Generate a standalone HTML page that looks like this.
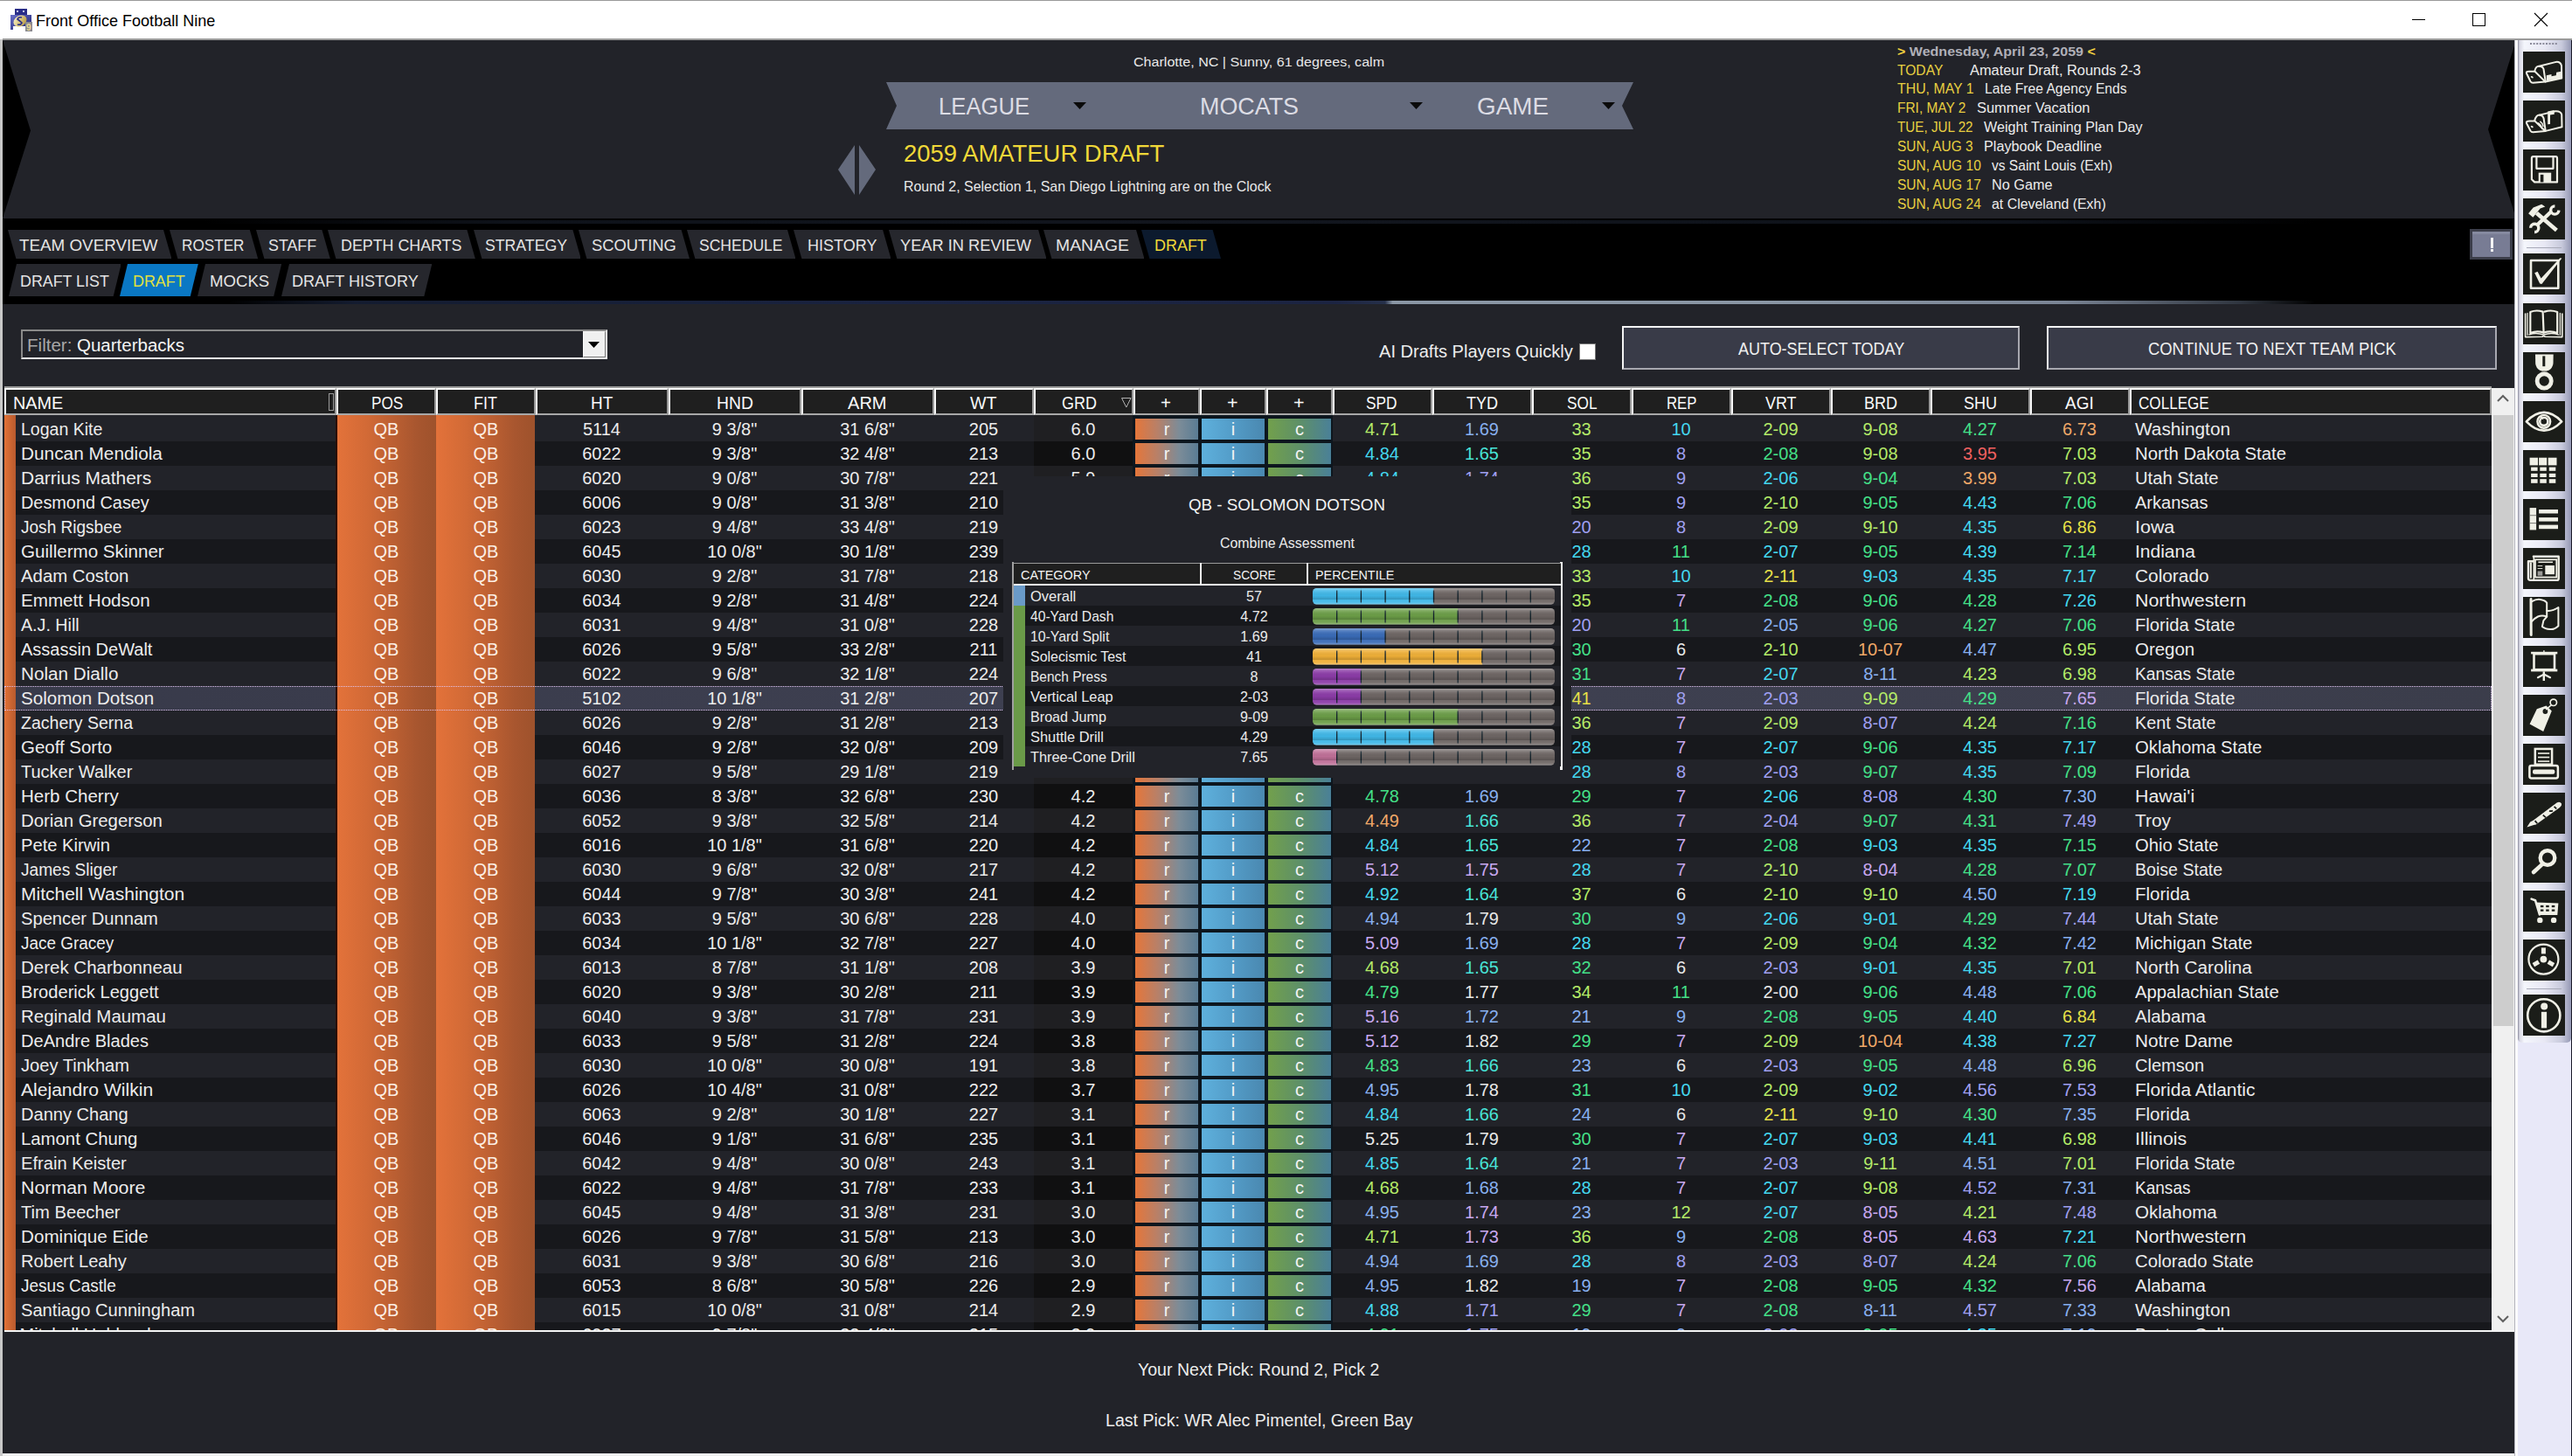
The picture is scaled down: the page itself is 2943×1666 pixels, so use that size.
<!DOCTYPE html><html><head><meta charset="utf-8"><title>Front Office Football Nine</title><style>
html,body{margin:0;padding:0;}body{width:2943px;height:1666px;position:relative;overflow:hidden;background:#ffffff;font-family:"Liberation Sans",sans-serif;}
body div{position:absolute;box-sizing:border-box;}
body svg{position:absolute;}
</style></head><body>
<div style="left:0px;top:0px;width:2943px;height:1px;background:#9a9a9a;"></div>
<svg width="26" height="26" viewBox="0 0 26 26" style="left:12px;top:10px"><defs><linearGradient id="ig" x1="0" y1="0" x2="1" y2="1"><stop offset="0" stop-color="#6a70c8"/><stop offset="1" stop-color="#1c2070"/></linearGradient><linearGradient id="fg" x1="0" y1="0" x2="1" y2="1"><stop offset="0" stop-color="#fff8d0"/><stop offset="1" stop-color="#b09030"/></linearGradient></defs><rect x="5" y="0" width="14" height="8" fill="#2a2e88"/><rect x="7" y="2" width="2" height="2" fill="#c0c0e8"/><rect x="14" y="2" width="2" height="2" fill="#c0c0e8"/><path d="M0 7 h24 v17 h-3 v-4 h-18 v4 h-3 z" fill="url(#ig)"/><ellipse cx="11" cy="14" rx="8" ry="6" transform="rotate(-30 11 14)" fill="url(#fg)"/><path d="M13 10 q-4 -1 -5 2 q3 2 5 4 q-1 3 -5 2" fill="none" stroke="#2a2e88" stroke-width="1.6"/><rect x="17" y="15" width="8" height="11" fill="#8a8a90"/><text x="18" y="25" font-family="Liberation Sans" font-size="10" font-weight="bold" fill="#e8d890">9</text></svg>
<svg width="225.4" height="29.8" style="left:36.86px;top:8.61px;overflow:visible"><text x="4" y="21.39" font-family="Liberation Sans, sans-serif" font-size="18.6" font-weight="normal" fill="#000000" textLength="205.39" lengthAdjust="spacingAndGlyphs">Front Office Football Nine</text></svg>
<div style="left:2760px;top:22px;width:15px;height:1px;background:#000;"></div>
<div style="left:2829px;top:15px;width:15px;height:15px;border:1px solid #000;"></div>
<svg width="17" height="17" style="left:2899px;top:14px"><path d="M1 1 L16 16 M16 1 L1 16" stroke="#000" stroke-width="1.1"/></svg>
<div style="left:0px;top:45px;width:3px;height:1621px;background:#c8c8c8;"></div>
<div style="left:3px;top:44px;width:2940px;height:2px;background:#9a9a9a;"></div>
<div style="left:3px;top:46px;width:2876px;height:1617px;background:#222329;"></div>
<svg width="40" height="205" style="left:3px;top:46px"><polygon points="0,0 32,103.5 0,204" fill="#000"/></svg>
<svg width="40" height="205" style="left:2839px;top:46px"><polygon points="40,0 8,102 40,204" fill="#000"/></svg>
<svg width="307.0" height="24.8" style="left:1293.08px;top:58.17px;overflow:visible"><text x="4" y="17.82" font-family="Liberation Sans, sans-serif" font-size="15.5" font-weight="normal" fill="#e8e8e8" textLength="287.04" lengthAdjust="spacingAndGlyphs">Charlotte, NC | Sunny, 61 degrees, calm</text></svg>
<svg width="860" height="56" style="left:1012px;top:93px"><polygon points="2,1 857,1 844,28 857,55 2,55 14,28" fill="#646a7c"/></svg>
<svg width="124.1" height="44.8" style="left:1070.28px;top:98.50px;overflow:visible"><text x="4" y="32.20" font-family="Liberation Sans, sans-serif" font-size="28" font-weight="normal" fill="#dcdce4" textLength="104.14" lengthAdjust="spacingAndGlyphs">LEAGUE</text></svg>
<svg width="133.0" height="44.8" style="left:1369.08px;top:98.50px;overflow:visible"><text x="4" y="32.20" font-family="Liberation Sans, sans-serif" font-size="28" font-weight="normal" fill="#dcdce4" textLength="113.04" lengthAdjust="spacingAndGlyphs">MOCATS</text></svg>
<svg width="102.0" height="44.8" style="left:1686.08px;top:98.50px;overflow:visible"><text x="4" y="32.20" font-family="Liberation Sans, sans-serif" font-size="28" font-weight="normal" fill="#dcdce4" textLength="82.04" lengthAdjust="spacingAndGlyphs">GAME</text></svg>
<svg width="16" height="10" style="left:1228px;top:117px"><polygon points="0,0 15,0 7.5,8" fill="#0a0a0a"/></svg>
<svg width="16" height="10" style="left:1613px;top:117px"><polygon points="0,0 15,0 7.5,8" fill="#0a0a0a"/></svg>
<svg width="16" height="10" style="left:1833px;top:117px"><polygon points="0,0 15,0 7.5,8" fill="#0a0a0a"/></svg>
<svg width="44" height="58" style="left:959px;top:166px"><polygon points="19,0 19,57 0,28" fill="#646a7c"/><polygon points="24,0 24,57 43,28" fill="#646a7c"/></svg>
<svg width="318.3" height="45.6" style="left:1029.86px;top:152.32px;overflow:visible"><text x="4" y="32.77" font-family="Liberation Sans, sans-serif" font-size="28.5" font-weight="normal" fill="#f0d838" textLength="298.28" lengthAdjust="spacingAndGlyphs">2059 AMATEUR DRAFT</text></svg>
<svg width="440.6" height="25.1" style="left:1029.97px;top:201.04px;overflow:visible"><text x="4" y="18.05" font-family="Liberation Sans, sans-serif" font-size="15.7" font-weight="normal" fill="#e8e8e8" textLength="420.56" lengthAdjust="spacingAndGlyphs">Round 2, Selection 1, San Diego Lightning are on the Clock</text></svg>
<svg width="246.8" height="24.8" style="left:2167.38px;top:46.08px;overflow:visible"><text x="4" y="17.82" font-family="Liberation Sans, sans-serif" font-size="15.5" font-weight="bold" fill="#b0b0b8" textLength="226.84" lengthAdjust="spacingAndGlyphs"><tspan fill="#f0d040">&gt;</tspan> Wednesday, April 23, 2059 <tspan fill="#f0d040">&lt;</tspan></text></svg>
<svg width="72.3" height="25.6" style="left:2167.36px;top:67.50px;overflow:visible"><text x="4" y="18.40" font-family="Liberation Sans, sans-serif" font-size="16" font-weight="normal" fill="#e8d040" textLength="52.28" lengthAdjust="spacingAndGlyphs">TODAY</text></svg>
<svg width="215.7" height="25.6" style="left:2250.36px;top:67.50px;overflow:visible"><text x="4" y="18.40" font-family="Liberation Sans, sans-serif" font-size="16" font-weight="normal" fill="#ececec" textLength="195.68" lengthAdjust="spacingAndGlyphs">Amateur Draft, Rounds 2-3</text></svg>
<svg width="107.6" height="25.6" style="left:2167.36px;top:89.46px;overflow:visible"><text x="4" y="18.40" font-family="Liberation Sans, sans-serif" font-size="16" font-weight="normal" fill="#e8d040" textLength="87.58" lengthAdjust="spacingAndGlyphs">THU, MAY 1</text></svg>
<svg width="182.6" height="25.6" style="left:2266.76px;top:89.46px;overflow:visible"><text x="4" y="18.40" font-family="Liberation Sans, sans-serif" font-size="16" font-weight="normal" fill="#ececec" textLength="162.58" lengthAdjust="spacingAndGlyphs">Late Free Agency Ends</text></svg>
<svg width="98.4" height="25.6" style="left:2167.36px;top:111.42px;overflow:visible"><text x="4" y="18.40" font-family="Liberation Sans, sans-serif" font-size="16" font-weight="normal" fill="#e8d040" textLength="78.38" lengthAdjust="spacingAndGlyphs">FRI, MAY 2</text></svg>
<svg width="149.5" height="25.6" style="left:2257.56px;top:111.42px;overflow:visible"><text x="4" y="18.40" font-family="Liberation Sans, sans-serif" font-size="16" font-weight="normal" fill="#ececec" textLength="129.48" lengthAdjust="spacingAndGlyphs">Summer Vacation</text></svg>
<svg width="106.6" height="25.6" style="left:2167.36px;top:133.38px;overflow:visible"><text x="4" y="18.40" font-family="Liberation Sans, sans-serif" font-size="16" font-weight="normal" fill="#e8d040" textLength="86.58" lengthAdjust="spacingAndGlyphs">TUE, JUL 22</text></svg>
<svg width="201.6" height="25.6" style="left:2265.76px;top:133.38px;overflow:visible"><text x="4" y="18.40" font-family="Liberation Sans, sans-serif" font-size="16" font-weight="normal" fill="#ececec" textLength="181.58" lengthAdjust="spacingAndGlyphs">Weight Training Plan Day</text></svg>
<svg width="106.6" height="25.6" style="left:2167.36px;top:155.34px;overflow:visible"><text x="4" y="18.40" font-family="Liberation Sans, sans-serif" font-size="16" font-weight="normal" fill="#e8d040" textLength="86.58" lengthAdjust="spacingAndGlyphs">SUN, AUG 3</text></svg>
<svg width="155.1" height="25.6" style="left:2265.76px;top:155.34px;overflow:visible"><text x="4" y="18.40" font-family="Liberation Sans, sans-serif" font-size="16" font-weight="normal" fill="#ececec" textLength="135.08" lengthAdjust="spacingAndGlyphs">Playbook Deadline</text></svg>
<svg width="115.8" height="25.6" style="left:2167.36px;top:177.30px;overflow:visible"><text x="4" y="18.40" font-family="Liberation Sans, sans-serif" font-size="16" font-weight="normal" fill="#e8d040" textLength="95.78" lengthAdjust="spacingAndGlyphs">SUN, AUG 10</text></svg>
<svg width="158.3" height="25.6" style="left:2274.66px;top:177.30px;overflow:visible"><text x="4" y="18.40" font-family="Liberation Sans, sans-serif" font-size="16" font-weight="normal" fill="#ececec" textLength="138.28" lengthAdjust="spacingAndGlyphs">vs Saint Louis (Exh)</text></svg>
<svg width="115.8" height="25.6" style="left:2167.36px;top:199.26px;overflow:visible"><text x="4" y="18.40" font-family="Liberation Sans, sans-serif" font-size="16" font-weight="normal" fill="#e8d040" textLength="95.78" lengthAdjust="spacingAndGlyphs">SUN, AUG 17</text></svg>
<svg width="89.5" height="25.6" style="left:2274.66px;top:199.26px;overflow:visible"><text x="4" y="18.40" font-family="Liberation Sans, sans-serif" font-size="16" font-weight="normal" fill="#ececec" textLength="69.48" lengthAdjust="spacingAndGlyphs">No Game</text></svg>
<svg width="115.8" height="25.6" style="left:2167.36px;top:221.22px;overflow:visible"><text x="4" y="18.40" font-family="Liberation Sans, sans-serif" font-size="16" font-weight="normal" fill="#e8d040" textLength="95.78" lengthAdjust="spacingAndGlyphs">SUN, AUG 24</text></svg>
<svg width="150.7" height="25.6" style="left:2274.66px;top:221.22px;overflow:visible"><text x="4" y="18.40" font-family="Liberation Sans, sans-serif" font-size="16" font-weight="normal" fill="#ececec" textLength="130.68" lengthAdjust="spacingAndGlyphs">at Cleveland (Exh)</text></svg>
<div style="left:3px;top:250px;width:2876px;height:98px;background:#000;"></div>
<div style="left:3px;top:252px;width:2876px;height:4px;background:linear-gradient(90deg,#000 0%,#000 8%,#0e121a 20%,#12161e 50%,#0e121a 80%,#000 92%);"></div>
<div style="left:3px;top:344px;width:2876px;height:4px;background:linear-gradient(90deg,#000 0%,#000 9%,#141c30 14%,#1a2340 35%,#1c2442 53%,#26304a 55%,#8a96a4 55.3%,#8a96a4 70%,#7a8494 82%,#303640 89%,#000 92%,#000 100%);"></div>
<svg width="187.4" height="33" style="left:8.6px;top:263px"><polygon points="0.0,0 178.0,0 187.4,33 9.4,33" fill="#26272d"/></svg>
<svg width="178.5" height="30.2" style="left:18.24px;top:265.26px;overflow:visible"><text x="4" y="21.73" font-family="Liberation Sans, sans-serif" font-size="18.9" font-weight="normal" fill="#e4e4e4" textLength="158.51" lengthAdjust="spacingAndGlyphs">TEAM OVERVIEW</text></svg>
<svg width="101.2" height="33" style="left:194.4px;top:263px"><polygon points="0.0,0 91.8,0 101.2,33 9.4,33" fill="#26272d"/></svg>
<svg width="91.5" height="30.2" style="left:204.24px;top:265.26px;overflow:visible"><text x="4" y="21.73" font-family="Liberation Sans, sans-serif" font-size="18.9" font-weight="normal" fill="#e4e4e4" textLength="71.51" lengthAdjust="spacingAndGlyphs">ROSTER</text></svg>
<svg width="84.8" height="33" style="left:293.2px;top:263px"><polygon points="0.0,0 75.4,0 84.8,33 9.4,33" fill="#26272d"/></svg>
<svg width="75.1" height="30.2" style="left:303.24px;top:265.26px;overflow:visible"><text x="4" y="21.73" font-family="Liberation Sans, sans-serif" font-size="18.9" font-weight="normal" fill="#e4e4e4" textLength="55.11" lengthAdjust="spacingAndGlyphs">STAFF</text></svg>
<svg width="168.8" height="33" style="left:375.2px;top:263px"><polygon points="0.0,0 159.4,0 168.8,33 9.4,33" fill="#26272d"/></svg>
<svg width="158.4" height="30.2" style="left:385.94px;top:265.26px;overflow:visible"><text x="4" y="21.73" font-family="Liberation Sans, sans-serif" font-size="18.9" font-weight="normal" fill="#e4e4e4" textLength="138.41" lengthAdjust="spacingAndGlyphs">DEPTH CHARTS</text></svg>
<svg width="122.8" height="33" style="left:541.6px;top:263px"><polygon points="0.0,0 113.4,0 122.8,33 9.4,33" fill="#26272d"/></svg>
<svg width="114.0" height="30.2" style="left:551.24px;top:265.26px;overflow:visible"><text x="4" y="21.73" font-family="Liberation Sans, sans-serif" font-size="18.9" font-weight="normal" fill="#e4e4e4" textLength="94.01" lengthAdjust="spacingAndGlyphs">STRATEGY</text></svg>
<svg width="127.0" height="33" style="left:662.0px;top:263px"><polygon points="0.0,0 117.6,0 127.0,33 9.4,33" fill="#26272d"/></svg>
<svg width="116.8" height="30.2" style="left:672.54px;top:265.26px;overflow:visible"><text x="4" y="21.73" font-family="Liberation Sans, sans-serif" font-size="18.9" font-weight="normal" fill="#e4e4e4" textLength="96.81" lengthAdjust="spacingAndGlyphs">SCOUTING</text></svg>
<svg width="124.4" height="33" style="left:786.0px;top:263px"><polygon points="0.0,0 115.0,0 124.4,33 9.4,33" fill="#26272d"/></svg>
<svg width="115.5" height="30.2" style="left:796.24px;top:265.26px;overflow:visible"><text x="4" y="21.73" font-family="Liberation Sans, sans-serif" font-size="18.9" font-weight="normal" fill="#e4e4e4" textLength="95.51" lengthAdjust="spacingAndGlyphs">SCHEDULE</text></svg>
<svg width="111.5" height="33" style="left:907.9px;top:263px"><polygon points="0.0,0 102.1,0 111.5,33 9.4,33" fill="#26272d"/></svg>
<svg width="99.4" height="30.2" style="left:919.84px;top:265.26px;overflow:visible"><text x="4" y="21.73" font-family="Liberation Sans, sans-serif" font-size="18.9" font-weight="normal" fill="#e4e4e4" textLength="79.41" lengthAdjust="spacingAndGlyphs">HISTORY</text></svg>
<svg width="180.5" height="33" style="left:1016.9px;top:263px"><polygon points="0.0,0 171.1,0 180.5,33 9.4,33" fill="#26272d"/></svg>
<svg width="170.0" height="30.2" style="left:1026.14px;top:265.26px;overflow:visible"><text x="4" y="21.73" font-family="Liberation Sans, sans-serif" font-size="18.9" font-weight="normal" fill="#e4e4e4" textLength="150.01" lengthAdjust="spacingAndGlyphs">YEAR IN REVIEW</text></svg>
<svg width="115.4" height="33" style="left:1194.0px;top:263px"><polygon points="0.0,0 106.0,0 115.4,33 9.4,33" fill="#26272d"/></svg>
<svg width="103.9" height="30.2" style="left:1203.84px;top:265.26px;overflow:visible"><text x="4" y="21.73" font-family="Liberation Sans, sans-serif" font-size="18.9" font-weight="normal" fill="#e4e4e4" textLength="83.91" lengthAdjust="spacingAndGlyphs">MANAGE</text></svg>
<svg width="91.0" height="33" style="left:1305.8px;top:263px"><polygon points="0.0,0 81.6,0 91.0,33 9.4,33" fill="#0c1a2e"/></svg>
<svg width="79.8" height="30.2" style="left:1316.54px;top:265.26px;overflow:visible"><text x="4" y="21.73" font-family="Liberation Sans, sans-serif" font-size="18.9" font-weight="normal" fill="#f0d838" textLength="59.81" lengthAdjust="spacingAndGlyphs">DRAFT</text></svg>
<svg width="128.7" height="37" style="left:9.7px;top:302px"><polygon points="9.0,0 128.7,0 119.7,37 0.0,37" fill="#26272d"/></svg>
<svg width="121.8" height="30.2" style="left:18.54px;top:305.76px;overflow:visible"><text x="4" y="21.73" font-family="Liberation Sans, sans-serif" font-size="18.9" font-weight="normal" fill="#e4e4e4" textLength="101.81" lengthAdjust="spacingAndGlyphs">DRAFT LIST</text></svg>
<svg width="89.8" height="37" style="left:137.2px;top:302px"><polygon points="9.0,0 89.8,0 80.8,37 0.0,37" fill="#0a78c4"/></svg>
<svg width="79.7" height="30.2" style="left:148.04px;top:305.76px;overflow:visible"><text x="4" y="21.73" font-family="Liberation Sans, sans-serif" font-size="18.9" font-weight="normal" fill="#e0e040" textLength="59.71" lengthAdjust="spacingAndGlyphs">DRAFT</text></svg>
<svg width="96.2" height="37" style="left:225.8px;top:302px"><polygon points="9.0,0 96.2,0 87.2,37 0.0,37" fill="#26272d"/></svg>
<svg width="88.2" height="30.2" style="left:235.54px;top:305.76px;overflow:visible"><text x="4" y="21.73" font-family="Liberation Sans, sans-serif" font-size="18.9" font-weight="normal" fill="#e4e4e4" textLength="68.21" lengthAdjust="spacingAndGlyphs">MOCKS</text></svg>
<svg width="172.3" height="37" style="left:321.5px;top:302px"><polygon points="9.0,0 172.3,0 163.3,37 0.0,37" fill="#26272d"/></svg>
<svg width="164.7" height="30.2" style="left:330.24px;top:305.76px;overflow:visible"><text x="4" y="21.73" font-family="Liberation Sans, sans-serif" font-size="18.9" font-weight="normal" fill="#e4e4e4" textLength="144.71" lengthAdjust="spacingAndGlyphs">DRAFT HISTORY</text></svg>
<div style="left:2826px;top:262px;width:49px;height:35px;background:#787c94;border:3px solid #3c3e4a;"></div>
<div style="left:2829px;top:265px;width:43px;height:3px;background:#868aa0;"></div>
<div style="left:2850px;top:272px;width:3px;height:12px;background:#f4f4f4;"></div>
<div style="left:2850px;top:285px;width:3px;height:3px;background:#f4f4f4;"></div>
<div style="left:24px;top:377px;width:671px;height:34px;background:#222329;border:2px solid;border-color:#8a8a8a #f0f0f0 #f0f0f0 #8a8a8a;"></div>
<svg width="71.4" height="32.0" style="left:27.00px;top:379.20px;overflow:visible"><text x="4" y="23.00" font-family="Liberation Sans, sans-serif" font-size="20" font-weight="normal" fill="#a8a8a8" textLength="51.40" lengthAdjust="spacingAndGlyphs">Filter:</text></svg>
<svg width="143.1" height="32.0" style="left:83.70px;top:379.20px;overflow:visible"><text x="4" y="23.00" font-family="Liberation Sans, sans-serif" font-size="20" font-weight="normal" fill="#f4f4f4" textLength="123.10" lengthAdjust="spacingAndGlyphs">Quarterbacks</text></svg>
<div style="left:667px;top:379px;width:26px;height:30px;background:#f0f0f0;border:1px solid;border-color:#fafafa #7a7a7a #7a7a7a #fafafa;"></div>
<svg width="14" height="8" style="left:673px;top:391px"><polygon points="0,0 13,0 6.5,7" fill="#000"/></svg>
<svg width="241.9" height="31.2" style="left:1574.42px;top:386.68px;overflow:visible"><text x="4" y="22.42" font-family="Liberation Sans, sans-serif" font-size="19.5" font-weight="normal" fill="#ececec" textLength="221.86" lengthAdjust="spacingAndGlyphs">AI Drafts Players Quickly</text></svg>
<div style="left:1807px;top:393px;width:19px;height:19px;background:#ffffff;border:1px solid #777;"></div>
<div style="left:1856px;top:373px;width:455px;height:50px;background:#393b48;border:2px solid;border-color:#f4f4f4 #a8a8b0 #a8a8b0 #f4f4f4;"></div>
<svg width="210.2" height="31.2" style="left:1984.52px;top:383.57px;overflow:visible"><text x="4" y="22.42" font-family="Liberation Sans, sans-serif" font-size="19.5" font-weight="normal" fill="#f0f0f0" textLength="190.16" lengthAdjust="spacingAndGlyphs">AUTO-SELECT TODAY</text></svg>
<div style="left:2342px;top:373px;width:515px;height:50px;background:#393b48;border:2px solid;border-color:#f4f4f4 #a8a8b0 #a8a8b0 #f4f4f4;"></div>
<svg width="303.9" height="31.2" style="left:2453.82px;top:383.57px;overflow:visible"><text x="4" y="22.42" font-family="Liberation Sans, sans-serif" font-size="19.5" font-weight="normal" fill="#f0f0f0" textLength="283.86" lengthAdjust="spacingAndGlyphs">CONTINUE TO NEXT TEAM PICK</text></svg>
<div style="left:5px;top:442px;width:2846px;height:2px;background:#9c9c9c;"></div>
<div style="left:5px;top:444px;width:380px;height:31px;background:#1f1f1f;border-left:2px solid #fafafa;border-top:2px solid #fafafa;border-right:2px solid #9a9a9a;border-bottom:2px solid #a8a8a8;"></div>
<svg width="77.4" height="31.4" style="left:10.72px;top:444.96px;overflow:visible"><text x="4" y="22.54" font-family="Liberation Sans, sans-serif" font-size="19.6" font-weight="normal" fill="#fafafa" textLength="57.37" lengthAdjust="spacingAndGlyphs">NAME</text></svg>
<div style="left:385px;top:444px;width:114px;height:31px;background:#1f1f1f;border-left:2px solid #fafafa;border-top:2px solid #fafafa;border-right:2px solid #9a9a9a;border-bottom:2px solid #a8a8a8;"></div>
<svg width="56.3" height="31.4" style="left:420.52px;top:444.96px;overflow:visible"><text x="4" y="22.54" font-family="Liberation Sans, sans-serif" font-size="19.6" font-weight="normal" fill="#fafafa" textLength="36.27" lengthAdjust="spacingAndGlyphs">POS</text></svg>
<div style="left:499px;top:444px;width:114px;height:31px;background:#1f1f1f;border-left:2px solid #fafafa;border-top:2px solid #fafafa;border-right:2px solid #9a9a9a;border-bottom:2px solid #a8a8a8;"></div>
<svg width="46.9" height="31.4" style="left:538.22px;top:444.96px;overflow:visible"><text x="4" y="22.54" font-family="Liberation Sans, sans-serif" font-size="19.6" font-weight="normal" fill="#fafafa" textLength="26.87" lengthAdjust="spacingAndGlyphs">FIT</text></svg>
<div style="left:613px;top:444px;width:152px;height:31px;background:#1f1f1f;border-left:2px solid #fafafa;border-top:2px solid #fafafa;border-right:2px solid #9a9a9a;border-bottom:2px solid #a8a8a8;"></div>
<svg width="45.3" height="31.4" style="left:672.02px;top:444.96px;overflow:visible"><text x="4" y="22.54" font-family="Liberation Sans, sans-serif" font-size="19.6" font-weight="normal" fill="#fafafa" textLength="25.27" lengthAdjust="spacingAndGlyphs">HT</text></svg>
<div style="left:765px;top:444px;width:152px;height:31px;background:#1f1f1f;border-left:2px solid #fafafa;border-top:2px solid #fafafa;border-right:2px solid #9a9a9a;border-bottom:2px solid #a8a8a8;"></div>
<svg width="61.9" height="31.4" style="left:816.22px;top:444.96px;overflow:visible"><text x="4" y="22.54" font-family="Liberation Sans, sans-serif" font-size="19.6" font-weight="normal" fill="#fafafa" textLength="41.87" lengthAdjust="spacingAndGlyphs">HND</text></svg>
<div style="left:917px;top:444px;width:152px;height:31px;background:#1f1f1f;border-left:2px solid #fafafa;border-top:2px solid #fafafa;border-right:2px solid #9a9a9a;border-bottom:2px solid #a8a8a8;"></div>
<svg width="64.6" height="31.4" style="left:966.22px;top:444.96px;overflow:visible"><text x="4" y="22.54" font-family="Liberation Sans, sans-serif" font-size="19.6" font-weight="normal" fill="#fafafa" textLength="44.57" lengthAdjust="spacingAndGlyphs">ARM</text></svg>
<div style="left:1069px;top:444px;width:114px;height:31px;background:#1f1f1f;border-left:2px solid #fafafa;border-top:2px solid #fafafa;border-right:2px solid #9a9a9a;border-bottom:2px solid #a8a8a8;"></div>
<svg width="50.6" height="31.4" style="left:1106.22px;top:444.96px;overflow:visible"><text x="4" y="22.54" font-family="Liberation Sans, sans-serif" font-size="19.6" font-weight="normal" fill="#fafafa" textLength="30.57" lengthAdjust="spacingAndGlyphs">WT</text></svg>
<div style="left:1183px;top:444px;width:114px;height:31px;background:#1f1f1f;border-left:2px solid #fafafa;border-top:2px solid #fafafa;border-right:2px solid #9a9a9a;border-bottom:2px solid #a8a8a8;"></div>
<svg width="59.9" height="31.4" style="left:1211.12px;top:444.96px;overflow:visible"><text x="4" y="22.54" font-family="Liberation Sans, sans-serif" font-size="19.6" font-weight="normal" fill="#fafafa" textLength="39.87" lengthAdjust="spacingAndGlyphs">GRD</text></svg>
<div style="left:1297px;top:444px;width:76px;height:31px;background:#1f1f1f;border-left:2px solid #fafafa;border-top:2px solid #fafafa;border-right:2px solid #9a9a9a;border-bottom:2px solid #a8a8a8;"></div>
<svg width="32.0" height="31.4" style="left:1324.22px;top:444.96px;overflow:visible"><text x="4" y="22.54" font-family="Liberation Sans, sans-serif" font-size="19.6" font-weight="normal" fill="#fafafa" textLength="11.97" lengthAdjust="spacingAndGlyphs">+</text></svg>
<div style="left:1373px;top:444px;width:76px;height:31px;background:#1f1f1f;border-left:2px solid #fafafa;border-top:2px solid #fafafa;border-right:2px solid #9a9a9a;border-bottom:2px solid #a8a8a8;"></div>
<svg width="32.6" height="31.4" style="left:1400.42px;top:444.96px;overflow:visible"><text x="4" y="22.54" font-family="Liberation Sans, sans-serif" font-size="19.6" font-weight="normal" fill="#fafafa" textLength="12.57" lengthAdjust="spacingAndGlyphs">+</text></svg>
<div style="left:1449px;top:444px;width:76px;height:31px;background:#1f1f1f;border-left:2px solid #fafafa;border-top:2px solid #fafafa;border-right:2px solid #9a9a9a;border-bottom:2px solid #a8a8a8;"></div>
<svg width="32.6" height="31.4" style="left:1476.02px;top:444.96px;overflow:visible"><text x="4" y="22.54" font-family="Liberation Sans, sans-serif" font-size="19.6" font-weight="normal" fill="#fafafa" textLength="12.57" lengthAdjust="spacingAndGlyphs">+</text></svg>
<div style="left:1525px;top:444px;width:114px;height:31px;background:#1f1f1f;border-left:2px solid #fafafa;border-top:2px solid #fafafa;border-right:2px solid #9a9a9a;border-bottom:2px solid #a8a8a8;"></div>
<svg width="55.6" height="31.4" style="left:1559.22px;top:444.96px;overflow:visible"><text x="4" y="22.54" font-family="Liberation Sans, sans-serif" font-size="19.6" font-weight="normal" fill="#fafafa" textLength="35.57" lengthAdjust="spacingAndGlyphs">SPD</text></svg>
<div style="left:1639px;top:444px;width:114px;height:31px;background:#1f1f1f;border-left:2px solid #fafafa;border-top:2px solid #fafafa;border-right:2px solid #9a9a9a;border-bottom:2px solid #a8a8a8;"></div>
<svg width="56.2" height="31.4" style="left:1673.62px;top:444.96px;overflow:visible"><text x="4" y="22.54" font-family="Liberation Sans, sans-serif" font-size="19.6" font-weight="normal" fill="#fafafa" textLength="36.17" lengthAdjust="spacingAndGlyphs">TYD</text></svg>
<div style="left:1753px;top:444px;width:114px;height:31px;background:#1f1f1f;border-left:2px solid #fafafa;border-top:2px solid #fafafa;border-right:2px solid #9a9a9a;border-bottom:2px solid #a8a8a8;"></div>
<svg width="54.5" height="31.4" style="left:1788.72px;top:444.96px;overflow:visible"><text x="4" y="22.54" font-family="Liberation Sans, sans-serif" font-size="19.6" font-weight="normal" fill="#fafafa" textLength="34.47" lengthAdjust="spacingAndGlyphs">SOL</text></svg>
<div style="left:1867px;top:444px;width:114px;height:31px;background:#1f1f1f;border-left:2px solid #fafafa;border-top:2px solid #fafafa;border-right:2px solid #9a9a9a;border-bottom:2px solid #a8a8a8;"></div>
<svg width="54.5" height="31.4" style="left:1902.72px;top:444.96px;overflow:visible"><text x="4" y="22.54" font-family="Liberation Sans, sans-serif" font-size="19.6" font-weight="normal" fill="#fafafa" textLength="34.47" lengthAdjust="spacingAndGlyphs">REP</text></svg>
<div style="left:1981px;top:444px;width:114px;height:31px;background:#1f1f1f;border-left:2px solid #fafafa;border-top:2px solid #fafafa;border-right:2px solid #9a9a9a;border-bottom:2px solid #a8a8a8;"></div>
<svg width="55.6" height="31.4" style="left:2016.02px;top:444.96px;overflow:visible"><text x="4" y="22.54" font-family="Liberation Sans, sans-serif" font-size="19.6" font-weight="normal" fill="#fafafa" textLength="35.57" lengthAdjust="spacingAndGlyphs">VRT</text></svg>
<div style="left:2095px;top:444px;width:114px;height:31px;background:#1f1f1f;border-left:2px solid #fafafa;border-top:2px solid #fafafa;border-right:2px solid #9a9a9a;border-bottom:2px solid #a8a8a8;"></div>
<svg width="58.2" height="31.4" style="left:2128.62px;top:444.96px;overflow:visible"><text x="4" y="22.54" font-family="Liberation Sans, sans-serif" font-size="19.6" font-weight="normal" fill="#fafafa" textLength="38.17" lengthAdjust="spacingAndGlyphs">BRD</text></svg>
<div style="left:2209px;top:444px;width:114px;height:31px;background:#1f1f1f;border-left:2px solid #fafafa;border-top:2px solid #fafafa;border-right:2px solid #9a9a9a;border-bottom:2px solid #a8a8a8;"></div>
<svg width="58.2" height="31.4" style="left:2242.62px;top:444.96px;overflow:visible"><text x="4" y="22.54" font-family="Liberation Sans, sans-serif" font-size="19.6" font-weight="normal" fill="#fafafa" textLength="38.17" lengthAdjust="spacingAndGlyphs">SHU</text></svg>
<div style="left:2323px;top:444px;width:114px;height:31px;background:#1f1f1f;border-left:2px solid #fafafa;border-top:2px solid #fafafa;border-right:2px solid #9a9a9a;border-bottom:2px solid #a8a8a8;"></div>
<svg width="52.7" height="31.4" style="left:2358.52px;top:444.96px;overflow:visible"><text x="4" y="22.54" font-family="Liberation Sans, sans-serif" font-size="19.6" font-weight="normal" fill="#fafafa" textLength="32.67" lengthAdjust="spacingAndGlyphs">AGI</text></svg>
<div style="left:2437px;top:444px;width:414px;height:31px;background:#1f1f1f;border-left:2px solid #fafafa;border-top:2px solid #fafafa;border-right:2px solid #9a9a9a;border-bottom:2px solid #a8a8a8;"></div>
<svg width="100.8" height="31.4" style="left:2442.72px;top:444.96px;overflow:visible"><text x="4" y="22.54" font-family="Liberation Sans, sans-serif" font-size="19.6" font-weight="normal" fill="#fafafa" textLength="80.77" lengthAdjust="spacingAndGlyphs">COLLEGE</text></svg>
<div style="left:376px;top:450px;width:6px;height:20px;border:1px solid #9a9a9a;"></div>
<svg width="12" height="12" style="left:1283px;top:455px"><polygon points="0.5,0.5 11,0.5 5.75,11" fill="none" stroke="#b0b0b0" stroke-width="1"/></svg>
<div style="left:2851px;top:444px;width:26px;height:1079px;background:#f0f0f0;"></div>
<div style="left:2853px;top:475px;width:23px;height:699px;background:#cdcdcd;"></div>
<svg width="14" height="9" style="left:2857px;top:451px"><polyline points="1,8 7,2 13,8" fill="none" stroke="#606060" stroke-width="2"/></svg>
<svg width="14" height="9" style="left:2857px;top:1505px"><polyline points="1,1 7,7 13,1" fill="none" stroke="#606060" stroke-width="2"/></svg>
<div style="left:5px;top:475px;width:2846px;height:1047px;overflow:hidden;background:#222329;">
<div style="left:0;top:0px;width:2846px;height:30px;background:#222329"></div>
<div style="left:1178px;top:0px;width:113px;height:30px;background:#1f1f22"></div>
<div style="left:1291px;top:0px;width:229px;height:30px;background:#0d161e"></div>
<div style="left:0;top:0px;width:13px;height:30px;background:linear-gradient(90deg,#e27236,#b85a2e)"></div>
<div style="left:381px;top:0px;width:113px;height:30px;background:linear-gradient(90deg,#e3723a 0%,#d26a36 30%,#a8562f 80%,#9e522c 100%)"></div>
<div style="left:494px;top:0px;width:113px;height:30px;background:linear-gradient(90deg,#e3723a 0%,#d26a36 30%,#a8562f 80%,#9e522c 100%)"></div>
<div style="left:379px;top:0px;width:2px;height:30px;background:#2a0e04"></div>
<div style="left:1294px;top:4px;width:72px;height:24px;background:linear-gradient(90deg,#e5763a 0%,#b88068 35%,#7c8c98 70%,#5a7c94 100%);color:#f4f4f4;font-size:20px;line-height:24px;text-align:center">r</div>
<div style="left:1370px;top:4px;width:72px;height:24px;background:linear-gradient(90deg,#5eb0dc 0%,#55a0cc 40%,#4a88b0 100%);color:#f4f4f4;font-size:20px;line-height:24px;text-align:center">i</div>
<div style="left:1446px;top:4px;width:72px;height:24px;background:linear-gradient(90deg,#72a04c 0%,#5e9068 50%,#4a8098 100%);color:#f4f4f4;font-size:20px;line-height:24px;text-align:center">c</div>
<svg width="113.4" height="32.0" style="left:14.60px;top:0.20px;overflow:visible"><text x="4" y="23.00" font-family="Liberation Sans, sans-serif" font-size="20" font-weight="normal" fill="#ececec" textLength="93.40" lengthAdjust="spacingAndGlyphs">Logan Kite</text></svg>
<div style="left:381px;top:2px;width:112px;height:28px;text-align:center;font-size:20px;line-height:29px;color:#fcefe4;white-space:nowrap">QB</div>
<div style="left:495px;top:2px;width:112px;height:28px;text-align:center;font-size:20px;line-height:29px;color:#fcefe4;white-space:nowrap">QB</div>
<div style="left:608px;top:2px;width:151px;height:28px;text-align:center;font-size:20px;line-height:29px;color:#ececec;white-space:nowrap">5114</div>
<div style="left:760px;top:2px;width:151px;height:28px;text-align:center;font-size:20px;line-height:29px;color:#ececec;white-space:nowrap">9 3/8&quot;</div>
<div style="left:912px;top:2px;width:151px;height:28px;text-align:center;font-size:20px;line-height:29px;color:#ececec;white-space:nowrap">31 6/8&quot;</div>
<div style="left:1064px;top:2px;width:113px;height:28px;text-align:center;font-size:20px;line-height:29px;color:#ececec;white-space:nowrap">205</div>
<div style="left:1178px;top:2px;width:113px;height:28px;text-align:center;font-size:20px;line-height:29px;color:#ececec;white-space:nowrap">6.0</div>
<div style="left:1520px;top:2px;width:113px;height:28px;text-align:center;font-size:20px;line-height:29px;color:#b4ea68;white-space:nowrap">4.71</div>
<div style="left:1634px;top:2px;width:113px;height:28px;text-align:center;font-size:20px;line-height:29px;color:#88b0f0;white-space:nowrap">1.69</div>
<div style="left:1748px;top:2px;width:113px;height:28px;text-align:center;font-size:20px;line-height:29px;color:#b4ea68;white-space:nowrap">33</div>
<div style="left:1862px;top:2px;width:113px;height:28px;text-align:center;font-size:20px;line-height:29px;color:#44d8f0;white-space:nowrap">10</div>
<div style="left:1976px;top:2px;width:113px;height:28px;text-align:center;font-size:20px;line-height:29px;color:#b4ea68;white-space:nowrap">2-09</div>
<div style="left:2090px;top:2px;width:113px;height:28px;text-align:center;font-size:20px;line-height:29px;color:#b4ea68;white-space:nowrap">9-08</div>
<div style="left:2204px;top:2px;width:113px;height:28px;text-align:center;font-size:20px;line-height:29px;color:#44e088;white-space:nowrap">4.27</div>
<div style="left:2318px;top:2px;width:113px;height:28px;text-align:center;font-size:20px;line-height:29px;color:#f0a868;white-space:nowrap">6.73</div>
<svg width="129.0" height="32.0" style="left:2433.70px;top:0.20px;overflow:visible"><text x="4" y="23.00" font-family="Liberation Sans, sans-serif" font-size="20" font-weight="normal" fill="#ececec" textLength="109.00" lengthAdjust="spacingAndGlyphs">Washington</text></svg>
<div style="left:0;top:30px;width:2846px;height:28px;background:#17181c"></div>
<div style="left:1178px;top:30px;width:113px;height:28px;background:#101011"></div>
<div style="left:1291px;top:30px;width:229px;height:28px;background:#0d161e"></div>
<div style="left:0;top:30px;width:13px;height:28px;background:linear-gradient(90deg,#e27236,#b85a2e)"></div>
<div style="left:381px;top:30px;width:113px;height:28px;background:linear-gradient(90deg,#e3723a 0%,#d26a36 30%,#a8562f 80%,#9e522c 100%)"></div>
<div style="left:494px;top:30px;width:113px;height:28px;background:linear-gradient(90deg,#e3723a 0%,#d26a36 30%,#a8562f 80%,#9e522c 100%)"></div>
<div style="left:379px;top:30px;width:2px;height:28px;background:#2a0e04"></div>
<div style="left:1294px;top:32px;width:72px;height:24px;background:linear-gradient(90deg,#e5763a 0%,#b88068 35%,#7c8c98 70%,#5a7c94 100%);color:#f4f4f4;font-size:20px;line-height:24px;text-align:center">r</div>
<div style="left:1370px;top:32px;width:72px;height:24px;background:linear-gradient(90deg,#5eb0dc 0%,#55a0cc 40%,#4a88b0 100%);color:#f4f4f4;font-size:20px;line-height:24px;text-align:center">i</div>
<div style="left:1446px;top:32px;width:72px;height:24px;background:linear-gradient(90deg,#72a04c 0%,#5e9068 50%,#4a8098 100%);color:#f4f4f4;font-size:20px;line-height:24px;text-align:center">c</div>
<svg width="181.9" height="32.0" style="left:14.60px;top:28.20px;overflow:visible"><text x="4" y="23.00" font-family="Liberation Sans, sans-serif" font-size="20" font-weight="normal" fill="#ececec" textLength="161.90" lengthAdjust="spacingAndGlyphs">Duncan Mendiola</text></svg>
<div style="left:381px;top:30px;width:112px;height:28px;text-align:center;font-size:20px;line-height:29px;color:#fcefe4;white-space:nowrap">QB</div>
<div style="left:495px;top:30px;width:112px;height:28px;text-align:center;font-size:20px;line-height:29px;color:#fcefe4;white-space:nowrap">QB</div>
<div style="left:608px;top:30px;width:151px;height:28px;text-align:center;font-size:20px;line-height:29px;color:#ececec;white-space:nowrap">6022</div>
<div style="left:760px;top:30px;width:151px;height:28px;text-align:center;font-size:20px;line-height:29px;color:#ececec;white-space:nowrap">9 3/8&quot;</div>
<div style="left:912px;top:30px;width:151px;height:28px;text-align:center;font-size:20px;line-height:29px;color:#ececec;white-space:nowrap">32 4/8&quot;</div>
<div style="left:1064px;top:30px;width:113px;height:28px;text-align:center;font-size:20px;line-height:29px;color:#ececec;white-space:nowrap">213</div>
<div style="left:1178px;top:30px;width:113px;height:28px;text-align:center;font-size:20px;line-height:29px;color:#ececec;white-space:nowrap">6.0</div>
<div style="left:1520px;top:30px;width:113px;height:28px;text-align:center;font-size:20px;line-height:29px;color:#44d8f0;white-space:nowrap">4.84</div>
<div style="left:1634px;top:30px;width:113px;height:28px;text-align:center;font-size:20px;line-height:29px;color:#48e4d8;white-space:nowrap">1.65</div>
<div style="left:1748px;top:30px;width:113px;height:28px;text-align:center;font-size:20px;line-height:29px;color:#b4ea68;white-space:nowrap">35</div>
<div style="left:1862px;top:30px;width:113px;height:28px;text-align:center;font-size:20px;line-height:29px;color:#a0a0f2;white-space:nowrap">8</div>
<div style="left:1976px;top:30px;width:113px;height:28px;text-align:center;font-size:20px;line-height:29px;color:#44e088;white-space:nowrap">2-08</div>
<div style="left:2090px;top:30px;width:113px;height:28px;text-align:center;font-size:20px;line-height:29px;color:#b4ea68;white-space:nowrap">9-08</div>
<div style="left:2204px;top:30px;width:113px;height:28px;text-align:center;font-size:20px;line-height:29px;color:#f06060;white-space:nowrap">3.95</div>
<div style="left:2318px;top:30px;width:113px;height:28px;text-align:center;font-size:20px;line-height:29px;color:#b4ea68;white-space:nowrap">7.03</div>
<svg width="193.0" height="32.0" style="left:2433.70px;top:28.20px;overflow:visible"><text x="4" y="23.00" font-family="Liberation Sans, sans-serif" font-size="20" font-weight="normal" fill="#ececec" textLength="173.00" lengthAdjust="spacingAndGlyphs">North Dakota State</text></svg>
<div style="left:0;top:58px;width:2846px;height:28px;background:#222329"></div>
<div style="left:1178px;top:58px;width:113px;height:28px;background:#1f1f22"></div>
<div style="left:1291px;top:58px;width:229px;height:28px;background:#0d161e"></div>
<div style="left:0;top:58px;width:13px;height:28px;background:linear-gradient(90deg,#e27236,#b85a2e)"></div>
<div style="left:381px;top:58px;width:113px;height:28px;background:linear-gradient(90deg,#e3723a 0%,#d26a36 30%,#a8562f 80%,#9e522c 100%)"></div>
<div style="left:494px;top:58px;width:113px;height:28px;background:linear-gradient(90deg,#e3723a 0%,#d26a36 30%,#a8562f 80%,#9e522c 100%)"></div>
<div style="left:379px;top:58px;width:2px;height:28px;background:#2a0e04"></div>
<div style="left:1294px;top:60px;width:72px;height:24px;background:linear-gradient(90deg,#e5763a 0%,#b88068 35%,#7c8c98 70%,#5a7c94 100%);color:#f4f4f4;font-size:20px;line-height:24px;text-align:center">r</div>
<div style="left:1370px;top:60px;width:72px;height:24px;background:linear-gradient(90deg,#5eb0dc 0%,#55a0cc 40%,#4a88b0 100%);color:#f4f4f4;font-size:20px;line-height:24px;text-align:center">i</div>
<div style="left:1446px;top:60px;width:72px;height:24px;background:linear-gradient(90deg,#72a04c 0%,#5e9068 50%,#4a8098 100%);color:#f4f4f4;font-size:20px;line-height:24px;text-align:center">c</div>
<svg width="169.3" height="32.0" style="left:14.60px;top:56.20px;overflow:visible"><text x="4" y="23.00" font-family="Liberation Sans, sans-serif" font-size="20" font-weight="normal" fill="#ececec" textLength="149.30" lengthAdjust="spacingAndGlyphs">Darrius Mathers</text></svg>
<div style="left:381px;top:58px;width:112px;height:28px;text-align:center;font-size:20px;line-height:29px;color:#fcefe4;white-space:nowrap">QB</div>
<div style="left:495px;top:58px;width:112px;height:28px;text-align:center;font-size:20px;line-height:29px;color:#fcefe4;white-space:nowrap">QB</div>
<div style="left:608px;top:58px;width:151px;height:28px;text-align:center;font-size:20px;line-height:29px;color:#ececec;white-space:nowrap">6020</div>
<div style="left:760px;top:58px;width:151px;height:28px;text-align:center;font-size:20px;line-height:29px;color:#ececec;white-space:nowrap">9 0/8&quot;</div>
<div style="left:912px;top:58px;width:151px;height:28px;text-align:center;font-size:20px;line-height:29px;color:#ececec;white-space:nowrap">30 7/8&quot;</div>
<div style="left:1064px;top:58px;width:113px;height:28px;text-align:center;font-size:20px;line-height:29px;color:#ececec;white-space:nowrap">221</div>
<div style="left:1178px;top:58px;width:113px;height:28px;text-align:center;font-size:20px;line-height:29px;color:#ececec;white-space:nowrap">5.9</div>
<div style="left:1520px;top:58px;width:113px;height:28px;text-align:center;font-size:20px;line-height:29px;color:#44d8f0;white-space:nowrap">4.84</div>
<div style="left:1634px;top:58px;width:113px;height:28px;text-align:center;font-size:20px;line-height:29px;color:#a0a0f2;white-space:nowrap">1.74</div>
<div style="left:1748px;top:58px;width:113px;height:28px;text-align:center;font-size:20px;line-height:29px;color:#b4ea68;white-space:nowrap">36</div>
<div style="left:1862px;top:58px;width:113px;height:28px;text-align:center;font-size:20px;line-height:29px;color:#a0a0f2;white-space:nowrap">9</div>
<div style="left:1976px;top:58px;width:113px;height:28px;text-align:center;font-size:20px;line-height:29px;color:#44d8f0;white-space:nowrap">2-06</div>
<div style="left:2090px;top:58px;width:113px;height:28px;text-align:center;font-size:20px;line-height:29px;color:#44e088;white-space:nowrap">9-04</div>
<div style="left:2204px;top:58px;width:113px;height:28px;text-align:center;font-size:20px;line-height:29px;color:#f0a868;white-space:nowrap">3.99</div>
<div style="left:2318px;top:58px;width:113px;height:28px;text-align:center;font-size:20px;line-height:29px;color:#b4ea68;white-space:nowrap">7.03</div>
<svg width="115.5" height="32.0" style="left:2433.70px;top:56.20px;overflow:visible"><text x="4" y="23.00" font-family="Liberation Sans, sans-serif" font-size="20" font-weight="normal" fill="#ececec" textLength="95.50" lengthAdjust="spacingAndGlyphs">Utah State</text></svg>
<div style="left:0;top:86px;width:2846px;height:28px;background:#17181c"></div>
<div style="left:1178px;top:86px;width:113px;height:28px;background:#101011"></div>
<div style="left:1291px;top:86px;width:229px;height:28px;background:#0d161e"></div>
<div style="left:0;top:86px;width:13px;height:28px;background:linear-gradient(90deg,#e27236,#b85a2e)"></div>
<div style="left:381px;top:86px;width:113px;height:28px;background:linear-gradient(90deg,#e3723a 0%,#d26a36 30%,#a8562f 80%,#9e522c 100%)"></div>
<div style="left:494px;top:86px;width:113px;height:28px;background:linear-gradient(90deg,#e3723a 0%,#d26a36 30%,#a8562f 80%,#9e522c 100%)"></div>
<div style="left:379px;top:86px;width:2px;height:28px;background:#2a0e04"></div>
<div style="left:1294px;top:88px;width:72px;height:24px;background:linear-gradient(90deg,#e5763a 0%,#b88068 35%,#7c8c98 70%,#5a7c94 100%);color:#f4f4f4;font-size:20px;line-height:24px;text-align:center">r</div>
<div style="left:1370px;top:88px;width:72px;height:24px;background:linear-gradient(90deg,#5eb0dc 0%,#55a0cc 40%,#4a88b0 100%);color:#f4f4f4;font-size:20px;line-height:24px;text-align:center">i</div>
<div style="left:1446px;top:88px;width:72px;height:24px;background:linear-gradient(90deg,#72a04c 0%,#5e9068 50%,#4a8098 100%);color:#f4f4f4;font-size:20px;line-height:24px;text-align:center">c</div>
<svg width="166.8" height="32.0" style="left:14.60px;top:84.20px;overflow:visible"><text x="4" y="23.00" font-family="Liberation Sans, sans-serif" font-size="20" font-weight="normal" fill="#ececec" textLength="146.80" lengthAdjust="spacingAndGlyphs">Desmond Casey</text></svg>
<div style="left:381px;top:86px;width:112px;height:28px;text-align:center;font-size:20px;line-height:29px;color:#fcefe4;white-space:nowrap">QB</div>
<div style="left:495px;top:86px;width:112px;height:28px;text-align:center;font-size:20px;line-height:29px;color:#fcefe4;white-space:nowrap">QB</div>
<div style="left:608px;top:86px;width:151px;height:28px;text-align:center;font-size:20px;line-height:29px;color:#ececec;white-space:nowrap">6006</div>
<div style="left:760px;top:86px;width:151px;height:28px;text-align:center;font-size:20px;line-height:29px;color:#ececec;white-space:nowrap">9 0/8&quot;</div>
<div style="left:912px;top:86px;width:151px;height:28px;text-align:center;font-size:20px;line-height:29px;color:#ececec;white-space:nowrap">31 3/8&quot;</div>
<div style="left:1064px;top:86px;width:113px;height:28px;text-align:center;font-size:20px;line-height:29px;color:#ececec;white-space:nowrap">210</div>
<div style="left:1178px;top:86px;width:113px;height:28px;text-align:center;font-size:20px;line-height:29px;color:#ececec;white-space:nowrap">5.9</div>
<div style="left:1520px;top:86px;width:113px;height:28px;text-align:center;font-size:20px;line-height:29px;color:#44d8f0;white-space:nowrap">4.80</div>
<div style="left:1634px;top:86px;width:113px;height:28px;text-align:center;font-size:20px;line-height:29px;color:#88b0f0;white-space:nowrap">1.70</div>
<div style="left:1748px;top:86px;width:113px;height:28px;text-align:center;font-size:20px;line-height:29px;color:#b4ea68;white-space:nowrap">35</div>
<div style="left:1862px;top:86px;width:113px;height:28px;text-align:center;font-size:20px;line-height:29px;color:#a0a0f2;white-space:nowrap">9</div>
<div style="left:1976px;top:86px;width:113px;height:28px;text-align:center;font-size:20px;line-height:29px;color:#b4ea68;white-space:nowrap">2-10</div>
<div style="left:2090px;top:86px;width:113px;height:28px;text-align:center;font-size:20px;line-height:29px;color:#44e088;white-space:nowrap">9-05</div>
<div style="left:2204px;top:86px;width:113px;height:28px;text-align:center;font-size:20px;line-height:29px;color:#44d8f0;white-space:nowrap">4.43</div>
<div style="left:2318px;top:86px;width:113px;height:28px;text-align:center;font-size:20px;line-height:29px;color:#44e088;white-space:nowrap">7.06</div>
<svg width="103.5" height="32.0" style="left:2433.70px;top:84.20px;overflow:visible"><text x="4" y="23.00" font-family="Liberation Sans, sans-serif" font-size="20" font-weight="normal" fill="#ececec" textLength="83.50" lengthAdjust="spacingAndGlyphs">Arkansas</text></svg>
<div style="left:0;top:114px;width:2846px;height:28px;background:#222329"></div>
<div style="left:1178px;top:114px;width:113px;height:28px;background:#1f1f22"></div>
<div style="left:1291px;top:114px;width:229px;height:28px;background:#0d161e"></div>
<div style="left:0;top:114px;width:13px;height:28px;background:linear-gradient(90deg,#e27236,#b85a2e)"></div>
<div style="left:381px;top:114px;width:113px;height:28px;background:linear-gradient(90deg,#e3723a 0%,#d26a36 30%,#a8562f 80%,#9e522c 100%)"></div>
<div style="left:494px;top:114px;width:113px;height:28px;background:linear-gradient(90deg,#e3723a 0%,#d26a36 30%,#a8562f 80%,#9e522c 100%)"></div>
<div style="left:379px;top:114px;width:2px;height:28px;background:#2a0e04"></div>
<div style="left:1294px;top:116px;width:72px;height:24px;background:linear-gradient(90deg,#e5763a 0%,#b88068 35%,#7c8c98 70%,#5a7c94 100%);color:#f4f4f4;font-size:20px;line-height:24px;text-align:center">r</div>
<div style="left:1370px;top:116px;width:72px;height:24px;background:linear-gradient(90deg,#5eb0dc 0%,#55a0cc 40%,#4a88b0 100%);color:#f4f4f4;font-size:20px;line-height:24px;text-align:center">i</div>
<div style="left:1446px;top:116px;width:72px;height:24px;background:linear-gradient(90deg,#72a04c 0%,#5e9068 50%,#4a8098 100%);color:#f4f4f4;font-size:20px;line-height:24px;text-align:center">c</div>
<svg width="135.4" height="32.0" style="left:14.60px;top:112.20px;overflow:visible"><text x="4" y="23.00" font-family="Liberation Sans, sans-serif" font-size="20" font-weight="normal" fill="#ececec" textLength="115.40" lengthAdjust="spacingAndGlyphs">Josh Rigsbee</text></svg>
<div style="left:381px;top:114px;width:112px;height:28px;text-align:center;font-size:20px;line-height:29px;color:#fcefe4;white-space:nowrap">QB</div>
<div style="left:495px;top:114px;width:112px;height:28px;text-align:center;font-size:20px;line-height:29px;color:#fcefe4;white-space:nowrap">QB</div>
<div style="left:608px;top:114px;width:151px;height:28px;text-align:center;font-size:20px;line-height:29px;color:#ececec;white-space:nowrap">6023</div>
<div style="left:760px;top:114px;width:151px;height:28px;text-align:center;font-size:20px;line-height:29px;color:#ececec;white-space:nowrap">9 4/8&quot;</div>
<div style="left:912px;top:114px;width:151px;height:28px;text-align:center;font-size:20px;line-height:29px;color:#ececec;white-space:nowrap">33 4/8&quot;</div>
<div style="left:1064px;top:114px;width:113px;height:28px;text-align:center;font-size:20px;line-height:29px;color:#ececec;white-space:nowrap">219</div>
<div style="left:1178px;top:114px;width:113px;height:28px;text-align:center;font-size:20px;line-height:29px;color:#ececec;white-space:nowrap">5.8</div>
<div style="left:1520px;top:114px;width:113px;height:28px;text-align:center;font-size:20px;line-height:29px;color:#44d8f0;white-space:nowrap">4.80</div>
<div style="left:1634px;top:114px;width:113px;height:28px;text-align:center;font-size:20px;line-height:29px;color:#88b0f0;white-space:nowrap">1.70</div>
<div style="left:1748px;top:114px;width:113px;height:28px;text-align:center;font-size:20px;line-height:29px;color:#a0a0f2;white-space:nowrap">20</div>
<div style="left:1862px;top:114px;width:113px;height:28px;text-align:center;font-size:20px;line-height:29px;color:#a0a0f2;white-space:nowrap">8</div>
<div style="left:1976px;top:114px;width:113px;height:28px;text-align:center;font-size:20px;line-height:29px;color:#b4ea68;white-space:nowrap">2-09</div>
<div style="left:2090px;top:114px;width:113px;height:28px;text-align:center;font-size:20px;line-height:29px;color:#b4ea68;white-space:nowrap">9-10</div>
<div style="left:2204px;top:114px;width:113px;height:28px;text-align:center;font-size:20px;line-height:29px;color:#44d8f0;white-space:nowrap">4.35</div>
<div style="left:2318px;top:114px;width:113px;height:28px;text-align:center;font-size:20px;line-height:29px;color:#e8e048;white-space:nowrap">6.86</div>
<svg width="65.3" height="32.0" style="left:2433.70px;top:112.20px;overflow:visible"><text x="4" y="23.00" font-family="Liberation Sans, sans-serif" font-size="20" font-weight="normal" fill="#ececec" textLength="45.30" lengthAdjust="spacingAndGlyphs">Iowa</text></svg>
<div style="left:0;top:142px;width:2846px;height:28px;background:#17181c"></div>
<div style="left:1178px;top:142px;width:113px;height:28px;background:#101011"></div>
<div style="left:1291px;top:142px;width:229px;height:28px;background:#0d161e"></div>
<div style="left:0;top:142px;width:13px;height:28px;background:linear-gradient(90deg,#e27236,#b85a2e)"></div>
<div style="left:381px;top:142px;width:113px;height:28px;background:linear-gradient(90deg,#e3723a 0%,#d26a36 30%,#a8562f 80%,#9e522c 100%)"></div>
<div style="left:494px;top:142px;width:113px;height:28px;background:linear-gradient(90deg,#e3723a 0%,#d26a36 30%,#a8562f 80%,#9e522c 100%)"></div>
<div style="left:379px;top:142px;width:2px;height:28px;background:#2a0e04"></div>
<div style="left:1294px;top:144px;width:72px;height:24px;background:linear-gradient(90deg,#e5763a 0%,#b88068 35%,#7c8c98 70%,#5a7c94 100%);color:#f4f4f4;font-size:20px;line-height:24px;text-align:center">r</div>
<div style="left:1370px;top:144px;width:72px;height:24px;background:linear-gradient(90deg,#5eb0dc 0%,#55a0cc 40%,#4a88b0 100%);color:#f4f4f4;font-size:20px;line-height:24px;text-align:center">i</div>
<div style="left:1446px;top:144px;width:72px;height:24px;background:linear-gradient(90deg,#72a04c 0%,#5e9068 50%,#4a8098 100%);color:#f4f4f4;font-size:20px;line-height:24px;text-align:center">c</div>
<svg width="183.7" height="32.0" style="left:14.60px;top:140.20px;overflow:visible"><text x="4" y="23.00" font-family="Liberation Sans, sans-serif" font-size="20" font-weight="normal" fill="#ececec" textLength="163.70" lengthAdjust="spacingAndGlyphs">Guillermo Skinner</text></svg>
<div style="left:381px;top:142px;width:112px;height:28px;text-align:center;font-size:20px;line-height:29px;color:#fcefe4;white-space:nowrap">QB</div>
<div style="left:495px;top:142px;width:112px;height:28px;text-align:center;font-size:20px;line-height:29px;color:#fcefe4;white-space:nowrap">QB</div>
<div style="left:608px;top:142px;width:151px;height:28px;text-align:center;font-size:20px;line-height:29px;color:#ececec;white-space:nowrap">6045</div>
<div style="left:760px;top:142px;width:151px;height:28px;text-align:center;font-size:20px;line-height:29px;color:#ececec;white-space:nowrap">10 0/8&quot;</div>
<div style="left:912px;top:142px;width:151px;height:28px;text-align:center;font-size:20px;line-height:29px;color:#ececec;white-space:nowrap">30 1/8&quot;</div>
<div style="left:1064px;top:142px;width:113px;height:28px;text-align:center;font-size:20px;line-height:29px;color:#ececec;white-space:nowrap">239</div>
<div style="left:1178px;top:142px;width:113px;height:28px;text-align:center;font-size:20px;line-height:29px;color:#ececec;white-space:nowrap">5.6</div>
<div style="left:1520px;top:142px;width:113px;height:28px;text-align:center;font-size:20px;line-height:29px;color:#44d8f0;white-space:nowrap">4.80</div>
<div style="left:1634px;top:142px;width:113px;height:28px;text-align:center;font-size:20px;line-height:29px;color:#88b0f0;white-space:nowrap">1.70</div>
<div style="left:1748px;top:142px;width:113px;height:28px;text-align:center;font-size:20px;line-height:29px;color:#44d8f0;white-space:nowrap">28</div>
<div style="left:1862px;top:142px;width:113px;height:28px;text-align:center;font-size:20px;line-height:29px;color:#44e088;white-space:nowrap">11</div>
<div style="left:1976px;top:142px;width:113px;height:28px;text-align:center;font-size:20px;line-height:29px;color:#44d8f0;white-space:nowrap">2-07</div>
<div style="left:2090px;top:142px;width:113px;height:28px;text-align:center;font-size:20px;line-height:29px;color:#44e088;white-space:nowrap">9-05</div>
<div style="left:2204px;top:142px;width:113px;height:28px;text-align:center;font-size:20px;line-height:29px;color:#44d8f0;white-space:nowrap">4.39</div>
<div style="left:2318px;top:142px;width:113px;height:28px;text-align:center;font-size:20px;line-height:29px;color:#44e088;white-space:nowrap">7.14</div>
<svg width="88.9" height="32.0" style="left:2433.70px;top:140.20px;overflow:visible"><text x="4" y="23.00" font-family="Liberation Sans, sans-serif" font-size="20" font-weight="normal" fill="#ececec" textLength="68.90" lengthAdjust="spacingAndGlyphs">Indiana</text></svg>
<div style="left:0;top:170px;width:2846px;height:28px;background:#222329"></div>
<div style="left:1178px;top:170px;width:113px;height:28px;background:#1f1f22"></div>
<div style="left:1291px;top:170px;width:229px;height:28px;background:#0d161e"></div>
<div style="left:0;top:170px;width:13px;height:28px;background:linear-gradient(90deg,#e27236,#b85a2e)"></div>
<div style="left:381px;top:170px;width:113px;height:28px;background:linear-gradient(90deg,#e3723a 0%,#d26a36 30%,#a8562f 80%,#9e522c 100%)"></div>
<div style="left:494px;top:170px;width:113px;height:28px;background:linear-gradient(90deg,#e3723a 0%,#d26a36 30%,#a8562f 80%,#9e522c 100%)"></div>
<div style="left:379px;top:170px;width:2px;height:28px;background:#2a0e04"></div>
<div style="left:1294px;top:172px;width:72px;height:24px;background:linear-gradient(90deg,#e5763a 0%,#b88068 35%,#7c8c98 70%,#5a7c94 100%);color:#f4f4f4;font-size:20px;line-height:24px;text-align:center">r</div>
<div style="left:1370px;top:172px;width:72px;height:24px;background:linear-gradient(90deg,#5eb0dc 0%,#55a0cc 40%,#4a88b0 100%);color:#f4f4f4;font-size:20px;line-height:24px;text-align:center">i</div>
<div style="left:1446px;top:172px;width:72px;height:24px;background:linear-gradient(90deg,#72a04c 0%,#5e9068 50%,#4a8098 100%);color:#f4f4f4;font-size:20px;line-height:24px;text-align:center">c</div>
<svg width="143.3" height="32.0" style="left:14.60px;top:168.20px;overflow:visible"><text x="4" y="23.00" font-family="Liberation Sans, sans-serif" font-size="20" font-weight="normal" fill="#ececec" textLength="123.30" lengthAdjust="spacingAndGlyphs">Adam Coston</text></svg>
<div style="left:381px;top:170px;width:112px;height:28px;text-align:center;font-size:20px;line-height:29px;color:#fcefe4;white-space:nowrap">QB</div>
<div style="left:495px;top:170px;width:112px;height:28px;text-align:center;font-size:20px;line-height:29px;color:#fcefe4;white-space:nowrap">QB</div>
<div style="left:608px;top:170px;width:151px;height:28px;text-align:center;font-size:20px;line-height:29px;color:#ececec;white-space:nowrap">6030</div>
<div style="left:760px;top:170px;width:151px;height:28px;text-align:center;font-size:20px;line-height:29px;color:#ececec;white-space:nowrap">9 2/8&quot;</div>
<div style="left:912px;top:170px;width:151px;height:28px;text-align:center;font-size:20px;line-height:29px;color:#ececec;white-space:nowrap">31 7/8&quot;</div>
<div style="left:1064px;top:170px;width:113px;height:28px;text-align:center;font-size:20px;line-height:29px;color:#ececec;white-space:nowrap">218</div>
<div style="left:1178px;top:170px;width:113px;height:28px;text-align:center;font-size:20px;line-height:29px;color:#ececec;white-space:nowrap">5.5</div>
<div style="left:1520px;top:170px;width:113px;height:28px;text-align:center;font-size:20px;line-height:29px;color:#44d8f0;white-space:nowrap">4.80</div>
<div style="left:1634px;top:170px;width:113px;height:28px;text-align:center;font-size:20px;line-height:29px;color:#88b0f0;white-space:nowrap">1.70</div>
<div style="left:1748px;top:170px;width:113px;height:28px;text-align:center;font-size:20px;line-height:29px;color:#b4ea68;white-space:nowrap">33</div>
<div style="left:1862px;top:170px;width:113px;height:28px;text-align:center;font-size:20px;line-height:29px;color:#44d8f0;white-space:nowrap">10</div>
<div style="left:1976px;top:170px;width:113px;height:28px;text-align:center;font-size:20px;line-height:29px;color:#e8e048;white-space:nowrap">2-11</div>
<div style="left:2090px;top:170px;width:113px;height:28px;text-align:center;font-size:20px;line-height:29px;color:#44d8f0;white-space:nowrap">9-03</div>
<div style="left:2204px;top:170px;width:113px;height:28px;text-align:center;font-size:20px;line-height:29px;color:#44d8f0;white-space:nowrap">4.35</div>
<div style="left:2318px;top:170px;width:113px;height:28px;text-align:center;font-size:20px;line-height:29px;color:#44d8f0;white-space:nowrap">7.17</div>
<svg width="104.6" height="32.0" style="left:2433.70px;top:168.20px;overflow:visible"><text x="4" y="23.00" font-family="Liberation Sans, sans-serif" font-size="20" font-weight="normal" fill="#ececec" textLength="84.60" lengthAdjust="spacingAndGlyphs">Colorado</text></svg>
<div style="left:0;top:198px;width:2846px;height:28px;background:#17181c"></div>
<div style="left:1178px;top:198px;width:113px;height:28px;background:#101011"></div>
<div style="left:1291px;top:198px;width:229px;height:28px;background:#0d161e"></div>
<div style="left:0;top:198px;width:13px;height:28px;background:linear-gradient(90deg,#e27236,#b85a2e)"></div>
<div style="left:381px;top:198px;width:113px;height:28px;background:linear-gradient(90deg,#e3723a 0%,#d26a36 30%,#a8562f 80%,#9e522c 100%)"></div>
<div style="left:494px;top:198px;width:113px;height:28px;background:linear-gradient(90deg,#e3723a 0%,#d26a36 30%,#a8562f 80%,#9e522c 100%)"></div>
<div style="left:379px;top:198px;width:2px;height:28px;background:#2a0e04"></div>
<div style="left:1294px;top:200px;width:72px;height:24px;background:linear-gradient(90deg,#e5763a 0%,#b88068 35%,#7c8c98 70%,#5a7c94 100%);color:#f4f4f4;font-size:20px;line-height:24px;text-align:center">r</div>
<div style="left:1370px;top:200px;width:72px;height:24px;background:linear-gradient(90deg,#5eb0dc 0%,#55a0cc 40%,#4a88b0 100%);color:#f4f4f4;font-size:20px;line-height:24px;text-align:center">i</div>
<div style="left:1446px;top:200px;width:72px;height:24px;background:linear-gradient(90deg,#72a04c 0%,#5e9068 50%,#4a8098 100%);color:#f4f4f4;font-size:20px;line-height:24px;text-align:center">c</div>
<svg width="167.8" height="32.0" style="left:14.60px;top:196.20px;overflow:visible"><text x="4" y="23.00" font-family="Liberation Sans, sans-serif" font-size="20" font-weight="normal" fill="#ececec" textLength="147.80" lengthAdjust="spacingAndGlyphs">Emmett Hodson</text></svg>
<div style="left:381px;top:198px;width:112px;height:28px;text-align:center;font-size:20px;line-height:29px;color:#fcefe4;white-space:nowrap">QB</div>
<div style="left:495px;top:198px;width:112px;height:28px;text-align:center;font-size:20px;line-height:29px;color:#fcefe4;white-space:nowrap">QB</div>
<div style="left:608px;top:198px;width:151px;height:28px;text-align:center;font-size:20px;line-height:29px;color:#ececec;white-space:nowrap">6034</div>
<div style="left:760px;top:198px;width:151px;height:28px;text-align:center;font-size:20px;line-height:29px;color:#ececec;white-space:nowrap">9 2/8&quot;</div>
<div style="left:912px;top:198px;width:151px;height:28px;text-align:center;font-size:20px;line-height:29px;color:#ececec;white-space:nowrap">31 4/8&quot;</div>
<div style="left:1064px;top:198px;width:113px;height:28px;text-align:center;font-size:20px;line-height:29px;color:#ececec;white-space:nowrap">224</div>
<div style="left:1178px;top:198px;width:113px;height:28px;text-align:center;font-size:20px;line-height:29px;color:#ececec;white-space:nowrap">5.3</div>
<div style="left:1520px;top:198px;width:113px;height:28px;text-align:center;font-size:20px;line-height:29px;color:#44d8f0;white-space:nowrap">4.80</div>
<div style="left:1634px;top:198px;width:113px;height:28px;text-align:center;font-size:20px;line-height:29px;color:#88b0f0;white-space:nowrap">1.70</div>
<div style="left:1748px;top:198px;width:113px;height:28px;text-align:center;font-size:20px;line-height:29px;color:#b4ea68;white-space:nowrap">35</div>
<div style="left:1862px;top:198px;width:113px;height:28px;text-align:center;font-size:20px;line-height:29px;color:#c8a8f0;white-space:nowrap">7</div>
<div style="left:1976px;top:198px;width:113px;height:28px;text-align:center;font-size:20px;line-height:29px;color:#44e088;white-space:nowrap">2-08</div>
<div style="left:2090px;top:198px;width:113px;height:28px;text-align:center;font-size:20px;line-height:29px;color:#44e088;white-space:nowrap">9-06</div>
<div style="left:2204px;top:198px;width:113px;height:28px;text-align:center;font-size:20px;line-height:29px;color:#44e088;white-space:nowrap">4.28</div>
<div style="left:2318px;top:198px;width:113px;height:28px;text-align:center;font-size:20px;line-height:29px;color:#44d8f0;white-space:nowrap">7.26</div>
<svg width="147.2" height="32.0" style="left:2433.70px;top:196.20px;overflow:visible"><text x="4" y="23.00" font-family="Liberation Sans, sans-serif" font-size="20" font-weight="normal" fill="#ececec" textLength="127.20" lengthAdjust="spacingAndGlyphs">Northwestern</text></svg>
<div style="left:0;top:226px;width:2846px;height:28px;background:#222329"></div>
<div style="left:1178px;top:226px;width:113px;height:28px;background:#1f1f22"></div>
<div style="left:1291px;top:226px;width:229px;height:28px;background:#0d161e"></div>
<div style="left:0;top:226px;width:13px;height:28px;background:linear-gradient(90deg,#e27236,#b85a2e)"></div>
<div style="left:381px;top:226px;width:113px;height:28px;background:linear-gradient(90deg,#e3723a 0%,#d26a36 30%,#a8562f 80%,#9e522c 100%)"></div>
<div style="left:494px;top:226px;width:113px;height:28px;background:linear-gradient(90deg,#e3723a 0%,#d26a36 30%,#a8562f 80%,#9e522c 100%)"></div>
<div style="left:379px;top:226px;width:2px;height:28px;background:#2a0e04"></div>
<div style="left:1294px;top:228px;width:72px;height:24px;background:linear-gradient(90deg,#e5763a 0%,#b88068 35%,#7c8c98 70%,#5a7c94 100%);color:#f4f4f4;font-size:20px;line-height:24px;text-align:center">r</div>
<div style="left:1370px;top:228px;width:72px;height:24px;background:linear-gradient(90deg,#5eb0dc 0%,#55a0cc 40%,#4a88b0 100%);color:#f4f4f4;font-size:20px;line-height:24px;text-align:center">i</div>
<div style="left:1446px;top:228px;width:72px;height:24px;background:linear-gradient(90deg,#72a04c 0%,#5e9068 50%,#4a8098 100%);color:#f4f4f4;font-size:20px;line-height:24px;text-align:center">c</div>
<svg width="86.7" height="32.0" style="left:14.60px;top:224.20px;overflow:visible"><text x="4" y="23.00" font-family="Liberation Sans, sans-serif" font-size="20" font-weight="normal" fill="#ececec" textLength="66.70" lengthAdjust="spacingAndGlyphs">A.J. Hill</text></svg>
<div style="left:381px;top:226px;width:112px;height:28px;text-align:center;font-size:20px;line-height:29px;color:#fcefe4;white-space:nowrap">QB</div>
<div style="left:495px;top:226px;width:112px;height:28px;text-align:center;font-size:20px;line-height:29px;color:#fcefe4;white-space:nowrap">QB</div>
<div style="left:608px;top:226px;width:151px;height:28px;text-align:center;font-size:20px;line-height:29px;color:#ececec;white-space:nowrap">6031</div>
<div style="left:760px;top:226px;width:151px;height:28px;text-align:center;font-size:20px;line-height:29px;color:#ececec;white-space:nowrap">9 4/8&quot;</div>
<div style="left:912px;top:226px;width:151px;height:28px;text-align:center;font-size:20px;line-height:29px;color:#ececec;white-space:nowrap">31 0/8&quot;</div>
<div style="left:1064px;top:226px;width:113px;height:28px;text-align:center;font-size:20px;line-height:29px;color:#ececec;white-space:nowrap">228</div>
<div style="left:1178px;top:226px;width:113px;height:28px;text-align:center;font-size:20px;line-height:29px;color:#ececec;white-space:nowrap">5.0</div>
<div style="left:1520px;top:226px;width:113px;height:28px;text-align:center;font-size:20px;line-height:29px;color:#44d8f0;white-space:nowrap">4.80</div>
<div style="left:1634px;top:226px;width:113px;height:28px;text-align:center;font-size:20px;line-height:29px;color:#88b0f0;white-space:nowrap">1.70</div>
<div style="left:1748px;top:226px;width:113px;height:28px;text-align:center;font-size:20px;line-height:29px;color:#a0a0f2;white-space:nowrap">20</div>
<div style="left:1862px;top:226px;width:113px;height:28px;text-align:center;font-size:20px;line-height:29px;color:#44e088;white-space:nowrap">11</div>
<div style="left:1976px;top:226px;width:113px;height:28px;text-align:center;font-size:20px;line-height:29px;color:#88b0f0;white-space:nowrap">2-05</div>
<div style="left:2090px;top:226px;width:113px;height:28px;text-align:center;font-size:20px;line-height:29px;color:#44e088;white-space:nowrap">9-06</div>
<div style="left:2204px;top:226px;width:113px;height:28px;text-align:center;font-size:20px;line-height:29px;color:#44e088;white-space:nowrap">4.27</div>
<div style="left:2318px;top:226px;width:113px;height:28px;text-align:center;font-size:20px;line-height:29px;color:#44e088;white-space:nowrap">7.06</div>
<svg width="134.4" height="32.0" style="left:2433.70px;top:224.20px;overflow:visible"><text x="4" y="23.00" font-family="Liberation Sans, sans-serif" font-size="20" font-weight="normal" fill="#ececec" textLength="114.40" lengthAdjust="spacingAndGlyphs">Florida State</text></svg>
<div style="left:0;top:254px;width:2846px;height:28px;background:#17181c"></div>
<div style="left:1178px;top:254px;width:113px;height:28px;background:#101011"></div>
<div style="left:1291px;top:254px;width:229px;height:28px;background:#0d161e"></div>
<div style="left:0;top:254px;width:13px;height:28px;background:linear-gradient(90deg,#e27236,#b85a2e)"></div>
<div style="left:381px;top:254px;width:113px;height:28px;background:linear-gradient(90deg,#e3723a 0%,#d26a36 30%,#a8562f 80%,#9e522c 100%)"></div>
<div style="left:494px;top:254px;width:113px;height:28px;background:linear-gradient(90deg,#e3723a 0%,#d26a36 30%,#a8562f 80%,#9e522c 100%)"></div>
<div style="left:379px;top:254px;width:2px;height:28px;background:#2a0e04"></div>
<div style="left:1294px;top:256px;width:72px;height:24px;background:linear-gradient(90deg,#e5763a 0%,#b88068 35%,#7c8c98 70%,#5a7c94 100%);color:#f4f4f4;font-size:20px;line-height:24px;text-align:center">r</div>
<div style="left:1370px;top:256px;width:72px;height:24px;background:linear-gradient(90deg,#5eb0dc 0%,#55a0cc 40%,#4a88b0 100%);color:#f4f4f4;font-size:20px;line-height:24px;text-align:center">i</div>
<div style="left:1446px;top:256px;width:72px;height:24px;background:linear-gradient(90deg,#72a04c 0%,#5e9068 50%,#4a8098 100%);color:#f4f4f4;font-size:20px;line-height:24px;text-align:center">c</div>
<svg width="170.4" height="32.0" style="left:14.60px;top:252.20px;overflow:visible"><text x="4" y="23.00" font-family="Liberation Sans, sans-serif" font-size="20" font-weight="normal" fill="#ececec" textLength="150.40" lengthAdjust="spacingAndGlyphs">Assassin DeWalt</text></svg>
<div style="left:381px;top:254px;width:112px;height:28px;text-align:center;font-size:20px;line-height:29px;color:#fcefe4;white-space:nowrap">QB</div>
<div style="left:495px;top:254px;width:112px;height:28px;text-align:center;font-size:20px;line-height:29px;color:#fcefe4;white-space:nowrap">QB</div>
<div style="left:608px;top:254px;width:151px;height:28px;text-align:center;font-size:20px;line-height:29px;color:#ececec;white-space:nowrap">6026</div>
<div style="left:760px;top:254px;width:151px;height:28px;text-align:center;font-size:20px;line-height:29px;color:#ececec;white-space:nowrap">9 5/8&quot;</div>
<div style="left:912px;top:254px;width:151px;height:28px;text-align:center;font-size:20px;line-height:29px;color:#ececec;white-space:nowrap">33 2/8&quot;</div>
<div style="left:1064px;top:254px;width:113px;height:28px;text-align:center;font-size:20px;line-height:29px;color:#ececec;white-space:nowrap">211</div>
<div style="left:1178px;top:254px;width:113px;height:28px;text-align:center;font-size:20px;line-height:29px;color:#ececec;white-space:nowrap">4.8</div>
<div style="left:1520px;top:254px;width:113px;height:28px;text-align:center;font-size:20px;line-height:29px;color:#44d8f0;white-space:nowrap">4.80</div>
<div style="left:1634px;top:254px;width:113px;height:28px;text-align:center;font-size:20px;line-height:29px;color:#88b0f0;white-space:nowrap">1.70</div>
<div style="left:1748px;top:254px;width:113px;height:28px;text-align:center;font-size:20px;line-height:29px;color:#44e088;white-space:nowrap">30</div>
<div style="left:1862px;top:254px;width:113px;height:28px;text-align:center;font-size:20px;line-height:29px;color:#e8e8e8;white-space:nowrap">6</div>
<div style="left:1976px;top:254px;width:113px;height:28px;text-align:center;font-size:20px;line-height:29px;color:#b4ea68;white-space:nowrap">2-10</div>
<div style="left:2090px;top:254px;width:113px;height:28px;text-align:center;font-size:20px;line-height:29px;color:#f0a868;white-space:nowrap">10-07</div>
<div style="left:2204px;top:254px;width:113px;height:28px;text-align:center;font-size:20px;line-height:29px;color:#88b0f0;white-space:nowrap">4.47</div>
<div style="left:2318px;top:254px;width:113px;height:28px;text-align:center;font-size:20px;line-height:29px;color:#b4ea68;white-space:nowrap">6.95</div>
<svg width="88.2" height="32.0" style="left:2433.70px;top:252.20px;overflow:visible"><text x="4" y="23.00" font-family="Liberation Sans, sans-serif" font-size="20" font-weight="normal" fill="#ececec" textLength="68.20" lengthAdjust="spacingAndGlyphs">Oregon</text></svg>
<div style="left:0;top:282px;width:2846px;height:28px;background:#222329"></div>
<div style="left:1178px;top:282px;width:113px;height:28px;background:#1f1f22"></div>
<div style="left:1291px;top:282px;width:229px;height:28px;background:#0d161e"></div>
<div style="left:0;top:282px;width:13px;height:28px;background:linear-gradient(90deg,#e27236,#b85a2e)"></div>
<div style="left:381px;top:282px;width:113px;height:28px;background:linear-gradient(90deg,#e3723a 0%,#d26a36 30%,#a8562f 80%,#9e522c 100%)"></div>
<div style="left:494px;top:282px;width:113px;height:28px;background:linear-gradient(90deg,#e3723a 0%,#d26a36 30%,#a8562f 80%,#9e522c 100%)"></div>
<div style="left:379px;top:282px;width:2px;height:28px;background:#2a0e04"></div>
<div style="left:1294px;top:284px;width:72px;height:24px;background:linear-gradient(90deg,#e5763a 0%,#b88068 35%,#7c8c98 70%,#5a7c94 100%);color:#f4f4f4;font-size:20px;line-height:24px;text-align:center">r</div>
<div style="left:1370px;top:284px;width:72px;height:24px;background:linear-gradient(90deg,#5eb0dc 0%,#55a0cc 40%,#4a88b0 100%);color:#f4f4f4;font-size:20px;line-height:24px;text-align:center">i</div>
<div style="left:1446px;top:284px;width:72px;height:24px;background:linear-gradient(90deg,#72a04c 0%,#5e9068 50%,#4a8098 100%);color:#f4f4f4;font-size:20px;line-height:24px;text-align:center">c</div>
<svg width="131.4" height="32.0" style="left:14.60px;top:280.20px;overflow:visible"><text x="4" y="23.00" font-family="Liberation Sans, sans-serif" font-size="20" font-weight="normal" fill="#ececec" textLength="111.40" lengthAdjust="spacingAndGlyphs">Nolan Diallo</text></svg>
<div style="left:381px;top:282px;width:112px;height:28px;text-align:center;font-size:20px;line-height:29px;color:#fcefe4;white-space:nowrap">QB</div>
<div style="left:495px;top:282px;width:112px;height:28px;text-align:center;font-size:20px;line-height:29px;color:#fcefe4;white-space:nowrap">QB</div>
<div style="left:608px;top:282px;width:151px;height:28px;text-align:center;font-size:20px;line-height:29px;color:#ececec;white-space:nowrap">6022</div>
<div style="left:760px;top:282px;width:151px;height:28px;text-align:center;font-size:20px;line-height:29px;color:#ececec;white-space:nowrap">9 6/8&quot;</div>
<div style="left:912px;top:282px;width:151px;height:28px;text-align:center;font-size:20px;line-height:29px;color:#ececec;white-space:nowrap">32 1/8&quot;</div>
<div style="left:1064px;top:282px;width:113px;height:28px;text-align:center;font-size:20px;line-height:29px;color:#ececec;white-space:nowrap">224</div>
<div style="left:1178px;top:282px;width:113px;height:28px;text-align:center;font-size:20px;line-height:29px;color:#ececec;white-space:nowrap">4.6</div>
<div style="left:1520px;top:282px;width:113px;height:28px;text-align:center;font-size:20px;line-height:29px;color:#44d8f0;white-space:nowrap">4.80</div>
<div style="left:1634px;top:282px;width:113px;height:28px;text-align:center;font-size:20px;line-height:29px;color:#88b0f0;white-space:nowrap">1.70</div>
<div style="left:1748px;top:282px;width:113px;height:28px;text-align:center;font-size:20px;line-height:29px;color:#44e088;white-space:nowrap">31</div>
<div style="left:1862px;top:282px;width:113px;height:28px;text-align:center;font-size:20px;line-height:29px;color:#c8a8f0;white-space:nowrap">7</div>
<div style="left:1976px;top:282px;width:113px;height:28px;text-align:center;font-size:20px;line-height:29px;color:#44d8f0;white-space:nowrap">2-07</div>
<div style="left:2090px;top:282px;width:113px;height:28px;text-align:center;font-size:20px;line-height:29px;color:#88b0f0;white-space:nowrap">8-11</div>
<div style="left:2204px;top:282px;width:113px;height:28px;text-align:center;font-size:20px;line-height:29px;color:#b4ea68;white-space:nowrap">4.23</div>
<div style="left:2318px;top:282px;width:113px;height:28px;text-align:center;font-size:20px;line-height:29px;color:#b4ea68;white-space:nowrap">6.98</div>
<svg width="134.4" height="32.0" style="left:2433.70px;top:280.20px;overflow:visible"><text x="4" y="23.00" font-family="Liberation Sans, sans-serif" font-size="20" font-weight="normal" fill="#ececec" textLength="114.40" lengthAdjust="spacingAndGlyphs">Kansas State</text></svg>
<div style="left:0;top:310px;width:2846px;height:28px;background:linear-gradient(90deg,#383a4a,#3f4152 50%,#3b3d4b)"></div>
<div style="left:1178px;top:310px;width:113px;height:28px;background:#101011"></div>
<div style="left:1291px;top:310px;width:229px;height:28px;background:#0d161e"></div>
<div style="left:0;top:310px;width:13px;height:28px;background:linear-gradient(90deg,#e27236,#b85a2e)"></div>
<div style="left:381px;top:310px;width:113px;height:28px;background:linear-gradient(90deg,#e3723a 0%,#d26a36 30%,#a8562f 80%,#9e522c 100%)"></div>
<div style="left:494px;top:310px;width:113px;height:28px;background:linear-gradient(90deg,#e3723a 0%,#d26a36 30%,#a8562f 80%,#9e522c 100%)"></div>
<div style="left:379px;top:310px;width:2px;height:28px;background:#2a0e04"></div>
<div style="left:1294px;top:312px;width:72px;height:24px;background:linear-gradient(90deg,#e5763a 0%,#b88068 35%,#7c8c98 70%,#5a7c94 100%);color:#f4f4f4;font-size:20px;line-height:24px;text-align:center">r</div>
<div style="left:1370px;top:312px;width:72px;height:24px;background:linear-gradient(90deg,#5eb0dc 0%,#55a0cc 40%,#4a88b0 100%);color:#f4f4f4;font-size:20px;line-height:24px;text-align:center">i</div>
<div style="left:1446px;top:312px;width:72px;height:24px;background:linear-gradient(90deg,#72a04c 0%,#5e9068 50%,#4a8098 100%);color:#f4f4f4;font-size:20px;line-height:24px;text-align:center">c</div>
<svg width="172.2" height="32.0" style="left:14.60px;top:308.20px;overflow:visible"><text x="4" y="23.00" font-family="Liberation Sans, sans-serif" font-size="20" font-weight="normal" fill="#ececec" textLength="152.20" lengthAdjust="spacingAndGlyphs">Solomon Dotson</text></svg>
<div style="left:381px;top:310px;width:112px;height:28px;text-align:center;font-size:20px;line-height:29px;color:#fcefe4;white-space:nowrap">QB</div>
<div style="left:495px;top:310px;width:112px;height:28px;text-align:center;font-size:20px;line-height:29px;color:#fcefe4;white-space:nowrap">QB</div>
<div style="left:608px;top:310px;width:151px;height:28px;text-align:center;font-size:20px;line-height:29px;color:#ececec;white-space:nowrap">5102</div>
<div style="left:760px;top:310px;width:151px;height:28px;text-align:center;font-size:20px;line-height:29px;color:#ececec;white-space:nowrap">10 1/8&quot;</div>
<div style="left:912px;top:310px;width:151px;height:28px;text-align:center;font-size:20px;line-height:29px;color:#ececec;white-space:nowrap">31 2/8&quot;</div>
<div style="left:1064px;top:310px;width:113px;height:28px;text-align:center;font-size:20px;line-height:29px;color:#ececec;white-space:nowrap">207</div>
<div style="left:1178px;top:310px;width:113px;height:28px;text-align:center;font-size:20px;line-height:29px;color:#ececec;white-space:nowrap">4.5</div>
<div style="left:1520px;top:310px;width:113px;height:28px;text-align:center;font-size:20px;line-height:29px;color:#44d8f0;white-space:nowrap">4.72</div>
<div style="left:1634px;top:310px;width:113px;height:28px;text-align:center;font-size:20px;line-height:29px;color:#88b0f0;white-space:nowrap">1.69</div>
<div style="left:1748px;top:310px;width:113px;height:28px;text-align:center;font-size:20px;line-height:29px;color:#e8e048;white-space:nowrap">41</div>
<div style="left:1862px;top:310px;width:113px;height:28px;text-align:center;font-size:20px;line-height:29px;color:#a0a0f2;white-space:nowrap">8</div>
<div style="left:1976px;top:310px;width:113px;height:28px;text-align:center;font-size:20px;line-height:29px;color:#a0a0f2;white-space:nowrap">2-03</div>
<div style="left:2090px;top:310px;width:113px;height:28px;text-align:center;font-size:20px;line-height:29px;color:#b4ea68;white-space:nowrap">9-09</div>
<div style="left:2204px;top:310px;width:113px;height:28px;text-align:center;font-size:20px;line-height:29px;color:#44e088;white-space:nowrap">4.29</div>
<div style="left:2318px;top:310px;width:113px;height:28px;text-align:center;font-size:20px;line-height:29px;color:#c8a8f0;white-space:nowrap">7.65</div>
<svg width="134.4" height="32.0" style="left:2433.70px;top:308.20px;overflow:visible"><text x="4" y="23.00" font-family="Liberation Sans, sans-serif" font-size="20" font-weight="normal" fill="#ececec" textLength="114.40" lengthAdjust="spacingAndGlyphs">Florida State</text></svg>
<div style="left:0;top:310px;width:2846px;height:28px;border:1px dotted #e0c4f0;"></div>
<div style="left:0;top:338px;width:2846px;height:28px;background:#222329"></div>
<div style="left:1178px;top:338px;width:113px;height:28px;background:#1f1f22"></div>
<div style="left:1291px;top:338px;width:229px;height:28px;background:#0d161e"></div>
<div style="left:0;top:338px;width:13px;height:28px;background:linear-gradient(90deg,#e27236,#b85a2e)"></div>
<div style="left:381px;top:338px;width:113px;height:28px;background:linear-gradient(90deg,#e3723a 0%,#d26a36 30%,#a8562f 80%,#9e522c 100%)"></div>
<div style="left:494px;top:338px;width:113px;height:28px;background:linear-gradient(90deg,#e3723a 0%,#d26a36 30%,#a8562f 80%,#9e522c 100%)"></div>
<div style="left:379px;top:338px;width:2px;height:28px;background:#2a0e04"></div>
<div style="left:1294px;top:340px;width:72px;height:24px;background:linear-gradient(90deg,#e5763a 0%,#b88068 35%,#7c8c98 70%,#5a7c94 100%);color:#f4f4f4;font-size:20px;line-height:24px;text-align:center">r</div>
<div style="left:1370px;top:340px;width:72px;height:24px;background:linear-gradient(90deg,#5eb0dc 0%,#55a0cc 40%,#4a88b0 100%);color:#f4f4f4;font-size:20px;line-height:24px;text-align:center">i</div>
<div style="left:1446px;top:340px;width:72px;height:24px;background:linear-gradient(90deg,#72a04c 0%,#5e9068 50%,#4a8098 100%);color:#f4f4f4;font-size:20px;line-height:24px;text-align:center">c</div>
<svg width="148.0" height="32.0" style="left:14.60px;top:336.20px;overflow:visible"><text x="4" y="23.00" font-family="Liberation Sans, sans-serif" font-size="20" font-weight="normal" fill="#ececec" textLength="128.00" lengthAdjust="spacingAndGlyphs">Zachery Serna</text></svg>
<div style="left:381px;top:338px;width:112px;height:28px;text-align:center;font-size:20px;line-height:29px;color:#fcefe4;white-space:nowrap">QB</div>
<div style="left:495px;top:338px;width:112px;height:28px;text-align:center;font-size:20px;line-height:29px;color:#fcefe4;white-space:nowrap">QB</div>
<div style="left:608px;top:338px;width:151px;height:28px;text-align:center;font-size:20px;line-height:29px;color:#ececec;white-space:nowrap">6026</div>
<div style="left:760px;top:338px;width:151px;height:28px;text-align:center;font-size:20px;line-height:29px;color:#ececec;white-space:nowrap">9 2/8&quot;</div>
<div style="left:912px;top:338px;width:151px;height:28px;text-align:center;font-size:20px;line-height:29px;color:#ececec;white-space:nowrap">31 2/8&quot;</div>
<div style="left:1064px;top:338px;width:113px;height:28px;text-align:center;font-size:20px;line-height:29px;color:#ececec;white-space:nowrap">213</div>
<div style="left:1178px;top:338px;width:113px;height:28px;text-align:center;font-size:20px;line-height:29px;color:#ececec;white-space:nowrap">4.4</div>
<div style="left:1520px;top:338px;width:113px;height:28px;text-align:center;font-size:20px;line-height:29px;color:#44d8f0;white-space:nowrap">4.80</div>
<div style="left:1634px;top:338px;width:113px;height:28px;text-align:center;font-size:20px;line-height:29px;color:#88b0f0;white-space:nowrap">1.70</div>
<div style="left:1748px;top:338px;width:113px;height:28px;text-align:center;font-size:20px;line-height:29px;color:#b4ea68;white-space:nowrap">36</div>
<div style="left:1862px;top:338px;width:113px;height:28px;text-align:center;font-size:20px;line-height:29px;color:#c8a8f0;white-space:nowrap">7</div>
<div style="left:1976px;top:338px;width:113px;height:28px;text-align:center;font-size:20px;line-height:29px;color:#b4ea68;white-space:nowrap">2-09</div>
<div style="left:2090px;top:338px;width:113px;height:28px;text-align:center;font-size:20px;line-height:29px;color:#a0a0f2;white-space:nowrap">8-07</div>
<div style="left:2204px;top:338px;width:113px;height:28px;text-align:center;font-size:20px;line-height:29px;color:#b4ea68;white-space:nowrap">4.24</div>
<div style="left:2318px;top:338px;width:113px;height:28px;text-align:center;font-size:20px;line-height:29px;color:#44e088;white-space:nowrap">7.16</div>
<svg width="112.6" height="32.0" style="left:2433.70px;top:336.20px;overflow:visible"><text x="4" y="23.00" font-family="Liberation Sans, sans-serif" font-size="20" font-weight="normal" fill="#ececec" textLength="92.60" lengthAdjust="spacingAndGlyphs">Kent State</text></svg>
<div style="left:0;top:366px;width:2846px;height:28px;background:#17181c"></div>
<div style="left:1178px;top:366px;width:113px;height:28px;background:#101011"></div>
<div style="left:1291px;top:366px;width:229px;height:28px;background:#0d161e"></div>
<div style="left:0;top:366px;width:13px;height:28px;background:linear-gradient(90deg,#e27236,#b85a2e)"></div>
<div style="left:381px;top:366px;width:113px;height:28px;background:linear-gradient(90deg,#e3723a 0%,#d26a36 30%,#a8562f 80%,#9e522c 100%)"></div>
<div style="left:494px;top:366px;width:113px;height:28px;background:linear-gradient(90deg,#e3723a 0%,#d26a36 30%,#a8562f 80%,#9e522c 100%)"></div>
<div style="left:379px;top:366px;width:2px;height:28px;background:#2a0e04"></div>
<div style="left:1294px;top:368px;width:72px;height:24px;background:linear-gradient(90deg,#e5763a 0%,#b88068 35%,#7c8c98 70%,#5a7c94 100%);color:#f4f4f4;font-size:20px;line-height:24px;text-align:center">r</div>
<div style="left:1370px;top:368px;width:72px;height:24px;background:linear-gradient(90deg,#5eb0dc 0%,#55a0cc 40%,#4a88b0 100%);color:#f4f4f4;font-size:20px;line-height:24px;text-align:center">i</div>
<div style="left:1446px;top:368px;width:72px;height:24px;background:linear-gradient(90deg,#72a04c 0%,#5e9068 50%,#4a8098 100%);color:#f4f4f4;font-size:20px;line-height:24px;text-align:center">c</div>
<svg width="124.2" height="32.0" style="left:14.60px;top:364.20px;overflow:visible"><text x="4" y="23.00" font-family="Liberation Sans, sans-serif" font-size="20" font-weight="normal" fill="#ececec" textLength="104.20" lengthAdjust="spacingAndGlyphs">Geoff Sorto</text></svg>
<div style="left:381px;top:366px;width:112px;height:28px;text-align:center;font-size:20px;line-height:29px;color:#fcefe4;white-space:nowrap">QB</div>
<div style="left:495px;top:366px;width:112px;height:28px;text-align:center;font-size:20px;line-height:29px;color:#fcefe4;white-space:nowrap">QB</div>
<div style="left:608px;top:366px;width:151px;height:28px;text-align:center;font-size:20px;line-height:29px;color:#ececec;white-space:nowrap">6046</div>
<div style="left:760px;top:366px;width:151px;height:28px;text-align:center;font-size:20px;line-height:29px;color:#ececec;white-space:nowrap">9 2/8&quot;</div>
<div style="left:912px;top:366px;width:151px;height:28px;text-align:center;font-size:20px;line-height:29px;color:#ececec;white-space:nowrap">32 0/8&quot;</div>
<div style="left:1064px;top:366px;width:113px;height:28px;text-align:center;font-size:20px;line-height:29px;color:#ececec;white-space:nowrap">209</div>
<div style="left:1178px;top:366px;width:113px;height:28px;text-align:center;font-size:20px;line-height:29px;color:#ececec;white-space:nowrap">4.3</div>
<div style="left:1520px;top:366px;width:113px;height:28px;text-align:center;font-size:20px;line-height:29px;color:#44d8f0;white-space:nowrap">4.80</div>
<div style="left:1634px;top:366px;width:113px;height:28px;text-align:center;font-size:20px;line-height:29px;color:#88b0f0;white-space:nowrap">1.70</div>
<div style="left:1748px;top:366px;width:113px;height:28px;text-align:center;font-size:20px;line-height:29px;color:#44d8f0;white-space:nowrap">28</div>
<div style="left:1862px;top:366px;width:113px;height:28px;text-align:center;font-size:20px;line-height:29px;color:#c8a8f0;white-space:nowrap">7</div>
<div style="left:1976px;top:366px;width:113px;height:28px;text-align:center;font-size:20px;line-height:29px;color:#44d8f0;white-space:nowrap">2-07</div>
<div style="left:2090px;top:366px;width:113px;height:28px;text-align:center;font-size:20px;line-height:29px;color:#44e088;white-space:nowrap">9-06</div>
<div style="left:2204px;top:366px;width:113px;height:28px;text-align:center;font-size:20px;line-height:29px;color:#44d8f0;white-space:nowrap">4.35</div>
<div style="left:2318px;top:366px;width:113px;height:28px;text-align:center;font-size:20px;line-height:29px;color:#44d8f0;white-space:nowrap">7.17</div>
<svg width="165.4" height="32.0" style="left:2433.70px;top:364.20px;overflow:visible"><text x="4" y="23.00" font-family="Liberation Sans, sans-serif" font-size="20" font-weight="normal" fill="#ececec" textLength="145.40" lengthAdjust="spacingAndGlyphs">Oklahoma State</text></svg>
<div style="left:0;top:394px;width:2846px;height:28px;background:#222329"></div>
<div style="left:1178px;top:394px;width:113px;height:28px;background:#1f1f22"></div>
<div style="left:1291px;top:394px;width:229px;height:28px;background:#0d161e"></div>
<div style="left:0;top:394px;width:13px;height:28px;background:linear-gradient(90deg,#e27236,#b85a2e)"></div>
<div style="left:381px;top:394px;width:113px;height:28px;background:linear-gradient(90deg,#e3723a 0%,#d26a36 30%,#a8562f 80%,#9e522c 100%)"></div>
<div style="left:494px;top:394px;width:113px;height:28px;background:linear-gradient(90deg,#e3723a 0%,#d26a36 30%,#a8562f 80%,#9e522c 100%)"></div>
<div style="left:379px;top:394px;width:2px;height:28px;background:#2a0e04"></div>
<div style="left:1294px;top:396px;width:72px;height:24px;background:linear-gradient(90deg,#e5763a 0%,#b88068 35%,#7c8c98 70%,#5a7c94 100%);color:#f4f4f4;font-size:20px;line-height:24px;text-align:center">r</div>
<div style="left:1370px;top:396px;width:72px;height:24px;background:linear-gradient(90deg,#5eb0dc 0%,#55a0cc 40%,#4a88b0 100%);color:#f4f4f4;font-size:20px;line-height:24px;text-align:center">i</div>
<div style="left:1446px;top:396px;width:72px;height:24px;background:linear-gradient(90deg,#72a04c 0%,#5e9068 50%,#4a8098 100%);color:#f4f4f4;font-size:20px;line-height:24px;text-align:center">c</div>
<svg width="147.3" height="32.0" style="left:14.60px;top:392.20px;overflow:visible"><text x="4" y="23.00" font-family="Liberation Sans, sans-serif" font-size="20" font-weight="normal" fill="#ececec" textLength="127.30" lengthAdjust="spacingAndGlyphs">Tucker Walker</text></svg>
<div style="left:381px;top:394px;width:112px;height:28px;text-align:center;font-size:20px;line-height:29px;color:#fcefe4;white-space:nowrap">QB</div>
<div style="left:495px;top:394px;width:112px;height:28px;text-align:center;font-size:20px;line-height:29px;color:#fcefe4;white-space:nowrap">QB</div>
<div style="left:608px;top:394px;width:151px;height:28px;text-align:center;font-size:20px;line-height:29px;color:#ececec;white-space:nowrap">6027</div>
<div style="left:760px;top:394px;width:151px;height:28px;text-align:center;font-size:20px;line-height:29px;color:#ececec;white-space:nowrap">9 5/8&quot;</div>
<div style="left:912px;top:394px;width:151px;height:28px;text-align:center;font-size:20px;line-height:29px;color:#ececec;white-space:nowrap">29 1/8&quot;</div>
<div style="left:1064px;top:394px;width:113px;height:28px;text-align:center;font-size:20px;line-height:29px;color:#ececec;white-space:nowrap">219</div>
<div style="left:1178px;top:394px;width:113px;height:28px;text-align:center;font-size:20px;line-height:29px;color:#ececec;white-space:nowrap">4.2</div>
<div style="left:1520px;top:394px;width:113px;height:28px;text-align:center;font-size:20px;line-height:29px;color:#44d8f0;white-space:nowrap">4.80</div>
<div style="left:1634px;top:394px;width:113px;height:28px;text-align:center;font-size:20px;line-height:29px;color:#88b0f0;white-space:nowrap">1.70</div>
<div style="left:1748px;top:394px;width:113px;height:28px;text-align:center;font-size:20px;line-height:29px;color:#44d8f0;white-space:nowrap">28</div>
<div style="left:1862px;top:394px;width:113px;height:28px;text-align:center;font-size:20px;line-height:29px;color:#a0a0f2;white-space:nowrap">8</div>
<div style="left:1976px;top:394px;width:113px;height:28px;text-align:center;font-size:20px;line-height:29px;color:#a0a0f2;white-space:nowrap">2-03</div>
<div style="left:2090px;top:394px;width:113px;height:28px;text-align:center;font-size:20px;line-height:29px;color:#44e088;white-space:nowrap">9-07</div>
<div style="left:2204px;top:394px;width:113px;height:28px;text-align:center;font-size:20px;line-height:29px;color:#44d8f0;white-space:nowrap">4.35</div>
<div style="left:2318px;top:394px;width:113px;height:28px;text-align:center;font-size:20px;line-height:29px;color:#44e088;white-space:nowrap">7.09</div>
<svg width="82.7" height="32.0" style="left:2433.70px;top:392.20px;overflow:visible"><text x="4" y="23.00" font-family="Liberation Sans, sans-serif" font-size="20" font-weight="normal" fill="#ececec" textLength="62.70" lengthAdjust="spacingAndGlyphs">Florida</text></svg>
<div style="left:0;top:422px;width:2846px;height:28px;background:#17181c"></div>
<div style="left:1178px;top:422px;width:113px;height:28px;background:#101011"></div>
<div style="left:1291px;top:422px;width:229px;height:28px;background:#0d161e"></div>
<div style="left:0;top:422px;width:13px;height:28px;background:linear-gradient(90deg,#e27236,#b85a2e)"></div>
<div style="left:381px;top:422px;width:113px;height:28px;background:linear-gradient(90deg,#e3723a 0%,#d26a36 30%,#a8562f 80%,#9e522c 100%)"></div>
<div style="left:494px;top:422px;width:113px;height:28px;background:linear-gradient(90deg,#e3723a 0%,#d26a36 30%,#a8562f 80%,#9e522c 100%)"></div>
<div style="left:379px;top:422px;width:2px;height:28px;background:#2a0e04"></div>
<div style="left:1294px;top:424px;width:72px;height:24px;background:linear-gradient(90deg,#e5763a 0%,#b88068 35%,#7c8c98 70%,#5a7c94 100%);color:#f4f4f4;font-size:20px;line-height:24px;text-align:center">r</div>
<div style="left:1370px;top:424px;width:72px;height:24px;background:linear-gradient(90deg,#5eb0dc 0%,#55a0cc 40%,#4a88b0 100%);color:#f4f4f4;font-size:20px;line-height:24px;text-align:center">i</div>
<div style="left:1446px;top:424px;width:72px;height:24px;background:linear-gradient(90deg,#72a04c 0%,#5e9068 50%,#4a8098 100%);color:#f4f4f4;font-size:20px;line-height:24px;text-align:center">c</div>
<svg width="131.8" height="32.0" style="left:14.60px;top:420.20px;overflow:visible"><text x="4" y="23.00" font-family="Liberation Sans, sans-serif" font-size="20" font-weight="normal" fill="#ececec" textLength="111.80" lengthAdjust="spacingAndGlyphs">Herb Cherry</text></svg>
<div style="left:381px;top:422px;width:112px;height:28px;text-align:center;font-size:20px;line-height:29px;color:#fcefe4;white-space:nowrap">QB</div>
<div style="left:495px;top:422px;width:112px;height:28px;text-align:center;font-size:20px;line-height:29px;color:#fcefe4;white-space:nowrap">QB</div>
<div style="left:608px;top:422px;width:151px;height:28px;text-align:center;font-size:20px;line-height:29px;color:#ececec;white-space:nowrap">6036</div>
<div style="left:760px;top:422px;width:151px;height:28px;text-align:center;font-size:20px;line-height:29px;color:#ececec;white-space:nowrap">8 3/8&quot;</div>
<div style="left:912px;top:422px;width:151px;height:28px;text-align:center;font-size:20px;line-height:29px;color:#ececec;white-space:nowrap">32 6/8&quot;</div>
<div style="left:1064px;top:422px;width:113px;height:28px;text-align:center;font-size:20px;line-height:29px;color:#ececec;white-space:nowrap">230</div>
<div style="left:1178px;top:422px;width:113px;height:28px;text-align:center;font-size:20px;line-height:29px;color:#ececec;white-space:nowrap">4.2</div>
<div style="left:1520px;top:422px;width:113px;height:28px;text-align:center;font-size:20px;line-height:29px;color:#44e088;white-space:nowrap">4.78</div>
<div style="left:1634px;top:422px;width:113px;height:28px;text-align:center;font-size:20px;line-height:29px;color:#88b0f0;white-space:nowrap">1.69</div>
<div style="left:1748px;top:422px;width:113px;height:28px;text-align:center;font-size:20px;line-height:29px;color:#44e088;white-space:nowrap">29</div>
<div style="left:1862px;top:422px;width:113px;height:28px;text-align:center;font-size:20px;line-height:29px;color:#c8a8f0;white-space:nowrap">7</div>
<div style="left:1976px;top:422px;width:113px;height:28px;text-align:center;font-size:20px;line-height:29px;color:#44d8f0;white-space:nowrap">2-06</div>
<div style="left:2090px;top:422px;width:113px;height:28px;text-align:center;font-size:20px;line-height:29px;color:#a0a0f2;white-space:nowrap">8-08</div>
<div style="left:2204px;top:422px;width:113px;height:28px;text-align:center;font-size:20px;line-height:29px;color:#44e088;white-space:nowrap">4.30</div>
<div style="left:2318px;top:422px;width:113px;height:28px;text-align:center;font-size:20px;line-height:29px;color:#88b0f0;white-space:nowrap">7.30</div>
<svg width="88.2" height="32.0" style="left:2433.70px;top:420.20px;overflow:visible"><text x="4" y="23.00" font-family="Liberation Sans, sans-serif" font-size="20" font-weight="normal" fill="#ececec" textLength="68.20" lengthAdjust="spacingAndGlyphs">Hawai&#x27;i</text></svg>
<div style="left:0;top:450px;width:2846px;height:28px;background:#222329"></div>
<div style="left:1178px;top:450px;width:113px;height:28px;background:#1f1f22"></div>
<div style="left:1291px;top:450px;width:229px;height:28px;background:#0d161e"></div>
<div style="left:0;top:450px;width:13px;height:28px;background:linear-gradient(90deg,#e27236,#b85a2e)"></div>
<div style="left:381px;top:450px;width:113px;height:28px;background:linear-gradient(90deg,#e3723a 0%,#d26a36 30%,#a8562f 80%,#9e522c 100%)"></div>
<div style="left:494px;top:450px;width:113px;height:28px;background:linear-gradient(90deg,#e3723a 0%,#d26a36 30%,#a8562f 80%,#9e522c 100%)"></div>
<div style="left:379px;top:450px;width:2px;height:28px;background:#2a0e04"></div>
<div style="left:1294px;top:452px;width:72px;height:24px;background:linear-gradient(90deg,#e5763a 0%,#b88068 35%,#7c8c98 70%,#5a7c94 100%);color:#f4f4f4;font-size:20px;line-height:24px;text-align:center">r</div>
<div style="left:1370px;top:452px;width:72px;height:24px;background:linear-gradient(90deg,#5eb0dc 0%,#55a0cc 40%,#4a88b0 100%);color:#f4f4f4;font-size:20px;line-height:24px;text-align:center">i</div>
<div style="left:1446px;top:452px;width:72px;height:24px;background:linear-gradient(90deg,#72a04c 0%,#5e9068 50%,#4a8098 100%);color:#f4f4f4;font-size:20px;line-height:24px;text-align:center">c</div>
<svg width="181.9" height="32.0" style="left:14.60px;top:448.20px;overflow:visible"><text x="4" y="23.00" font-family="Liberation Sans, sans-serif" font-size="20" font-weight="normal" fill="#ececec" textLength="161.90" lengthAdjust="spacingAndGlyphs">Dorian Gregerson</text></svg>
<div style="left:381px;top:450px;width:112px;height:28px;text-align:center;font-size:20px;line-height:29px;color:#fcefe4;white-space:nowrap">QB</div>
<div style="left:495px;top:450px;width:112px;height:28px;text-align:center;font-size:20px;line-height:29px;color:#fcefe4;white-space:nowrap">QB</div>
<div style="left:608px;top:450px;width:151px;height:28px;text-align:center;font-size:20px;line-height:29px;color:#ececec;white-space:nowrap">6052</div>
<div style="left:760px;top:450px;width:151px;height:28px;text-align:center;font-size:20px;line-height:29px;color:#ececec;white-space:nowrap">9 3/8&quot;</div>
<div style="left:912px;top:450px;width:151px;height:28px;text-align:center;font-size:20px;line-height:29px;color:#ececec;white-space:nowrap">32 5/8&quot;</div>
<div style="left:1064px;top:450px;width:113px;height:28px;text-align:center;font-size:20px;line-height:29px;color:#ececec;white-space:nowrap">214</div>
<div style="left:1178px;top:450px;width:113px;height:28px;text-align:center;font-size:20px;line-height:29px;color:#ececec;white-space:nowrap">4.2</div>
<div style="left:1520px;top:450px;width:113px;height:28px;text-align:center;font-size:20px;line-height:29px;color:#f0a868;white-space:nowrap">4.49</div>
<div style="left:1634px;top:450px;width:113px;height:28px;text-align:center;font-size:20px;line-height:29px;color:#48e4d8;white-space:nowrap">1.66</div>
<div style="left:1748px;top:450px;width:113px;height:28px;text-align:center;font-size:20px;line-height:29px;color:#b4ea68;white-space:nowrap">36</div>
<div style="left:1862px;top:450px;width:113px;height:28px;text-align:center;font-size:20px;line-height:29px;color:#c8a8f0;white-space:nowrap">7</div>
<div style="left:1976px;top:450px;width:113px;height:28px;text-align:center;font-size:20px;line-height:29px;color:#a0a0f2;white-space:nowrap">2-04</div>
<div style="left:2090px;top:450px;width:113px;height:28px;text-align:center;font-size:20px;line-height:29px;color:#44e088;white-space:nowrap">9-07</div>
<div style="left:2204px;top:450px;width:113px;height:28px;text-align:center;font-size:20px;line-height:29px;color:#44e088;white-space:nowrap">4.31</div>
<div style="left:2318px;top:450px;width:113px;height:28px;text-align:center;font-size:20px;line-height:29px;color:#a0a0f2;white-space:nowrap">7.49</div>
<svg width="60.9" height="32.0" style="left:2433.70px;top:448.20px;overflow:visible"><text x="4" y="23.00" font-family="Liberation Sans, sans-serif" font-size="20" font-weight="normal" fill="#ececec" textLength="40.90" lengthAdjust="spacingAndGlyphs">Troy</text></svg>
<div style="left:0;top:478px;width:2846px;height:28px;background:#17181c"></div>
<div style="left:1178px;top:478px;width:113px;height:28px;background:#101011"></div>
<div style="left:1291px;top:478px;width:229px;height:28px;background:#0d161e"></div>
<div style="left:0;top:478px;width:13px;height:28px;background:linear-gradient(90deg,#e27236,#b85a2e)"></div>
<div style="left:381px;top:478px;width:113px;height:28px;background:linear-gradient(90deg,#e3723a 0%,#d26a36 30%,#a8562f 80%,#9e522c 100%)"></div>
<div style="left:494px;top:478px;width:113px;height:28px;background:linear-gradient(90deg,#e3723a 0%,#d26a36 30%,#a8562f 80%,#9e522c 100%)"></div>
<div style="left:379px;top:478px;width:2px;height:28px;background:#2a0e04"></div>
<div style="left:1294px;top:480px;width:72px;height:24px;background:linear-gradient(90deg,#e5763a 0%,#b88068 35%,#7c8c98 70%,#5a7c94 100%);color:#f4f4f4;font-size:20px;line-height:24px;text-align:center">r</div>
<div style="left:1370px;top:480px;width:72px;height:24px;background:linear-gradient(90deg,#5eb0dc 0%,#55a0cc 40%,#4a88b0 100%);color:#f4f4f4;font-size:20px;line-height:24px;text-align:center">i</div>
<div style="left:1446px;top:480px;width:72px;height:24px;background:linear-gradient(90deg,#72a04c 0%,#5e9068 50%,#4a8098 100%);color:#f4f4f4;font-size:20px;line-height:24px;text-align:center">c</div>
<svg width="122.0" height="32.0" style="left:14.60px;top:476.20px;overflow:visible"><text x="4" y="23.00" font-family="Liberation Sans, sans-serif" font-size="20" font-weight="normal" fill="#ececec" textLength="102.00" lengthAdjust="spacingAndGlyphs">Pete Kirwin</text></svg>
<div style="left:381px;top:478px;width:112px;height:28px;text-align:center;font-size:20px;line-height:29px;color:#fcefe4;white-space:nowrap">QB</div>
<div style="left:495px;top:478px;width:112px;height:28px;text-align:center;font-size:20px;line-height:29px;color:#fcefe4;white-space:nowrap">QB</div>
<div style="left:608px;top:478px;width:151px;height:28px;text-align:center;font-size:20px;line-height:29px;color:#ececec;white-space:nowrap">6016</div>
<div style="left:760px;top:478px;width:151px;height:28px;text-align:center;font-size:20px;line-height:29px;color:#ececec;white-space:nowrap">10 1/8&quot;</div>
<div style="left:912px;top:478px;width:151px;height:28px;text-align:center;font-size:20px;line-height:29px;color:#ececec;white-space:nowrap">31 6/8&quot;</div>
<div style="left:1064px;top:478px;width:113px;height:28px;text-align:center;font-size:20px;line-height:29px;color:#ececec;white-space:nowrap">220</div>
<div style="left:1178px;top:478px;width:113px;height:28px;text-align:center;font-size:20px;line-height:29px;color:#ececec;white-space:nowrap">4.2</div>
<div style="left:1520px;top:478px;width:113px;height:28px;text-align:center;font-size:20px;line-height:29px;color:#44d8f0;white-space:nowrap">4.84</div>
<div style="left:1634px;top:478px;width:113px;height:28px;text-align:center;font-size:20px;line-height:29px;color:#48e4d8;white-space:nowrap">1.65</div>
<div style="left:1748px;top:478px;width:113px;height:28px;text-align:center;font-size:20px;line-height:29px;color:#88b0f0;white-space:nowrap">22</div>
<div style="left:1862px;top:478px;width:113px;height:28px;text-align:center;font-size:20px;line-height:29px;color:#c8a8f0;white-space:nowrap">7</div>
<div style="left:1976px;top:478px;width:113px;height:28px;text-align:center;font-size:20px;line-height:29px;color:#44e088;white-space:nowrap">2-08</div>
<div style="left:2090px;top:478px;width:113px;height:28px;text-align:center;font-size:20px;line-height:29px;color:#44d8f0;white-space:nowrap">9-03</div>
<div style="left:2204px;top:478px;width:113px;height:28px;text-align:center;font-size:20px;line-height:29px;color:#44d8f0;white-space:nowrap">4.35</div>
<div style="left:2318px;top:478px;width:113px;height:28px;text-align:center;font-size:20px;line-height:29px;color:#44e088;white-space:nowrap">7.15</div>
<svg width="115.5" height="32.0" style="left:2433.70px;top:476.20px;overflow:visible"><text x="4" y="23.00" font-family="Liberation Sans, sans-serif" font-size="20" font-weight="normal" fill="#ececec" textLength="95.50" lengthAdjust="spacingAndGlyphs">Ohio State</text></svg>
<div style="left:0;top:506px;width:2846px;height:28px;background:#222329"></div>
<div style="left:1178px;top:506px;width:113px;height:28px;background:#1f1f22"></div>
<div style="left:1291px;top:506px;width:229px;height:28px;background:#0d161e"></div>
<div style="left:0;top:506px;width:13px;height:28px;background:linear-gradient(90deg,#e27236,#b85a2e)"></div>
<div style="left:381px;top:506px;width:113px;height:28px;background:linear-gradient(90deg,#e3723a 0%,#d26a36 30%,#a8562f 80%,#9e522c 100%)"></div>
<div style="left:494px;top:506px;width:113px;height:28px;background:linear-gradient(90deg,#e3723a 0%,#d26a36 30%,#a8562f 80%,#9e522c 100%)"></div>
<div style="left:379px;top:506px;width:2px;height:28px;background:#2a0e04"></div>
<div style="left:1294px;top:508px;width:72px;height:24px;background:linear-gradient(90deg,#e5763a 0%,#b88068 35%,#7c8c98 70%,#5a7c94 100%);color:#f4f4f4;font-size:20px;line-height:24px;text-align:center">r</div>
<div style="left:1370px;top:508px;width:72px;height:24px;background:linear-gradient(90deg,#5eb0dc 0%,#55a0cc 40%,#4a88b0 100%);color:#f4f4f4;font-size:20px;line-height:24px;text-align:center">i</div>
<div style="left:1446px;top:508px;width:72px;height:24px;background:linear-gradient(90deg,#72a04c 0%,#5e9068 50%,#4a8098 100%);color:#f4f4f4;font-size:20px;line-height:24px;text-align:center">c</div>
<svg width="130.5" height="32.0" style="left:14.60px;top:504.20px;overflow:visible"><text x="4" y="23.00" font-family="Liberation Sans, sans-serif" font-size="20" font-weight="normal" fill="#ececec" textLength="110.50" lengthAdjust="spacingAndGlyphs">James Sliger</text></svg>
<div style="left:381px;top:506px;width:112px;height:28px;text-align:center;font-size:20px;line-height:29px;color:#fcefe4;white-space:nowrap">QB</div>
<div style="left:495px;top:506px;width:112px;height:28px;text-align:center;font-size:20px;line-height:29px;color:#fcefe4;white-space:nowrap">QB</div>
<div style="left:608px;top:506px;width:151px;height:28px;text-align:center;font-size:20px;line-height:29px;color:#ececec;white-space:nowrap">6030</div>
<div style="left:760px;top:506px;width:151px;height:28px;text-align:center;font-size:20px;line-height:29px;color:#ececec;white-space:nowrap">9 6/8&quot;</div>
<div style="left:912px;top:506px;width:151px;height:28px;text-align:center;font-size:20px;line-height:29px;color:#ececec;white-space:nowrap">32 0/8&quot;</div>
<div style="left:1064px;top:506px;width:113px;height:28px;text-align:center;font-size:20px;line-height:29px;color:#ececec;white-space:nowrap">217</div>
<div style="left:1178px;top:506px;width:113px;height:28px;text-align:center;font-size:20px;line-height:29px;color:#ececec;white-space:nowrap">4.2</div>
<div style="left:1520px;top:506px;width:113px;height:28px;text-align:center;font-size:20px;line-height:29px;color:#c8a8f0;white-space:nowrap">5.12</div>
<div style="left:1634px;top:506px;width:113px;height:28px;text-align:center;font-size:20px;line-height:29px;color:#c8a8f0;white-space:nowrap">1.75</div>
<div style="left:1748px;top:506px;width:113px;height:28px;text-align:center;font-size:20px;line-height:29px;color:#44d8f0;white-space:nowrap">28</div>
<div style="left:1862px;top:506px;width:113px;height:28px;text-align:center;font-size:20px;line-height:29px;color:#c8a8f0;white-space:nowrap">7</div>
<div style="left:1976px;top:506px;width:113px;height:28px;text-align:center;font-size:20px;line-height:29px;color:#b4ea68;white-space:nowrap">2-10</div>
<div style="left:2090px;top:506px;width:113px;height:28px;text-align:center;font-size:20px;line-height:29px;color:#c8a8f0;white-space:nowrap">8-04</div>
<div style="left:2204px;top:506px;width:113px;height:28px;text-align:center;font-size:20px;line-height:29px;color:#44e088;white-space:nowrap">4.28</div>
<div style="left:2318px;top:506px;width:113px;height:28px;text-align:center;font-size:20px;line-height:29px;color:#44e088;white-space:nowrap">7.07</div>
<svg width="120.2" height="32.0" style="left:2433.70px;top:504.20px;overflow:visible"><text x="4" y="23.00" font-family="Liberation Sans, sans-serif" font-size="20" font-weight="normal" fill="#ececec" textLength="100.20" lengthAdjust="spacingAndGlyphs">Boise State</text></svg>
<div style="left:0;top:534px;width:2846px;height:28px;background:#17181c"></div>
<div style="left:1178px;top:534px;width:113px;height:28px;background:#101011"></div>
<div style="left:1291px;top:534px;width:229px;height:28px;background:#0d161e"></div>
<div style="left:0;top:534px;width:13px;height:28px;background:linear-gradient(90deg,#e27236,#b85a2e)"></div>
<div style="left:381px;top:534px;width:113px;height:28px;background:linear-gradient(90deg,#e3723a 0%,#d26a36 30%,#a8562f 80%,#9e522c 100%)"></div>
<div style="left:494px;top:534px;width:113px;height:28px;background:linear-gradient(90deg,#e3723a 0%,#d26a36 30%,#a8562f 80%,#9e522c 100%)"></div>
<div style="left:379px;top:534px;width:2px;height:28px;background:#2a0e04"></div>
<div style="left:1294px;top:536px;width:72px;height:24px;background:linear-gradient(90deg,#e5763a 0%,#b88068 35%,#7c8c98 70%,#5a7c94 100%);color:#f4f4f4;font-size:20px;line-height:24px;text-align:center">r</div>
<div style="left:1370px;top:536px;width:72px;height:24px;background:linear-gradient(90deg,#5eb0dc 0%,#55a0cc 40%,#4a88b0 100%);color:#f4f4f4;font-size:20px;line-height:24px;text-align:center">i</div>
<div style="left:1446px;top:536px;width:72px;height:24px;background:linear-gradient(90deg,#72a04c 0%,#5e9068 50%,#4a8098 100%);color:#f4f4f4;font-size:20px;line-height:24px;text-align:center">c</div>
<svg width="207.2" height="32.0" style="left:14.60px;top:532.20px;overflow:visible"><text x="4" y="23.00" font-family="Liberation Sans, sans-serif" font-size="20" font-weight="normal" fill="#ececec" textLength="187.20" lengthAdjust="spacingAndGlyphs">Mitchell Washington</text></svg>
<div style="left:381px;top:534px;width:112px;height:28px;text-align:center;font-size:20px;line-height:29px;color:#fcefe4;white-space:nowrap">QB</div>
<div style="left:495px;top:534px;width:112px;height:28px;text-align:center;font-size:20px;line-height:29px;color:#fcefe4;white-space:nowrap">QB</div>
<div style="left:608px;top:534px;width:151px;height:28px;text-align:center;font-size:20px;line-height:29px;color:#ececec;white-space:nowrap">6044</div>
<div style="left:760px;top:534px;width:151px;height:28px;text-align:center;font-size:20px;line-height:29px;color:#ececec;white-space:nowrap">9 7/8&quot;</div>
<div style="left:912px;top:534px;width:151px;height:28px;text-align:center;font-size:20px;line-height:29px;color:#ececec;white-space:nowrap">30 3/8&quot;</div>
<div style="left:1064px;top:534px;width:113px;height:28px;text-align:center;font-size:20px;line-height:29px;color:#ececec;white-space:nowrap">241</div>
<div style="left:1178px;top:534px;width:113px;height:28px;text-align:center;font-size:20px;line-height:29px;color:#ececec;white-space:nowrap">4.2</div>
<div style="left:1520px;top:534px;width:113px;height:28px;text-align:center;font-size:20px;line-height:29px;color:#44d8f0;white-space:nowrap">4.92</div>
<div style="left:1634px;top:534px;width:113px;height:28px;text-align:center;font-size:20px;line-height:29px;color:#48e4d8;white-space:nowrap">1.64</div>
<div style="left:1748px;top:534px;width:113px;height:28px;text-align:center;font-size:20px;line-height:29px;color:#b4ea68;white-space:nowrap">37</div>
<div style="left:1862px;top:534px;width:113px;height:28px;text-align:center;font-size:20px;line-height:29px;color:#e8e8e8;white-space:nowrap">6</div>
<div style="left:1976px;top:534px;width:113px;height:28px;text-align:center;font-size:20px;line-height:29px;color:#b4ea68;white-space:nowrap">2-10</div>
<div style="left:2090px;top:534px;width:113px;height:28px;text-align:center;font-size:20px;line-height:29px;color:#b4ea68;white-space:nowrap">9-10</div>
<div style="left:2204px;top:534px;width:113px;height:28px;text-align:center;font-size:20px;line-height:29px;color:#88b0f0;white-space:nowrap">4.50</div>
<div style="left:2318px;top:534px;width:113px;height:28px;text-align:center;font-size:20px;line-height:29px;color:#44d8f0;white-space:nowrap">7.19</div>
<svg width="82.7" height="32.0" style="left:2433.70px;top:532.20px;overflow:visible"><text x="4" y="23.00" font-family="Liberation Sans, sans-serif" font-size="20" font-weight="normal" fill="#ececec" textLength="62.70" lengthAdjust="spacingAndGlyphs">Florida</text></svg>
<div style="left:0;top:562px;width:2846px;height:28px;background:#222329"></div>
<div style="left:1178px;top:562px;width:113px;height:28px;background:#1f1f22"></div>
<div style="left:1291px;top:562px;width:229px;height:28px;background:#0d161e"></div>
<div style="left:0;top:562px;width:13px;height:28px;background:linear-gradient(90deg,#e27236,#b85a2e)"></div>
<div style="left:381px;top:562px;width:113px;height:28px;background:linear-gradient(90deg,#e3723a 0%,#d26a36 30%,#a8562f 80%,#9e522c 100%)"></div>
<div style="left:494px;top:562px;width:113px;height:28px;background:linear-gradient(90deg,#e3723a 0%,#d26a36 30%,#a8562f 80%,#9e522c 100%)"></div>
<div style="left:379px;top:562px;width:2px;height:28px;background:#2a0e04"></div>
<div style="left:1294px;top:564px;width:72px;height:24px;background:linear-gradient(90deg,#e5763a 0%,#b88068 35%,#7c8c98 70%,#5a7c94 100%);color:#f4f4f4;font-size:20px;line-height:24px;text-align:center">r</div>
<div style="left:1370px;top:564px;width:72px;height:24px;background:linear-gradient(90deg,#5eb0dc 0%,#55a0cc 40%,#4a88b0 100%);color:#f4f4f4;font-size:20px;line-height:24px;text-align:center">i</div>
<div style="left:1446px;top:564px;width:72px;height:24px;background:linear-gradient(90deg,#72a04c 0%,#5e9068 50%,#4a8098 100%);color:#f4f4f4;font-size:20px;line-height:24px;text-align:center">c</div>
<svg width="176.9" height="32.0" style="left:14.60px;top:560.20px;overflow:visible"><text x="4" y="23.00" font-family="Liberation Sans, sans-serif" font-size="20" font-weight="normal" fill="#ececec" textLength="156.90" lengthAdjust="spacingAndGlyphs">Spencer Dunnam</text></svg>
<div style="left:381px;top:562px;width:112px;height:28px;text-align:center;font-size:20px;line-height:29px;color:#fcefe4;white-space:nowrap">QB</div>
<div style="left:495px;top:562px;width:112px;height:28px;text-align:center;font-size:20px;line-height:29px;color:#fcefe4;white-space:nowrap">QB</div>
<div style="left:608px;top:562px;width:151px;height:28px;text-align:center;font-size:20px;line-height:29px;color:#ececec;white-space:nowrap">6033</div>
<div style="left:760px;top:562px;width:151px;height:28px;text-align:center;font-size:20px;line-height:29px;color:#ececec;white-space:nowrap">9 5/8&quot;</div>
<div style="left:912px;top:562px;width:151px;height:28px;text-align:center;font-size:20px;line-height:29px;color:#ececec;white-space:nowrap">30 6/8&quot;</div>
<div style="left:1064px;top:562px;width:113px;height:28px;text-align:center;font-size:20px;line-height:29px;color:#ececec;white-space:nowrap">228</div>
<div style="left:1178px;top:562px;width:113px;height:28px;text-align:center;font-size:20px;line-height:29px;color:#ececec;white-space:nowrap">4.0</div>
<div style="left:1520px;top:562px;width:113px;height:28px;text-align:center;font-size:20px;line-height:29px;color:#88b0f0;white-space:nowrap">4.94</div>
<div style="left:1634px;top:562px;width:113px;height:28px;text-align:center;font-size:20px;line-height:29px;color:#e8e8e8;white-space:nowrap">1.79</div>
<div style="left:1748px;top:562px;width:113px;height:28px;text-align:center;font-size:20px;line-height:29px;color:#44e088;white-space:nowrap">30</div>
<div style="left:1862px;top:562px;width:113px;height:28px;text-align:center;font-size:20px;line-height:29px;color:#88b0f0;white-space:nowrap">9</div>
<div style="left:1976px;top:562px;width:113px;height:28px;text-align:center;font-size:20px;line-height:29px;color:#44d8f0;white-space:nowrap">2-06</div>
<div style="left:2090px;top:562px;width:113px;height:28px;text-align:center;font-size:20px;line-height:29px;color:#44d8f0;white-space:nowrap">9-01</div>
<div style="left:2204px;top:562px;width:113px;height:28px;text-align:center;font-size:20px;line-height:29px;color:#44e088;white-space:nowrap">4.29</div>
<div style="left:2318px;top:562px;width:113px;height:28px;text-align:center;font-size:20px;line-height:29px;color:#a0a0f2;white-space:nowrap">7.44</div>
<svg width="115.5" height="32.0" style="left:2433.70px;top:560.20px;overflow:visible"><text x="4" y="23.00" font-family="Liberation Sans, sans-serif" font-size="20" font-weight="normal" fill="#ececec" textLength="95.50" lengthAdjust="spacingAndGlyphs">Utah State</text></svg>
<div style="left:0;top:590px;width:2846px;height:28px;background:#17181c"></div>
<div style="left:1178px;top:590px;width:113px;height:28px;background:#101011"></div>
<div style="left:1291px;top:590px;width:229px;height:28px;background:#0d161e"></div>
<div style="left:0;top:590px;width:13px;height:28px;background:linear-gradient(90deg,#e27236,#b85a2e)"></div>
<div style="left:381px;top:590px;width:113px;height:28px;background:linear-gradient(90deg,#e3723a 0%,#d26a36 30%,#a8562f 80%,#9e522c 100%)"></div>
<div style="left:494px;top:590px;width:113px;height:28px;background:linear-gradient(90deg,#e3723a 0%,#d26a36 30%,#a8562f 80%,#9e522c 100%)"></div>
<div style="left:379px;top:590px;width:2px;height:28px;background:#2a0e04"></div>
<div style="left:1294px;top:592px;width:72px;height:24px;background:linear-gradient(90deg,#e5763a 0%,#b88068 35%,#7c8c98 70%,#5a7c94 100%);color:#f4f4f4;font-size:20px;line-height:24px;text-align:center">r</div>
<div style="left:1370px;top:592px;width:72px;height:24px;background:linear-gradient(90deg,#5eb0dc 0%,#55a0cc 40%,#4a88b0 100%);color:#f4f4f4;font-size:20px;line-height:24px;text-align:center">i</div>
<div style="left:1446px;top:592px;width:72px;height:24px;background:linear-gradient(90deg,#72a04c 0%,#5e9068 50%,#4a8098 100%);color:#f4f4f4;font-size:20px;line-height:24px;text-align:center">c</div>
<svg width="126.3" height="32.0" style="left:14.60px;top:588.20px;overflow:visible"><text x="4" y="23.00" font-family="Liberation Sans, sans-serif" font-size="20" font-weight="normal" fill="#ececec" textLength="106.30" lengthAdjust="spacingAndGlyphs">Jace Gracey</text></svg>
<div style="left:381px;top:590px;width:112px;height:28px;text-align:center;font-size:20px;line-height:29px;color:#fcefe4;white-space:nowrap">QB</div>
<div style="left:495px;top:590px;width:112px;height:28px;text-align:center;font-size:20px;line-height:29px;color:#fcefe4;white-space:nowrap">QB</div>
<div style="left:608px;top:590px;width:151px;height:28px;text-align:center;font-size:20px;line-height:29px;color:#ececec;white-space:nowrap">6034</div>
<div style="left:760px;top:590px;width:151px;height:28px;text-align:center;font-size:20px;line-height:29px;color:#ececec;white-space:nowrap">10 1/8&quot;</div>
<div style="left:912px;top:590px;width:151px;height:28px;text-align:center;font-size:20px;line-height:29px;color:#ececec;white-space:nowrap">32 7/8&quot;</div>
<div style="left:1064px;top:590px;width:113px;height:28px;text-align:center;font-size:20px;line-height:29px;color:#ececec;white-space:nowrap">227</div>
<div style="left:1178px;top:590px;width:113px;height:28px;text-align:center;font-size:20px;line-height:29px;color:#ececec;white-space:nowrap">4.0</div>
<div style="left:1520px;top:590px;width:113px;height:28px;text-align:center;font-size:20px;line-height:29px;color:#c8a8f0;white-space:nowrap">5.09</div>
<div style="left:1634px;top:590px;width:113px;height:28px;text-align:center;font-size:20px;line-height:29px;color:#88b0f0;white-space:nowrap">1.69</div>
<div style="left:1748px;top:590px;width:113px;height:28px;text-align:center;font-size:20px;line-height:29px;color:#44d8f0;white-space:nowrap">28</div>
<div style="left:1862px;top:590px;width:113px;height:28px;text-align:center;font-size:20px;line-height:29px;color:#c8a8f0;white-space:nowrap">7</div>
<div style="left:1976px;top:590px;width:113px;height:28px;text-align:center;font-size:20px;line-height:29px;color:#b4ea68;white-space:nowrap">2-09</div>
<div style="left:2090px;top:590px;width:113px;height:28px;text-align:center;font-size:20px;line-height:29px;color:#44e088;white-space:nowrap">9-04</div>
<div style="left:2204px;top:590px;width:113px;height:28px;text-align:center;font-size:20px;line-height:29px;color:#44e088;white-space:nowrap">4.32</div>
<div style="left:2318px;top:590px;width:113px;height:28px;text-align:center;font-size:20px;line-height:29px;color:#88b0f0;white-space:nowrap">7.42</div>
<svg width="154.4" height="32.0" style="left:2433.70px;top:588.20px;overflow:visible"><text x="4" y="23.00" font-family="Liberation Sans, sans-serif" font-size="20" font-weight="normal" fill="#ececec" textLength="134.40" lengthAdjust="spacingAndGlyphs">Michigan State</text></svg>
<div style="left:0;top:618px;width:2846px;height:28px;background:#222329"></div>
<div style="left:1178px;top:618px;width:113px;height:28px;background:#1f1f22"></div>
<div style="left:1291px;top:618px;width:229px;height:28px;background:#0d161e"></div>
<div style="left:0;top:618px;width:13px;height:28px;background:linear-gradient(90deg,#e27236,#b85a2e)"></div>
<div style="left:381px;top:618px;width:113px;height:28px;background:linear-gradient(90deg,#e3723a 0%,#d26a36 30%,#a8562f 80%,#9e522c 100%)"></div>
<div style="left:494px;top:618px;width:113px;height:28px;background:linear-gradient(90deg,#e3723a 0%,#d26a36 30%,#a8562f 80%,#9e522c 100%)"></div>
<div style="left:379px;top:618px;width:2px;height:28px;background:#2a0e04"></div>
<div style="left:1294px;top:620px;width:72px;height:24px;background:linear-gradient(90deg,#e5763a 0%,#b88068 35%,#7c8c98 70%,#5a7c94 100%);color:#f4f4f4;font-size:20px;line-height:24px;text-align:center">r</div>
<div style="left:1370px;top:620px;width:72px;height:24px;background:linear-gradient(90deg,#5eb0dc 0%,#55a0cc 40%,#4a88b0 100%);color:#f4f4f4;font-size:20px;line-height:24px;text-align:center">i</div>
<div style="left:1446px;top:620px;width:72px;height:24px;background:linear-gradient(90deg,#72a04c 0%,#5e9068 50%,#4a8098 100%);color:#f4f4f4;font-size:20px;line-height:24px;text-align:center">c</div>
<svg width="204.6" height="32.0" style="left:14.60px;top:616.20px;overflow:visible"><text x="4" y="23.00" font-family="Liberation Sans, sans-serif" font-size="20" font-weight="normal" fill="#ececec" textLength="184.60" lengthAdjust="spacingAndGlyphs">Derek Charbonneau</text></svg>
<div style="left:381px;top:618px;width:112px;height:28px;text-align:center;font-size:20px;line-height:29px;color:#fcefe4;white-space:nowrap">QB</div>
<div style="left:495px;top:618px;width:112px;height:28px;text-align:center;font-size:20px;line-height:29px;color:#fcefe4;white-space:nowrap">QB</div>
<div style="left:608px;top:618px;width:151px;height:28px;text-align:center;font-size:20px;line-height:29px;color:#ececec;white-space:nowrap">6013</div>
<div style="left:760px;top:618px;width:151px;height:28px;text-align:center;font-size:20px;line-height:29px;color:#ececec;white-space:nowrap">8 7/8&quot;</div>
<div style="left:912px;top:618px;width:151px;height:28px;text-align:center;font-size:20px;line-height:29px;color:#ececec;white-space:nowrap">31 1/8&quot;</div>
<div style="left:1064px;top:618px;width:113px;height:28px;text-align:center;font-size:20px;line-height:29px;color:#ececec;white-space:nowrap">208</div>
<div style="left:1178px;top:618px;width:113px;height:28px;text-align:center;font-size:20px;line-height:29px;color:#ececec;white-space:nowrap">3.9</div>
<div style="left:1520px;top:618px;width:113px;height:28px;text-align:center;font-size:20px;line-height:29px;color:#b4ea68;white-space:nowrap">4.68</div>
<div style="left:1634px;top:618px;width:113px;height:28px;text-align:center;font-size:20px;line-height:29px;color:#48e4d8;white-space:nowrap">1.65</div>
<div style="left:1748px;top:618px;width:113px;height:28px;text-align:center;font-size:20px;line-height:29px;color:#44e088;white-space:nowrap">32</div>
<div style="left:1862px;top:618px;width:113px;height:28px;text-align:center;font-size:20px;line-height:29px;color:#e8e8e8;white-space:nowrap">6</div>
<div style="left:1976px;top:618px;width:113px;height:28px;text-align:center;font-size:20px;line-height:29px;color:#a0a0f2;white-space:nowrap">2-03</div>
<div style="left:2090px;top:618px;width:113px;height:28px;text-align:center;font-size:20px;line-height:29px;color:#44d8f0;white-space:nowrap">9-01</div>
<div style="left:2204px;top:618px;width:113px;height:28px;text-align:center;font-size:20px;line-height:29px;color:#44d8f0;white-space:nowrap">4.35</div>
<div style="left:2318px;top:618px;width:113px;height:28px;text-align:center;font-size:20px;line-height:29px;color:#b4ea68;white-space:nowrap">7.01</div>
<svg width="153.7" height="32.0" style="left:2433.70px;top:616.20px;overflow:visible"><text x="4" y="23.00" font-family="Liberation Sans, sans-serif" font-size="20" font-weight="normal" fill="#ececec" textLength="133.70" lengthAdjust="spacingAndGlyphs">North Carolina</text></svg>
<div style="left:0;top:646px;width:2846px;height:28px;background:#17181c"></div>
<div style="left:1178px;top:646px;width:113px;height:28px;background:#101011"></div>
<div style="left:1291px;top:646px;width:229px;height:28px;background:#0d161e"></div>
<div style="left:0;top:646px;width:13px;height:28px;background:linear-gradient(90deg,#e27236,#b85a2e)"></div>
<div style="left:381px;top:646px;width:113px;height:28px;background:linear-gradient(90deg,#e3723a 0%,#d26a36 30%,#a8562f 80%,#9e522c 100%)"></div>
<div style="left:494px;top:646px;width:113px;height:28px;background:linear-gradient(90deg,#e3723a 0%,#d26a36 30%,#a8562f 80%,#9e522c 100%)"></div>
<div style="left:379px;top:646px;width:2px;height:28px;background:#2a0e04"></div>
<div style="left:1294px;top:648px;width:72px;height:24px;background:linear-gradient(90deg,#e5763a 0%,#b88068 35%,#7c8c98 70%,#5a7c94 100%);color:#f4f4f4;font-size:20px;line-height:24px;text-align:center">r</div>
<div style="left:1370px;top:648px;width:72px;height:24px;background:linear-gradient(90deg,#5eb0dc 0%,#55a0cc 40%,#4a88b0 100%);color:#f4f4f4;font-size:20px;line-height:24px;text-align:center">i</div>
<div style="left:1446px;top:648px;width:72px;height:24px;background:linear-gradient(90deg,#72a04c 0%,#5e9068 50%,#4a8098 100%);color:#f4f4f4;font-size:20px;line-height:24px;text-align:center">c</div>
<svg width="177.6" height="32.0" style="left:14.60px;top:644.20px;overflow:visible"><text x="4" y="23.00" font-family="Liberation Sans, sans-serif" font-size="20" font-weight="normal" fill="#ececec" textLength="157.60" lengthAdjust="spacingAndGlyphs">Broderick Leggett</text></svg>
<div style="left:381px;top:646px;width:112px;height:28px;text-align:center;font-size:20px;line-height:29px;color:#fcefe4;white-space:nowrap">QB</div>
<div style="left:495px;top:646px;width:112px;height:28px;text-align:center;font-size:20px;line-height:29px;color:#fcefe4;white-space:nowrap">QB</div>
<div style="left:608px;top:646px;width:151px;height:28px;text-align:center;font-size:20px;line-height:29px;color:#ececec;white-space:nowrap">6020</div>
<div style="left:760px;top:646px;width:151px;height:28px;text-align:center;font-size:20px;line-height:29px;color:#ececec;white-space:nowrap">9 3/8&quot;</div>
<div style="left:912px;top:646px;width:151px;height:28px;text-align:center;font-size:20px;line-height:29px;color:#ececec;white-space:nowrap">30 2/8&quot;</div>
<div style="left:1064px;top:646px;width:113px;height:28px;text-align:center;font-size:20px;line-height:29px;color:#ececec;white-space:nowrap">211</div>
<div style="left:1178px;top:646px;width:113px;height:28px;text-align:center;font-size:20px;line-height:29px;color:#ececec;white-space:nowrap">3.9</div>
<div style="left:1520px;top:646px;width:113px;height:28px;text-align:center;font-size:20px;line-height:29px;color:#44e088;white-space:nowrap">4.79</div>
<div style="left:1634px;top:646px;width:113px;height:28px;text-align:center;font-size:20px;line-height:29px;color:#e8e8e8;white-space:nowrap">1.77</div>
<div style="left:1748px;top:646px;width:113px;height:28px;text-align:center;font-size:20px;line-height:29px;color:#b4ea68;white-space:nowrap">34</div>
<div style="left:1862px;top:646px;width:113px;height:28px;text-align:center;font-size:20px;line-height:29px;color:#44e088;white-space:nowrap">11</div>
<div style="left:1976px;top:646px;width:113px;height:28px;text-align:center;font-size:20px;line-height:29px;color:#e8e8e8;white-space:nowrap">2-00</div>
<div style="left:2090px;top:646px;width:113px;height:28px;text-align:center;font-size:20px;line-height:29px;color:#44e088;white-space:nowrap">9-06</div>
<div style="left:2204px;top:646px;width:113px;height:28px;text-align:center;font-size:20px;line-height:29px;color:#88b0f0;white-space:nowrap">4.48</div>
<div style="left:2318px;top:646px;width:113px;height:28px;text-align:center;font-size:20px;line-height:29px;color:#44e088;white-space:nowrap">7.06</div>
<svg width="184.7" height="32.0" style="left:2433.70px;top:644.20px;overflow:visible"><text x="4" y="23.00" font-family="Liberation Sans, sans-serif" font-size="20" font-weight="normal" fill="#ececec" textLength="164.70" lengthAdjust="spacingAndGlyphs">Appalachian State</text></svg>
<div style="left:0;top:674px;width:2846px;height:28px;background:#222329"></div>
<div style="left:1178px;top:674px;width:113px;height:28px;background:#1f1f22"></div>
<div style="left:1291px;top:674px;width:229px;height:28px;background:#0d161e"></div>
<div style="left:0;top:674px;width:13px;height:28px;background:linear-gradient(90deg,#e27236,#b85a2e)"></div>
<div style="left:381px;top:674px;width:113px;height:28px;background:linear-gradient(90deg,#e3723a 0%,#d26a36 30%,#a8562f 80%,#9e522c 100%)"></div>
<div style="left:494px;top:674px;width:113px;height:28px;background:linear-gradient(90deg,#e3723a 0%,#d26a36 30%,#a8562f 80%,#9e522c 100%)"></div>
<div style="left:379px;top:674px;width:2px;height:28px;background:#2a0e04"></div>
<div style="left:1294px;top:676px;width:72px;height:24px;background:linear-gradient(90deg,#e5763a 0%,#b88068 35%,#7c8c98 70%,#5a7c94 100%);color:#f4f4f4;font-size:20px;line-height:24px;text-align:center">r</div>
<div style="left:1370px;top:676px;width:72px;height:24px;background:linear-gradient(90deg,#5eb0dc 0%,#55a0cc 40%,#4a88b0 100%);color:#f4f4f4;font-size:20px;line-height:24px;text-align:center">i</div>
<div style="left:1446px;top:676px;width:72px;height:24px;background:linear-gradient(90deg,#72a04c 0%,#5e9068 50%,#4a8098 100%);color:#f4f4f4;font-size:20px;line-height:24px;text-align:center">c</div>
<svg width="185.9" height="32.0" style="left:14.60px;top:672.20px;overflow:visible"><text x="4" y="23.00" font-family="Liberation Sans, sans-serif" font-size="20" font-weight="normal" fill="#ececec" textLength="165.90" lengthAdjust="spacingAndGlyphs">Reginald Maumau</text></svg>
<div style="left:381px;top:674px;width:112px;height:28px;text-align:center;font-size:20px;line-height:29px;color:#fcefe4;white-space:nowrap">QB</div>
<div style="left:495px;top:674px;width:112px;height:28px;text-align:center;font-size:20px;line-height:29px;color:#fcefe4;white-space:nowrap">QB</div>
<div style="left:608px;top:674px;width:151px;height:28px;text-align:center;font-size:20px;line-height:29px;color:#ececec;white-space:nowrap">6040</div>
<div style="left:760px;top:674px;width:151px;height:28px;text-align:center;font-size:20px;line-height:29px;color:#ececec;white-space:nowrap">9 3/8&quot;</div>
<div style="left:912px;top:674px;width:151px;height:28px;text-align:center;font-size:20px;line-height:29px;color:#ececec;white-space:nowrap">31 7/8&quot;</div>
<div style="left:1064px;top:674px;width:113px;height:28px;text-align:center;font-size:20px;line-height:29px;color:#ececec;white-space:nowrap">231</div>
<div style="left:1178px;top:674px;width:113px;height:28px;text-align:center;font-size:20px;line-height:29px;color:#ececec;white-space:nowrap">3.9</div>
<div style="left:1520px;top:674px;width:113px;height:28px;text-align:center;font-size:20px;line-height:29px;color:#c8a8f0;white-space:nowrap">5.16</div>
<div style="left:1634px;top:674px;width:113px;height:28px;text-align:center;font-size:20px;line-height:29px;color:#88b0f0;white-space:nowrap">1.72</div>
<div style="left:1748px;top:674px;width:113px;height:28px;text-align:center;font-size:20px;line-height:29px;color:#88b0f0;white-space:nowrap">21</div>
<div style="left:1862px;top:674px;width:113px;height:28px;text-align:center;font-size:20px;line-height:29px;color:#88b0f0;white-space:nowrap">9</div>
<div style="left:1976px;top:674px;width:113px;height:28px;text-align:center;font-size:20px;line-height:29px;color:#44e088;white-space:nowrap">2-08</div>
<div style="left:2090px;top:674px;width:113px;height:28px;text-align:center;font-size:20px;line-height:29px;color:#44e088;white-space:nowrap">9-05</div>
<div style="left:2204px;top:674px;width:113px;height:28px;text-align:center;font-size:20px;line-height:29px;color:#44d8f0;white-space:nowrap">4.40</div>
<div style="left:2318px;top:674px;width:113px;height:28px;text-align:center;font-size:20px;line-height:29px;color:#e8e048;white-space:nowrap">6.84</div>
<svg width="100.9" height="32.0" style="left:2433.70px;top:672.20px;overflow:visible"><text x="4" y="23.00" font-family="Liberation Sans, sans-serif" font-size="20" font-weight="normal" fill="#ececec" textLength="80.90" lengthAdjust="spacingAndGlyphs">Alabama</text></svg>
<div style="left:0;top:702px;width:2846px;height:28px;background:#17181c"></div>
<div style="left:1178px;top:702px;width:113px;height:28px;background:#101011"></div>
<div style="left:1291px;top:702px;width:229px;height:28px;background:#0d161e"></div>
<div style="left:0;top:702px;width:13px;height:28px;background:linear-gradient(90deg,#e27236,#b85a2e)"></div>
<div style="left:381px;top:702px;width:113px;height:28px;background:linear-gradient(90deg,#e3723a 0%,#d26a36 30%,#a8562f 80%,#9e522c 100%)"></div>
<div style="left:494px;top:702px;width:113px;height:28px;background:linear-gradient(90deg,#e3723a 0%,#d26a36 30%,#a8562f 80%,#9e522c 100%)"></div>
<div style="left:379px;top:702px;width:2px;height:28px;background:#2a0e04"></div>
<div style="left:1294px;top:704px;width:72px;height:24px;background:linear-gradient(90deg,#e5763a 0%,#b88068 35%,#7c8c98 70%,#5a7c94 100%);color:#f4f4f4;font-size:20px;line-height:24px;text-align:center">r</div>
<div style="left:1370px;top:704px;width:72px;height:24px;background:linear-gradient(90deg,#5eb0dc 0%,#55a0cc 40%,#4a88b0 100%);color:#f4f4f4;font-size:20px;line-height:24px;text-align:center">i</div>
<div style="left:1446px;top:704px;width:72px;height:24px;background:linear-gradient(90deg,#72a04c 0%,#5e9068 50%,#4a8098 100%);color:#f4f4f4;font-size:20px;line-height:24px;text-align:center">c</div>
<svg width="166.0" height="32.0" style="left:14.60px;top:700.20px;overflow:visible"><text x="4" y="23.00" font-family="Liberation Sans, sans-serif" font-size="20" font-weight="normal" fill="#ececec" textLength="146.00" lengthAdjust="spacingAndGlyphs">DeAndre Blades</text></svg>
<div style="left:381px;top:702px;width:112px;height:28px;text-align:center;font-size:20px;line-height:29px;color:#fcefe4;white-space:nowrap">QB</div>
<div style="left:495px;top:702px;width:112px;height:28px;text-align:center;font-size:20px;line-height:29px;color:#fcefe4;white-space:nowrap">QB</div>
<div style="left:608px;top:702px;width:151px;height:28px;text-align:center;font-size:20px;line-height:29px;color:#ececec;white-space:nowrap">6033</div>
<div style="left:760px;top:702px;width:151px;height:28px;text-align:center;font-size:20px;line-height:29px;color:#ececec;white-space:nowrap">9 5/8&quot;</div>
<div style="left:912px;top:702px;width:151px;height:28px;text-align:center;font-size:20px;line-height:29px;color:#ececec;white-space:nowrap">31 2/8&quot;</div>
<div style="left:1064px;top:702px;width:113px;height:28px;text-align:center;font-size:20px;line-height:29px;color:#ececec;white-space:nowrap">224</div>
<div style="left:1178px;top:702px;width:113px;height:28px;text-align:center;font-size:20px;line-height:29px;color:#ececec;white-space:nowrap">3.8</div>
<div style="left:1520px;top:702px;width:113px;height:28px;text-align:center;font-size:20px;line-height:29px;color:#c8a8f0;white-space:nowrap">5.12</div>
<div style="left:1634px;top:702px;width:113px;height:28px;text-align:center;font-size:20px;line-height:29px;color:#e8e8e8;white-space:nowrap">1.82</div>
<div style="left:1748px;top:702px;width:113px;height:28px;text-align:center;font-size:20px;line-height:29px;color:#44e088;white-space:nowrap">29</div>
<div style="left:1862px;top:702px;width:113px;height:28px;text-align:center;font-size:20px;line-height:29px;color:#c8a8f0;white-space:nowrap">7</div>
<div style="left:1976px;top:702px;width:113px;height:28px;text-align:center;font-size:20px;line-height:29px;color:#b4ea68;white-space:nowrap">2-09</div>
<div style="left:2090px;top:702px;width:113px;height:28px;text-align:center;font-size:20px;line-height:29px;color:#f0a868;white-space:nowrap">10-04</div>
<div style="left:2204px;top:702px;width:113px;height:28px;text-align:center;font-size:20px;line-height:29px;color:#44d8f0;white-space:nowrap">4.38</div>
<div style="left:2318px;top:702px;width:113px;height:28px;text-align:center;font-size:20px;line-height:29px;color:#44d8f0;white-space:nowrap">7.27</div>
<svg width="131.9" height="32.0" style="left:2433.70px;top:700.20px;overflow:visible"><text x="4" y="23.00" font-family="Liberation Sans, sans-serif" font-size="20" font-weight="normal" fill="#ececec" textLength="111.90" lengthAdjust="spacingAndGlyphs">Notre Dame</text></svg>
<div style="left:0;top:730px;width:2846px;height:28px;background:#222329"></div>
<div style="left:1178px;top:730px;width:113px;height:28px;background:#1f1f22"></div>
<div style="left:1291px;top:730px;width:229px;height:28px;background:#0d161e"></div>
<div style="left:0;top:730px;width:13px;height:28px;background:linear-gradient(90deg,#e27236,#b85a2e)"></div>
<div style="left:381px;top:730px;width:113px;height:28px;background:linear-gradient(90deg,#e3723a 0%,#d26a36 30%,#a8562f 80%,#9e522c 100%)"></div>
<div style="left:494px;top:730px;width:113px;height:28px;background:linear-gradient(90deg,#e3723a 0%,#d26a36 30%,#a8562f 80%,#9e522c 100%)"></div>
<div style="left:379px;top:730px;width:2px;height:28px;background:#2a0e04"></div>
<div style="left:1294px;top:732px;width:72px;height:24px;background:linear-gradient(90deg,#e5763a 0%,#b88068 35%,#7c8c98 70%,#5a7c94 100%);color:#f4f4f4;font-size:20px;line-height:24px;text-align:center">r</div>
<div style="left:1370px;top:732px;width:72px;height:24px;background:linear-gradient(90deg,#5eb0dc 0%,#55a0cc 40%,#4a88b0 100%);color:#f4f4f4;font-size:20px;line-height:24px;text-align:center">i</div>
<div style="left:1446px;top:732px;width:72px;height:24px;background:linear-gradient(90deg,#72a04c 0%,#5e9068 50%,#4a8098 100%);color:#f4f4f4;font-size:20px;line-height:24px;text-align:center">c</div>
<svg width="144.0" height="32.0" style="left:14.60px;top:728.20px;overflow:visible"><text x="4" y="23.00" font-family="Liberation Sans, sans-serif" font-size="20" font-weight="normal" fill="#ececec" textLength="124.00" lengthAdjust="spacingAndGlyphs">Joey Tinkham</text></svg>
<div style="left:381px;top:730px;width:112px;height:28px;text-align:center;font-size:20px;line-height:29px;color:#fcefe4;white-space:nowrap">QB</div>
<div style="left:495px;top:730px;width:112px;height:28px;text-align:center;font-size:20px;line-height:29px;color:#fcefe4;white-space:nowrap">QB</div>
<div style="left:608px;top:730px;width:151px;height:28px;text-align:center;font-size:20px;line-height:29px;color:#ececec;white-space:nowrap">6030</div>
<div style="left:760px;top:730px;width:151px;height:28px;text-align:center;font-size:20px;line-height:29px;color:#ececec;white-space:nowrap">10 0/8&quot;</div>
<div style="left:912px;top:730px;width:151px;height:28px;text-align:center;font-size:20px;line-height:29px;color:#ececec;white-space:nowrap">30 0/8&quot;</div>
<div style="left:1064px;top:730px;width:113px;height:28px;text-align:center;font-size:20px;line-height:29px;color:#ececec;white-space:nowrap">191</div>
<div style="left:1178px;top:730px;width:113px;height:28px;text-align:center;font-size:20px;line-height:29px;color:#ececec;white-space:nowrap">3.8</div>
<div style="left:1520px;top:730px;width:113px;height:28px;text-align:center;font-size:20px;line-height:29px;color:#44e088;white-space:nowrap">4.83</div>
<div style="left:1634px;top:730px;width:113px;height:28px;text-align:center;font-size:20px;line-height:29px;color:#48e4d8;white-space:nowrap">1.66</div>
<div style="left:1748px;top:730px;width:113px;height:28px;text-align:center;font-size:20px;line-height:29px;color:#88b0f0;white-space:nowrap">23</div>
<div style="left:1862px;top:730px;width:113px;height:28px;text-align:center;font-size:20px;line-height:29px;color:#e8e8e8;white-space:nowrap">6</div>
<div style="left:1976px;top:730px;width:113px;height:28px;text-align:center;font-size:20px;line-height:29px;color:#a0a0f2;white-space:nowrap">2-03</div>
<div style="left:2090px;top:730px;width:113px;height:28px;text-align:center;font-size:20px;line-height:29px;color:#44e088;white-space:nowrap">9-05</div>
<div style="left:2204px;top:730px;width:113px;height:28px;text-align:center;font-size:20px;line-height:29px;color:#88b0f0;white-space:nowrap">4.48</div>
<div style="left:2318px;top:730px;width:113px;height:28px;text-align:center;font-size:20px;line-height:29px;color:#b4ea68;white-space:nowrap">6.96</div>
<svg width="99.1" height="32.0" style="left:2433.70px;top:728.20px;overflow:visible"><text x="4" y="23.00" font-family="Liberation Sans, sans-serif" font-size="20" font-weight="normal" fill="#ececec" textLength="79.10" lengthAdjust="spacingAndGlyphs">Clemson</text></svg>
<div style="left:0;top:758px;width:2846px;height:28px;background:#17181c"></div>
<div style="left:1178px;top:758px;width:113px;height:28px;background:#101011"></div>
<div style="left:1291px;top:758px;width:229px;height:28px;background:#0d161e"></div>
<div style="left:0;top:758px;width:13px;height:28px;background:linear-gradient(90deg,#e27236,#b85a2e)"></div>
<div style="left:381px;top:758px;width:113px;height:28px;background:linear-gradient(90deg,#e3723a 0%,#d26a36 30%,#a8562f 80%,#9e522c 100%)"></div>
<div style="left:494px;top:758px;width:113px;height:28px;background:linear-gradient(90deg,#e3723a 0%,#d26a36 30%,#a8562f 80%,#9e522c 100%)"></div>
<div style="left:379px;top:758px;width:2px;height:28px;background:#2a0e04"></div>
<div style="left:1294px;top:760px;width:72px;height:24px;background:linear-gradient(90deg,#e5763a 0%,#b88068 35%,#7c8c98 70%,#5a7c94 100%);color:#f4f4f4;font-size:20px;line-height:24px;text-align:center">r</div>
<div style="left:1370px;top:760px;width:72px;height:24px;background:linear-gradient(90deg,#5eb0dc 0%,#55a0cc 40%,#4a88b0 100%);color:#f4f4f4;font-size:20px;line-height:24px;text-align:center">i</div>
<div style="left:1446px;top:760px;width:72px;height:24px;background:linear-gradient(90deg,#72a04c 0%,#5e9068 50%,#4a8098 100%);color:#f4f4f4;font-size:20px;line-height:24px;text-align:center">c</div>
<svg width="171.1" height="32.0" style="left:14.60px;top:756.20px;overflow:visible"><text x="4" y="23.00" font-family="Liberation Sans, sans-serif" font-size="20" font-weight="normal" fill="#ececec" textLength="151.10" lengthAdjust="spacingAndGlyphs">Alejandro Wilkin</text></svg>
<div style="left:381px;top:758px;width:112px;height:28px;text-align:center;font-size:20px;line-height:29px;color:#fcefe4;white-space:nowrap">QB</div>
<div style="left:495px;top:758px;width:112px;height:28px;text-align:center;font-size:20px;line-height:29px;color:#fcefe4;white-space:nowrap">QB</div>
<div style="left:608px;top:758px;width:151px;height:28px;text-align:center;font-size:20px;line-height:29px;color:#ececec;white-space:nowrap">6026</div>
<div style="left:760px;top:758px;width:151px;height:28px;text-align:center;font-size:20px;line-height:29px;color:#ececec;white-space:nowrap">10 4/8&quot;</div>
<div style="left:912px;top:758px;width:151px;height:28px;text-align:center;font-size:20px;line-height:29px;color:#ececec;white-space:nowrap">31 0/8&quot;</div>
<div style="left:1064px;top:758px;width:113px;height:28px;text-align:center;font-size:20px;line-height:29px;color:#ececec;white-space:nowrap">222</div>
<div style="left:1178px;top:758px;width:113px;height:28px;text-align:center;font-size:20px;line-height:29px;color:#ececec;white-space:nowrap">3.7</div>
<div style="left:1520px;top:758px;width:113px;height:28px;text-align:center;font-size:20px;line-height:29px;color:#88b0f0;white-space:nowrap">4.95</div>
<div style="left:1634px;top:758px;width:113px;height:28px;text-align:center;font-size:20px;line-height:29px;color:#e8e8e8;white-space:nowrap">1.78</div>
<div style="left:1748px;top:758px;width:113px;height:28px;text-align:center;font-size:20px;line-height:29px;color:#44e088;white-space:nowrap">31</div>
<div style="left:1862px;top:758px;width:113px;height:28px;text-align:center;font-size:20px;line-height:29px;color:#44d8f0;white-space:nowrap">10</div>
<div style="left:1976px;top:758px;width:113px;height:28px;text-align:center;font-size:20px;line-height:29px;color:#b4ea68;white-space:nowrap">2-09</div>
<div style="left:2090px;top:758px;width:113px;height:28px;text-align:center;font-size:20px;line-height:29px;color:#44d8f0;white-space:nowrap">9-02</div>
<div style="left:2204px;top:758px;width:113px;height:28px;text-align:center;font-size:20px;line-height:29px;color:#a0a0f2;white-space:nowrap">4.56</div>
<div style="left:2318px;top:758px;width:113px;height:28px;text-align:center;font-size:20px;line-height:29px;color:#a0a0f2;white-space:nowrap">7.53</div>
<svg width="157.4" height="32.0" style="left:2433.70px;top:756.20px;overflow:visible"><text x="4" y="23.00" font-family="Liberation Sans, sans-serif" font-size="20" font-weight="normal" fill="#ececec" textLength="137.40" lengthAdjust="spacingAndGlyphs">Florida Atlantic</text></svg>
<div style="left:0;top:786px;width:2846px;height:28px;background:#222329"></div>
<div style="left:1178px;top:786px;width:113px;height:28px;background:#1f1f22"></div>
<div style="left:1291px;top:786px;width:229px;height:28px;background:#0d161e"></div>
<div style="left:0;top:786px;width:13px;height:28px;background:linear-gradient(90deg,#e27236,#b85a2e)"></div>
<div style="left:381px;top:786px;width:113px;height:28px;background:linear-gradient(90deg,#e3723a 0%,#d26a36 30%,#a8562f 80%,#9e522c 100%)"></div>
<div style="left:494px;top:786px;width:113px;height:28px;background:linear-gradient(90deg,#e3723a 0%,#d26a36 30%,#a8562f 80%,#9e522c 100%)"></div>
<div style="left:379px;top:786px;width:2px;height:28px;background:#2a0e04"></div>
<div style="left:1294px;top:788px;width:72px;height:24px;background:linear-gradient(90deg,#e5763a 0%,#b88068 35%,#7c8c98 70%,#5a7c94 100%);color:#f4f4f4;font-size:20px;line-height:24px;text-align:center">r</div>
<div style="left:1370px;top:788px;width:72px;height:24px;background:linear-gradient(90deg,#5eb0dc 0%,#55a0cc 40%,#4a88b0 100%);color:#f4f4f4;font-size:20px;line-height:24px;text-align:center">i</div>
<div style="left:1446px;top:788px;width:72px;height:24px;background:linear-gradient(90deg,#72a04c 0%,#5e9068 50%,#4a8098 100%);color:#f4f4f4;font-size:20px;line-height:24px;text-align:center">c</div>
<svg width="142.6" height="32.0" style="left:14.60px;top:784.20px;overflow:visible"><text x="4" y="23.00" font-family="Liberation Sans, sans-serif" font-size="20" font-weight="normal" fill="#ececec" textLength="122.60" lengthAdjust="spacingAndGlyphs">Danny Chang</text></svg>
<div style="left:381px;top:786px;width:112px;height:28px;text-align:center;font-size:20px;line-height:29px;color:#fcefe4;white-space:nowrap">QB</div>
<div style="left:495px;top:786px;width:112px;height:28px;text-align:center;font-size:20px;line-height:29px;color:#fcefe4;white-space:nowrap">QB</div>
<div style="left:608px;top:786px;width:151px;height:28px;text-align:center;font-size:20px;line-height:29px;color:#ececec;white-space:nowrap">6063</div>
<div style="left:760px;top:786px;width:151px;height:28px;text-align:center;font-size:20px;line-height:29px;color:#ececec;white-space:nowrap">9 2/8&quot;</div>
<div style="left:912px;top:786px;width:151px;height:28px;text-align:center;font-size:20px;line-height:29px;color:#ececec;white-space:nowrap">30 1/8&quot;</div>
<div style="left:1064px;top:786px;width:113px;height:28px;text-align:center;font-size:20px;line-height:29px;color:#ececec;white-space:nowrap">227</div>
<div style="left:1178px;top:786px;width:113px;height:28px;text-align:center;font-size:20px;line-height:29px;color:#ececec;white-space:nowrap">3.1</div>
<div style="left:1520px;top:786px;width:113px;height:28px;text-align:center;font-size:20px;line-height:29px;color:#44d8f0;white-space:nowrap">4.84</div>
<div style="left:1634px;top:786px;width:113px;height:28px;text-align:center;font-size:20px;line-height:29px;color:#48e4d8;white-space:nowrap">1.66</div>
<div style="left:1748px;top:786px;width:113px;height:28px;text-align:center;font-size:20px;line-height:29px;color:#88b0f0;white-space:nowrap">24</div>
<div style="left:1862px;top:786px;width:113px;height:28px;text-align:center;font-size:20px;line-height:29px;color:#e8e8e8;white-space:nowrap">6</div>
<div style="left:1976px;top:786px;width:113px;height:28px;text-align:center;font-size:20px;line-height:29px;color:#e8e048;white-space:nowrap">2-11</div>
<div style="left:2090px;top:786px;width:113px;height:28px;text-align:center;font-size:20px;line-height:29px;color:#b4ea68;white-space:nowrap">9-10</div>
<div style="left:2204px;top:786px;width:113px;height:28px;text-align:center;font-size:20px;line-height:29px;color:#44e088;white-space:nowrap">4.30</div>
<div style="left:2318px;top:786px;width:113px;height:28px;text-align:center;font-size:20px;line-height:29px;color:#88b0f0;white-space:nowrap">7.35</div>
<svg width="82.7" height="32.0" style="left:2433.70px;top:784.20px;overflow:visible"><text x="4" y="23.00" font-family="Liberation Sans, sans-serif" font-size="20" font-weight="normal" fill="#ececec" textLength="62.70" lengthAdjust="spacingAndGlyphs">Florida</text></svg>
<div style="left:0;top:814px;width:2846px;height:28px;background:#17181c"></div>
<div style="left:1178px;top:814px;width:113px;height:28px;background:#101011"></div>
<div style="left:1291px;top:814px;width:229px;height:28px;background:#0d161e"></div>
<div style="left:0;top:814px;width:13px;height:28px;background:linear-gradient(90deg,#e27236,#b85a2e)"></div>
<div style="left:381px;top:814px;width:113px;height:28px;background:linear-gradient(90deg,#e3723a 0%,#d26a36 30%,#a8562f 80%,#9e522c 100%)"></div>
<div style="left:494px;top:814px;width:113px;height:28px;background:linear-gradient(90deg,#e3723a 0%,#d26a36 30%,#a8562f 80%,#9e522c 100%)"></div>
<div style="left:379px;top:814px;width:2px;height:28px;background:#2a0e04"></div>
<div style="left:1294px;top:816px;width:72px;height:24px;background:linear-gradient(90deg,#e5763a 0%,#b88068 35%,#7c8c98 70%,#5a7c94 100%);color:#f4f4f4;font-size:20px;line-height:24px;text-align:center">r</div>
<div style="left:1370px;top:816px;width:72px;height:24px;background:linear-gradient(90deg,#5eb0dc 0%,#55a0cc 40%,#4a88b0 100%);color:#f4f4f4;font-size:20px;line-height:24px;text-align:center">i</div>
<div style="left:1446px;top:816px;width:72px;height:24px;background:linear-gradient(90deg,#72a04c 0%,#5e9068 50%,#4a8098 100%);color:#f4f4f4;font-size:20px;line-height:24px;text-align:center">c</div>
<svg width="153.4" height="32.0" style="left:14.60px;top:812.20px;overflow:visible"><text x="4" y="23.00" font-family="Liberation Sans, sans-serif" font-size="20" font-weight="normal" fill="#ececec" textLength="133.40" lengthAdjust="spacingAndGlyphs">Lamont Chung</text></svg>
<div style="left:381px;top:814px;width:112px;height:28px;text-align:center;font-size:20px;line-height:29px;color:#fcefe4;white-space:nowrap">QB</div>
<div style="left:495px;top:814px;width:112px;height:28px;text-align:center;font-size:20px;line-height:29px;color:#fcefe4;white-space:nowrap">QB</div>
<div style="left:608px;top:814px;width:151px;height:28px;text-align:center;font-size:20px;line-height:29px;color:#ececec;white-space:nowrap">6046</div>
<div style="left:760px;top:814px;width:151px;height:28px;text-align:center;font-size:20px;line-height:29px;color:#ececec;white-space:nowrap">9 1/8&quot;</div>
<div style="left:912px;top:814px;width:151px;height:28px;text-align:center;font-size:20px;line-height:29px;color:#ececec;white-space:nowrap">31 6/8&quot;</div>
<div style="left:1064px;top:814px;width:113px;height:28px;text-align:center;font-size:20px;line-height:29px;color:#ececec;white-space:nowrap">235</div>
<div style="left:1178px;top:814px;width:113px;height:28px;text-align:center;font-size:20px;line-height:29px;color:#ececec;white-space:nowrap">3.1</div>
<div style="left:1520px;top:814px;width:113px;height:28px;text-align:center;font-size:20px;line-height:29px;color:#e8e8e8;white-space:nowrap">5.25</div>
<div style="left:1634px;top:814px;width:113px;height:28px;text-align:center;font-size:20px;line-height:29px;color:#e8e8e8;white-space:nowrap">1.79</div>
<div style="left:1748px;top:814px;width:113px;height:28px;text-align:center;font-size:20px;line-height:29px;color:#44e088;white-space:nowrap">30</div>
<div style="left:1862px;top:814px;width:113px;height:28px;text-align:center;font-size:20px;line-height:29px;color:#c8a8f0;white-space:nowrap">7</div>
<div style="left:1976px;top:814px;width:113px;height:28px;text-align:center;font-size:20px;line-height:29px;color:#44d8f0;white-space:nowrap">2-07</div>
<div style="left:2090px;top:814px;width:113px;height:28px;text-align:center;font-size:20px;line-height:29px;color:#44d8f0;white-space:nowrap">9-03</div>
<div style="left:2204px;top:814px;width:113px;height:28px;text-align:center;font-size:20px;line-height:29px;color:#44d8f0;white-space:nowrap">4.41</div>
<div style="left:2318px;top:814px;width:113px;height:28px;text-align:center;font-size:20px;line-height:29px;color:#b4ea68;white-space:nowrap">6.98</div>
<svg width="79.1" height="32.0" style="left:2433.70px;top:812.20px;overflow:visible"><text x="4" y="23.00" font-family="Liberation Sans, sans-serif" font-size="20" font-weight="normal" fill="#ececec" textLength="59.10" lengthAdjust="spacingAndGlyphs">Illinois</text></svg>
<div style="left:0;top:842px;width:2846px;height:28px;background:#222329"></div>
<div style="left:1178px;top:842px;width:113px;height:28px;background:#1f1f22"></div>
<div style="left:1291px;top:842px;width:229px;height:28px;background:#0d161e"></div>
<div style="left:0;top:842px;width:13px;height:28px;background:linear-gradient(90deg,#e27236,#b85a2e)"></div>
<div style="left:381px;top:842px;width:113px;height:28px;background:linear-gradient(90deg,#e3723a 0%,#d26a36 30%,#a8562f 80%,#9e522c 100%)"></div>
<div style="left:494px;top:842px;width:113px;height:28px;background:linear-gradient(90deg,#e3723a 0%,#d26a36 30%,#a8562f 80%,#9e522c 100%)"></div>
<div style="left:379px;top:842px;width:2px;height:28px;background:#2a0e04"></div>
<div style="left:1294px;top:844px;width:72px;height:24px;background:linear-gradient(90deg,#e5763a 0%,#b88068 35%,#7c8c98 70%,#5a7c94 100%);color:#f4f4f4;font-size:20px;line-height:24px;text-align:center">r</div>
<div style="left:1370px;top:844px;width:72px;height:24px;background:linear-gradient(90deg,#5eb0dc 0%,#55a0cc 40%,#4a88b0 100%);color:#f4f4f4;font-size:20px;line-height:24px;text-align:center">i</div>
<div style="left:1446px;top:844px;width:72px;height:24px;background:linear-gradient(90deg,#72a04c 0%,#5e9068 50%,#4a8098 100%);color:#f4f4f4;font-size:20px;line-height:24px;text-align:center">c</div>
<svg width="140.8" height="32.0" style="left:14.60px;top:840.20px;overflow:visible"><text x="4" y="23.00" font-family="Liberation Sans, sans-serif" font-size="20" font-weight="normal" fill="#ececec" textLength="120.80" lengthAdjust="spacingAndGlyphs">Efrain Keister</text></svg>
<div style="left:381px;top:842px;width:112px;height:28px;text-align:center;font-size:20px;line-height:29px;color:#fcefe4;white-space:nowrap">QB</div>
<div style="left:495px;top:842px;width:112px;height:28px;text-align:center;font-size:20px;line-height:29px;color:#fcefe4;white-space:nowrap">QB</div>
<div style="left:608px;top:842px;width:151px;height:28px;text-align:center;font-size:20px;line-height:29px;color:#ececec;white-space:nowrap">6042</div>
<div style="left:760px;top:842px;width:151px;height:28px;text-align:center;font-size:20px;line-height:29px;color:#ececec;white-space:nowrap">9 4/8&quot;</div>
<div style="left:912px;top:842px;width:151px;height:28px;text-align:center;font-size:20px;line-height:29px;color:#ececec;white-space:nowrap">30 0/8&quot;</div>
<div style="left:1064px;top:842px;width:113px;height:28px;text-align:center;font-size:20px;line-height:29px;color:#ececec;white-space:nowrap">243</div>
<div style="left:1178px;top:842px;width:113px;height:28px;text-align:center;font-size:20px;line-height:29px;color:#ececec;white-space:nowrap">3.1</div>
<div style="left:1520px;top:842px;width:113px;height:28px;text-align:center;font-size:20px;line-height:29px;color:#44d8f0;white-space:nowrap">4.85</div>
<div style="left:1634px;top:842px;width:113px;height:28px;text-align:center;font-size:20px;line-height:29px;color:#48e4d8;white-space:nowrap">1.64</div>
<div style="left:1748px;top:842px;width:113px;height:28px;text-align:center;font-size:20px;line-height:29px;color:#88b0f0;white-space:nowrap">21</div>
<div style="left:1862px;top:842px;width:113px;height:28px;text-align:center;font-size:20px;line-height:29px;color:#c8a8f0;white-space:nowrap">7</div>
<div style="left:1976px;top:842px;width:113px;height:28px;text-align:center;font-size:20px;line-height:29px;color:#a0a0f2;white-space:nowrap">2-03</div>
<div style="left:2090px;top:842px;width:113px;height:28px;text-align:center;font-size:20px;line-height:29px;color:#b4ea68;white-space:nowrap">9-11</div>
<div style="left:2204px;top:842px;width:113px;height:28px;text-align:center;font-size:20px;line-height:29px;color:#88b0f0;white-space:nowrap">4.51</div>
<div style="left:2318px;top:842px;width:113px;height:28px;text-align:center;font-size:20px;line-height:29px;color:#b4ea68;white-space:nowrap">7.01</div>
<svg width="134.4" height="32.0" style="left:2433.70px;top:840.20px;overflow:visible"><text x="4" y="23.00" font-family="Liberation Sans, sans-serif" font-size="20" font-weight="normal" fill="#ececec" textLength="114.40" lengthAdjust="spacingAndGlyphs">Florida State</text></svg>
<div style="left:0;top:870px;width:2846px;height:28px;background:#17181c"></div>
<div style="left:1178px;top:870px;width:113px;height:28px;background:#101011"></div>
<div style="left:1291px;top:870px;width:229px;height:28px;background:#0d161e"></div>
<div style="left:0;top:870px;width:13px;height:28px;background:linear-gradient(90deg,#e27236,#b85a2e)"></div>
<div style="left:381px;top:870px;width:113px;height:28px;background:linear-gradient(90deg,#e3723a 0%,#d26a36 30%,#a8562f 80%,#9e522c 100%)"></div>
<div style="left:494px;top:870px;width:113px;height:28px;background:linear-gradient(90deg,#e3723a 0%,#d26a36 30%,#a8562f 80%,#9e522c 100%)"></div>
<div style="left:379px;top:870px;width:2px;height:28px;background:#2a0e04"></div>
<div style="left:1294px;top:872px;width:72px;height:24px;background:linear-gradient(90deg,#e5763a 0%,#b88068 35%,#7c8c98 70%,#5a7c94 100%);color:#f4f4f4;font-size:20px;line-height:24px;text-align:center">r</div>
<div style="left:1370px;top:872px;width:72px;height:24px;background:linear-gradient(90deg,#5eb0dc 0%,#55a0cc 40%,#4a88b0 100%);color:#f4f4f4;font-size:20px;line-height:24px;text-align:center">i</div>
<div style="left:1446px;top:872px;width:72px;height:24px;background:linear-gradient(90deg,#72a04c 0%,#5e9068 50%,#4a8098 100%);color:#f4f4f4;font-size:20px;line-height:24px;text-align:center">c</div>
<svg width="162.4" height="32.0" style="left:14.60px;top:868.20px;overflow:visible"><text x="4" y="23.00" font-family="Liberation Sans, sans-serif" font-size="20" font-weight="normal" fill="#ececec" textLength="142.40" lengthAdjust="spacingAndGlyphs">Norman Moore</text></svg>
<div style="left:381px;top:870px;width:112px;height:28px;text-align:center;font-size:20px;line-height:29px;color:#fcefe4;white-space:nowrap">QB</div>
<div style="left:495px;top:870px;width:112px;height:28px;text-align:center;font-size:20px;line-height:29px;color:#fcefe4;white-space:nowrap">QB</div>
<div style="left:608px;top:870px;width:151px;height:28px;text-align:center;font-size:20px;line-height:29px;color:#ececec;white-space:nowrap">6022</div>
<div style="left:760px;top:870px;width:151px;height:28px;text-align:center;font-size:20px;line-height:29px;color:#ececec;white-space:nowrap">9 4/8&quot;</div>
<div style="left:912px;top:870px;width:151px;height:28px;text-align:center;font-size:20px;line-height:29px;color:#ececec;white-space:nowrap">31 7/8&quot;</div>
<div style="left:1064px;top:870px;width:113px;height:28px;text-align:center;font-size:20px;line-height:29px;color:#ececec;white-space:nowrap">233</div>
<div style="left:1178px;top:870px;width:113px;height:28px;text-align:center;font-size:20px;line-height:29px;color:#ececec;white-space:nowrap">3.1</div>
<div style="left:1520px;top:870px;width:113px;height:28px;text-align:center;font-size:20px;line-height:29px;color:#b4ea68;white-space:nowrap">4.68</div>
<div style="left:1634px;top:870px;width:113px;height:28px;text-align:center;font-size:20px;line-height:29px;color:#88b0f0;white-space:nowrap">1.68</div>
<div style="left:1748px;top:870px;width:113px;height:28px;text-align:center;font-size:20px;line-height:29px;color:#44d8f0;white-space:nowrap">28</div>
<div style="left:1862px;top:870px;width:113px;height:28px;text-align:center;font-size:20px;line-height:29px;color:#c8a8f0;white-space:nowrap">7</div>
<div style="left:1976px;top:870px;width:113px;height:28px;text-align:center;font-size:20px;line-height:29px;color:#44d8f0;white-space:nowrap">2-07</div>
<div style="left:2090px;top:870px;width:113px;height:28px;text-align:center;font-size:20px;line-height:29px;color:#b4ea68;white-space:nowrap">9-08</div>
<div style="left:2204px;top:870px;width:113px;height:28px;text-align:center;font-size:20px;line-height:29px;color:#a0a0f2;white-space:nowrap">4.52</div>
<div style="left:2318px;top:870px;width:113px;height:28px;text-align:center;font-size:20px;line-height:29px;color:#88b0f0;white-space:nowrap">7.31</div>
<svg width="83.5" height="32.0" style="left:2433.70px;top:868.20px;overflow:visible"><text x="4" y="23.00" font-family="Liberation Sans, sans-serif" font-size="20" font-weight="normal" fill="#ececec" textLength="63.50" lengthAdjust="spacingAndGlyphs">Kansas</text></svg>
<div style="left:0;top:898px;width:2846px;height:28px;background:#222329"></div>
<div style="left:1178px;top:898px;width:113px;height:28px;background:#1f1f22"></div>
<div style="left:1291px;top:898px;width:229px;height:28px;background:#0d161e"></div>
<div style="left:0;top:898px;width:13px;height:28px;background:linear-gradient(90deg,#e27236,#b85a2e)"></div>
<div style="left:381px;top:898px;width:113px;height:28px;background:linear-gradient(90deg,#e3723a 0%,#d26a36 30%,#a8562f 80%,#9e522c 100%)"></div>
<div style="left:494px;top:898px;width:113px;height:28px;background:linear-gradient(90deg,#e3723a 0%,#d26a36 30%,#a8562f 80%,#9e522c 100%)"></div>
<div style="left:379px;top:898px;width:2px;height:28px;background:#2a0e04"></div>
<div style="left:1294px;top:900px;width:72px;height:24px;background:linear-gradient(90deg,#e5763a 0%,#b88068 35%,#7c8c98 70%,#5a7c94 100%);color:#f4f4f4;font-size:20px;line-height:24px;text-align:center">r</div>
<div style="left:1370px;top:900px;width:72px;height:24px;background:linear-gradient(90deg,#5eb0dc 0%,#55a0cc 40%,#4a88b0 100%);color:#f4f4f4;font-size:20px;line-height:24px;text-align:center">i</div>
<div style="left:1446px;top:900px;width:72px;height:24px;background:linear-gradient(90deg,#72a04c 0%,#5e9068 50%,#4a8098 100%);color:#f4f4f4;font-size:20px;line-height:24px;text-align:center">c</div>
<svg width="133.6" height="32.0" style="left:14.60px;top:896.20px;overflow:visible"><text x="4" y="23.00" font-family="Liberation Sans, sans-serif" font-size="20" font-weight="normal" fill="#ececec" textLength="113.60" lengthAdjust="spacingAndGlyphs">Tim Beecher</text></svg>
<div style="left:381px;top:898px;width:112px;height:28px;text-align:center;font-size:20px;line-height:29px;color:#fcefe4;white-space:nowrap">QB</div>
<div style="left:495px;top:898px;width:112px;height:28px;text-align:center;font-size:20px;line-height:29px;color:#fcefe4;white-space:nowrap">QB</div>
<div style="left:608px;top:898px;width:151px;height:28px;text-align:center;font-size:20px;line-height:29px;color:#ececec;white-space:nowrap">6045</div>
<div style="left:760px;top:898px;width:151px;height:28px;text-align:center;font-size:20px;line-height:29px;color:#ececec;white-space:nowrap">9 4/8&quot;</div>
<div style="left:912px;top:898px;width:151px;height:28px;text-align:center;font-size:20px;line-height:29px;color:#ececec;white-space:nowrap">31 3/8&quot;</div>
<div style="left:1064px;top:898px;width:113px;height:28px;text-align:center;font-size:20px;line-height:29px;color:#ececec;white-space:nowrap">231</div>
<div style="left:1178px;top:898px;width:113px;height:28px;text-align:center;font-size:20px;line-height:29px;color:#ececec;white-space:nowrap">3.0</div>
<div style="left:1520px;top:898px;width:113px;height:28px;text-align:center;font-size:20px;line-height:29px;color:#88b0f0;white-space:nowrap">4.95</div>
<div style="left:1634px;top:898px;width:113px;height:28px;text-align:center;font-size:20px;line-height:29px;color:#c8a8f0;white-space:nowrap">1.74</div>
<div style="left:1748px;top:898px;width:113px;height:28px;text-align:center;font-size:20px;line-height:29px;color:#88b0f0;white-space:nowrap">23</div>
<div style="left:1862px;top:898px;width:113px;height:28px;text-align:center;font-size:20px;line-height:29px;color:#b4ea68;white-space:nowrap">12</div>
<div style="left:1976px;top:898px;width:113px;height:28px;text-align:center;font-size:20px;line-height:29px;color:#44d8f0;white-space:nowrap">2-07</div>
<div style="left:2090px;top:898px;width:113px;height:28px;text-align:center;font-size:20px;line-height:29px;color:#c8a8f0;white-space:nowrap">8-05</div>
<div style="left:2204px;top:898px;width:113px;height:28px;text-align:center;font-size:20px;line-height:29px;color:#b4ea68;white-space:nowrap">4.21</div>
<div style="left:2318px;top:898px;width:113px;height:28px;text-align:center;font-size:20px;line-height:29px;color:#a0a0f2;white-space:nowrap">7.48</div>
<svg width="113.7" height="32.0" style="left:2433.70px;top:896.20px;overflow:visible"><text x="4" y="23.00" font-family="Liberation Sans, sans-serif" font-size="20" font-weight="normal" fill="#ececec" textLength="93.70" lengthAdjust="spacingAndGlyphs">Oklahoma</text></svg>
<div style="left:0;top:926px;width:2846px;height:28px;background:#17181c"></div>
<div style="left:1178px;top:926px;width:113px;height:28px;background:#101011"></div>
<div style="left:1291px;top:926px;width:229px;height:28px;background:#0d161e"></div>
<div style="left:0;top:926px;width:13px;height:28px;background:linear-gradient(90deg,#e27236,#b85a2e)"></div>
<div style="left:381px;top:926px;width:113px;height:28px;background:linear-gradient(90deg,#e3723a 0%,#d26a36 30%,#a8562f 80%,#9e522c 100%)"></div>
<div style="left:494px;top:926px;width:113px;height:28px;background:linear-gradient(90deg,#e3723a 0%,#d26a36 30%,#a8562f 80%,#9e522c 100%)"></div>
<div style="left:379px;top:926px;width:2px;height:28px;background:#2a0e04"></div>
<div style="left:1294px;top:928px;width:72px;height:24px;background:linear-gradient(90deg,#e5763a 0%,#b88068 35%,#7c8c98 70%,#5a7c94 100%);color:#f4f4f4;font-size:20px;line-height:24px;text-align:center">r</div>
<div style="left:1370px;top:928px;width:72px;height:24px;background:linear-gradient(90deg,#5eb0dc 0%,#55a0cc 40%,#4a88b0 100%);color:#f4f4f4;font-size:20px;line-height:24px;text-align:center">i</div>
<div style="left:1446px;top:928px;width:72px;height:24px;background:linear-gradient(90deg,#72a04c 0%,#5e9068 50%,#4a8098 100%);color:#f4f4f4;font-size:20px;line-height:24px;text-align:center">c</div>
<svg width="165.7" height="32.0" style="left:14.60px;top:924.20px;overflow:visible"><text x="4" y="23.00" font-family="Liberation Sans, sans-serif" font-size="20" font-weight="normal" fill="#ececec" textLength="145.70" lengthAdjust="spacingAndGlyphs">Dominique Eide</text></svg>
<div style="left:381px;top:926px;width:112px;height:28px;text-align:center;font-size:20px;line-height:29px;color:#fcefe4;white-space:nowrap">QB</div>
<div style="left:495px;top:926px;width:112px;height:28px;text-align:center;font-size:20px;line-height:29px;color:#fcefe4;white-space:nowrap">QB</div>
<div style="left:608px;top:926px;width:151px;height:28px;text-align:center;font-size:20px;line-height:29px;color:#ececec;white-space:nowrap">6026</div>
<div style="left:760px;top:926px;width:151px;height:28px;text-align:center;font-size:20px;line-height:29px;color:#ececec;white-space:nowrap">9 7/8&quot;</div>
<div style="left:912px;top:926px;width:151px;height:28px;text-align:center;font-size:20px;line-height:29px;color:#ececec;white-space:nowrap">31 5/8&quot;</div>
<div style="left:1064px;top:926px;width:113px;height:28px;text-align:center;font-size:20px;line-height:29px;color:#ececec;white-space:nowrap">213</div>
<div style="left:1178px;top:926px;width:113px;height:28px;text-align:center;font-size:20px;line-height:29px;color:#ececec;white-space:nowrap">3.0</div>
<div style="left:1520px;top:926px;width:113px;height:28px;text-align:center;font-size:20px;line-height:29px;color:#b4ea68;white-space:nowrap">4.71</div>
<div style="left:1634px;top:926px;width:113px;height:28px;text-align:center;font-size:20px;line-height:29px;color:#c8a8f0;white-space:nowrap">1.73</div>
<div style="left:1748px;top:926px;width:113px;height:28px;text-align:center;font-size:20px;line-height:29px;color:#b4ea68;white-space:nowrap">36</div>
<div style="left:1862px;top:926px;width:113px;height:28px;text-align:center;font-size:20px;line-height:29px;color:#88b0f0;white-space:nowrap">9</div>
<div style="left:1976px;top:926px;width:113px;height:28px;text-align:center;font-size:20px;line-height:29px;color:#44e088;white-space:nowrap">2-08</div>
<div style="left:2090px;top:926px;width:113px;height:28px;text-align:center;font-size:20px;line-height:29px;color:#c8a8f0;white-space:nowrap">8-05</div>
<div style="left:2204px;top:926px;width:113px;height:28px;text-align:center;font-size:20px;line-height:29px;color:#c8a8f0;white-space:nowrap">4.63</div>
<div style="left:2318px;top:926px;width:113px;height:28px;text-align:center;font-size:20px;line-height:29px;color:#44d8f0;white-space:nowrap">7.21</div>
<svg width="147.2" height="32.0" style="left:2433.70px;top:924.20px;overflow:visible"><text x="4" y="23.00" font-family="Liberation Sans, sans-serif" font-size="20" font-weight="normal" fill="#ececec" textLength="127.20" lengthAdjust="spacingAndGlyphs">Northwestern</text></svg>
<div style="left:0;top:954px;width:2846px;height:28px;background:#222329"></div>
<div style="left:1178px;top:954px;width:113px;height:28px;background:#1f1f22"></div>
<div style="left:1291px;top:954px;width:229px;height:28px;background:#0d161e"></div>
<div style="left:0;top:954px;width:13px;height:28px;background:linear-gradient(90deg,#e27236,#b85a2e)"></div>
<div style="left:381px;top:954px;width:113px;height:28px;background:linear-gradient(90deg,#e3723a 0%,#d26a36 30%,#a8562f 80%,#9e522c 100%)"></div>
<div style="left:494px;top:954px;width:113px;height:28px;background:linear-gradient(90deg,#e3723a 0%,#d26a36 30%,#a8562f 80%,#9e522c 100%)"></div>
<div style="left:379px;top:954px;width:2px;height:28px;background:#2a0e04"></div>
<div style="left:1294px;top:956px;width:72px;height:24px;background:linear-gradient(90deg,#e5763a 0%,#b88068 35%,#7c8c98 70%,#5a7c94 100%);color:#f4f4f4;font-size:20px;line-height:24px;text-align:center">r</div>
<div style="left:1370px;top:956px;width:72px;height:24px;background:linear-gradient(90deg,#5eb0dc 0%,#55a0cc 40%,#4a88b0 100%);color:#f4f4f4;font-size:20px;line-height:24px;text-align:center">i</div>
<div style="left:1446px;top:956px;width:72px;height:24px;background:linear-gradient(90deg,#72a04c 0%,#5e9068 50%,#4a8098 100%);color:#f4f4f4;font-size:20px;line-height:24px;text-align:center">c</div>
<svg width="140.8" height="32.0" style="left:14.60px;top:952.20px;overflow:visible"><text x="4" y="23.00" font-family="Liberation Sans, sans-serif" font-size="20" font-weight="normal" fill="#ececec" textLength="120.80" lengthAdjust="spacingAndGlyphs">Robert Leahy</text></svg>
<div style="left:381px;top:954px;width:112px;height:28px;text-align:center;font-size:20px;line-height:29px;color:#fcefe4;white-space:nowrap">QB</div>
<div style="left:495px;top:954px;width:112px;height:28px;text-align:center;font-size:20px;line-height:29px;color:#fcefe4;white-space:nowrap">QB</div>
<div style="left:608px;top:954px;width:151px;height:28px;text-align:center;font-size:20px;line-height:29px;color:#ececec;white-space:nowrap">6031</div>
<div style="left:760px;top:954px;width:151px;height:28px;text-align:center;font-size:20px;line-height:29px;color:#ececec;white-space:nowrap">9 3/8&quot;</div>
<div style="left:912px;top:954px;width:151px;height:28px;text-align:center;font-size:20px;line-height:29px;color:#ececec;white-space:nowrap">30 6/8&quot;</div>
<div style="left:1064px;top:954px;width:113px;height:28px;text-align:center;font-size:20px;line-height:29px;color:#ececec;white-space:nowrap">216</div>
<div style="left:1178px;top:954px;width:113px;height:28px;text-align:center;font-size:20px;line-height:29px;color:#ececec;white-space:nowrap">3.0</div>
<div style="left:1520px;top:954px;width:113px;height:28px;text-align:center;font-size:20px;line-height:29px;color:#88b0f0;white-space:nowrap">4.94</div>
<div style="left:1634px;top:954px;width:113px;height:28px;text-align:center;font-size:20px;line-height:29px;color:#88b0f0;white-space:nowrap">1.69</div>
<div style="left:1748px;top:954px;width:113px;height:28px;text-align:center;font-size:20px;line-height:29px;color:#44d8f0;white-space:nowrap">28</div>
<div style="left:1862px;top:954px;width:113px;height:28px;text-align:center;font-size:20px;line-height:29px;color:#a0a0f2;white-space:nowrap">8</div>
<div style="left:1976px;top:954px;width:113px;height:28px;text-align:center;font-size:20px;line-height:29px;color:#a0a0f2;white-space:nowrap">2-03</div>
<div style="left:2090px;top:954px;width:113px;height:28px;text-align:center;font-size:20px;line-height:29px;color:#a0a0f2;white-space:nowrap">8-07</div>
<div style="left:2204px;top:954px;width:113px;height:28px;text-align:center;font-size:20px;line-height:29px;color:#b4ea68;white-space:nowrap">4.24</div>
<div style="left:2318px;top:954px;width:113px;height:28px;text-align:center;font-size:20px;line-height:29px;color:#44e088;white-space:nowrap">7.06</div>
<svg width="155.5" height="32.0" style="left:2433.70px;top:952.20px;overflow:visible"><text x="4" y="23.00" font-family="Liberation Sans, sans-serif" font-size="20" font-weight="normal" fill="#ececec" textLength="135.50" lengthAdjust="spacingAndGlyphs">Colorado State</text></svg>
<div style="left:0;top:982px;width:2846px;height:28px;background:#17181c"></div>
<div style="left:1178px;top:982px;width:113px;height:28px;background:#101011"></div>
<div style="left:1291px;top:982px;width:229px;height:28px;background:#0d161e"></div>
<div style="left:0;top:982px;width:13px;height:28px;background:linear-gradient(90deg,#e27236,#b85a2e)"></div>
<div style="left:381px;top:982px;width:113px;height:28px;background:linear-gradient(90deg,#e3723a 0%,#d26a36 30%,#a8562f 80%,#9e522c 100%)"></div>
<div style="left:494px;top:982px;width:113px;height:28px;background:linear-gradient(90deg,#e3723a 0%,#d26a36 30%,#a8562f 80%,#9e522c 100%)"></div>
<div style="left:379px;top:982px;width:2px;height:28px;background:#2a0e04"></div>
<div style="left:1294px;top:984px;width:72px;height:24px;background:linear-gradient(90deg,#e5763a 0%,#b88068 35%,#7c8c98 70%,#5a7c94 100%);color:#f4f4f4;font-size:20px;line-height:24px;text-align:center">r</div>
<div style="left:1370px;top:984px;width:72px;height:24px;background:linear-gradient(90deg,#5eb0dc 0%,#55a0cc 40%,#4a88b0 100%);color:#f4f4f4;font-size:20px;line-height:24px;text-align:center">i</div>
<div style="left:1446px;top:984px;width:72px;height:24px;background:linear-gradient(90deg,#72a04c 0%,#5e9068 50%,#4a8098 100%);color:#f4f4f4;font-size:20px;line-height:24px;text-align:center">c</div>
<svg width="128.9" height="32.0" style="left:14.60px;top:980.20px;overflow:visible"><text x="4" y="23.00" font-family="Liberation Sans, sans-serif" font-size="20" font-weight="normal" fill="#ececec" textLength="108.90" lengthAdjust="spacingAndGlyphs">Jesus Castle</text></svg>
<div style="left:381px;top:982px;width:112px;height:28px;text-align:center;font-size:20px;line-height:29px;color:#fcefe4;white-space:nowrap">QB</div>
<div style="left:495px;top:982px;width:112px;height:28px;text-align:center;font-size:20px;line-height:29px;color:#fcefe4;white-space:nowrap">QB</div>
<div style="left:608px;top:982px;width:151px;height:28px;text-align:center;font-size:20px;line-height:29px;color:#ececec;white-space:nowrap">6053</div>
<div style="left:760px;top:982px;width:151px;height:28px;text-align:center;font-size:20px;line-height:29px;color:#ececec;white-space:nowrap">8 6/8&quot;</div>
<div style="left:912px;top:982px;width:151px;height:28px;text-align:center;font-size:20px;line-height:29px;color:#ececec;white-space:nowrap">30 5/8&quot;</div>
<div style="left:1064px;top:982px;width:113px;height:28px;text-align:center;font-size:20px;line-height:29px;color:#ececec;white-space:nowrap">226</div>
<div style="left:1178px;top:982px;width:113px;height:28px;text-align:center;font-size:20px;line-height:29px;color:#ececec;white-space:nowrap">2.9</div>
<div style="left:1520px;top:982px;width:113px;height:28px;text-align:center;font-size:20px;line-height:29px;color:#88b0f0;white-space:nowrap">4.95</div>
<div style="left:1634px;top:982px;width:113px;height:28px;text-align:center;font-size:20px;line-height:29px;color:#e8e8e8;white-space:nowrap">1.82</div>
<div style="left:1748px;top:982px;width:113px;height:28px;text-align:center;font-size:20px;line-height:29px;color:#88b0f0;white-space:nowrap">19</div>
<div style="left:1862px;top:982px;width:113px;height:28px;text-align:center;font-size:20px;line-height:29px;color:#c8a8f0;white-space:nowrap">7</div>
<div style="left:1976px;top:982px;width:113px;height:28px;text-align:center;font-size:20px;line-height:29px;color:#44e088;white-space:nowrap">2-08</div>
<div style="left:2090px;top:982px;width:113px;height:28px;text-align:center;font-size:20px;line-height:29px;color:#44e088;white-space:nowrap">9-05</div>
<div style="left:2204px;top:982px;width:113px;height:28px;text-align:center;font-size:20px;line-height:29px;color:#44e088;white-space:nowrap">4.32</div>
<div style="left:2318px;top:982px;width:113px;height:28px;text-align:center;font-size:20px;line-height:29px;color:#c8a8f0;white-space:nowrap">7.56</div>
<svg width="100.9" height="32.0" style="left:2433.70px;top:980.20px;overflow:visible"><text x="4" y="23.00" font-family="Liberation Sans, sans-serif" font-size="20" font-weight="normal" fill="#ececec" textLength="80.90" lengthAdjust="spacingAndGlyphs">Alabama</text></svg>
<div style="left:0;top:1010px;width:2846px;height:28px;background:#222329"></div>
<div style="left:1178px;top:1010px;width:113px;height:28px;background:#1f1f22"></div>
<div style="left:1291px;top:1010px;width:229px;height:28px;background:#0d161e"></div>
<div style="left:0;top:1010px;width:13px;height:28px;background:linear-gradient(90deg,#e27236,#b85a2e)"></div>
<div style="left:381px;top:1010px;width:113px;height:28px;background:linear-gradient(90deg,#e3723a 0%,#d26a36 30%,#a8562f 80%,#9e522c 100%)"></div>
<div style="left:494px;top:1010px;width:113px;height:28px;background:linear-gradient(90deg,#e3723a 0%,#d26a36 30%,#a8562f 80%,#9e522c 100%)"></div>
<div style="left:379px;top:1010px;width:2px;height:28px;background:#2a0e04"></div>
<div style="left:1294px;top:1012px;width:72px;height:24px;background:linear-gradient(90deg,#e5763a 0%,#b88068 35%,#7c8c98 70%,#5a7c94 100%);color:#f4f4f4;font-size:20px;line-height:24px;text-align:center">r</div>
<div style="left:1370px;top:1012px;width:72px;height:24px;background:linear-gradient(90deg,#5eb0dc 0%,#55a0cc 40%,#4a88b0 100%);color:#f4f4f4;font-size:20px;line-height:24px;text-align:center">i</div>
<div style="left:1446px;top:1012px;width:72px;height:24px;background:linear-gradient(90deg,#72a04c 0%,#5e9068 50%,#4a8098 100%);color:#f4f4f4;font-size:20px;line-height:24px;text-align:center">c</div>
<svg width="219.1" height="32.0" style="left:14.60px;top:1008.20px;overflow:visible"><text x="4" y="23.00" font-family="Liberation Sans, sans-serif" font-size="20" font-weight="normal" fill="#ececec" textLength="199.10" lengthAdjust="spacingAndGlyphs">Santiago Cunningham</text></svg>
<div style="left:381px;top:1010px;width:112px;height:28px;text-align:center;font-size:20px;line-height:29px;color:#fcefe4;white-space:nowrap">QB</div>
<div style="left:495px;top:1010px;width:112px;height:28px;text-align:center;font-size:20px;line-height:29px;color:#fcefe4;white-space:nowrap">QB</div>
<div style="left:608px;top:1010px;width:151px;height:28px;text-align:center;font-size:20px;line-height:29px;color:#ececec;white-space:nowrap">6015</div>
<div style="left:760px;top:1010px;width:151px;height:28px;text-align:center;font-size:20px;line-height:29px;color:#ececec;white-space:nowrap">10 0/8&quot;</div>
<div style="left:912px;top:1010px;width:151px;height:28px;text-align:center;font-size:20px;line-height:29px;color:#ececec;white-space:nowrap">31 0/8&quot;</div>
<div style="left:1064px;top:1010px;width:113px;height:28px;text-align:center;font-size:20px;line-height:29px;color:#ececec;white-space:nowrap">214</div>
<div style="left:1178px;top:1010px;width:113px;height:28px;text-align:center;font-size:20px;line-height:29px;color:#ececec;white-space:nowrap">2.9</div>
<div style="left:1520px;top:1010px;width:113px;height:28px;text-align:center;font-size:20px;line-height:29px;color:#44d8f0;white-space:nowrap">4.88</div>
<div style="left:1634px;top:1010px;width:113px;height:28px;text-align:center;font-size:20px;line-height:29px;color:#a0a0f2;white-space:nowrap">1.71</div>
<div style="left:1748px;top:1010px;width:113px;height:28px;text-align:center;font-size:20px;line-height:29px;color:#44e088;white-space:nowrap">29</div>
<div style="left:1862px;top:1010px;width:113px;height:28px;text-align:center;font-size:20px;line-height:29px;color:#c8a8f0;white-space:nowrap">7</div>
<div style="left:1976px;top:1010px;width:113px;height:28px;text-align:center;font-size:20px;line-height:29px;color:#44e088;white-space:nowrap">2-08</div>
<div style="left:2090px;top:1010px;width:113px;height:28px;text-align:center;font-size:20px;line-height:29px;color:#88b0f0;white-space:nowrap">8-11</div>
<div style="left:2204px;top:1010px;width:113px;height:28px;text-align:center;font-size:20px;line-height:29px;color:#a0a0f2;white-space:nowrap">4.57</div>
<div style="left:2318px;top:1010px;width:113px;height:28px;text-align:center;font-size:20px;line-height:29px;color:#88b0f0;white-space:nowrap">7.33</div>
<svg width="129.0" height="32.0" style="left:2433.70px;top:1008.20px;overflow:visible"><text x="4" y="23.00" font-family="Liberation Sans, sans-serif" font-size="20" font-weight="normal" fill="#ececec" textLength="109.00" lengthAdjust="spacingAndGlyphs">Washington</text></svg>
<div style="left:0;top:1038px;width:2846px;height:28px;background:#17181c"></div>
<div style="left:1178px;top:1038px;width:113px;height:28px;background:#101011"></div>
<div style="left:1291px;top:1038px;width:229px;height:28px;background:#0d161e"></div>
<div style="left:0;top:1038px;width:13px;height:28px;background:linear-gradient(90deg,#e27236,#b85a2e)"></div>
<div style="left:381px;top:1038px;width:113px;height:28px;background:linear-gradient(90deg,#e3723a 0%,#d26a36 30%,#a8562f 80%,#9e522c 100%)"></div>
<div style="left:494px;top:1038px;width:113px;height:28px;background:linear-gradient(90deg,#e3723a 0%,#d26a36 30%,#a8562f 80%,#9e522c 100%)"></div>
<div style="left:379px;top:1038px;width:2px;height:28px;background:#2a0e04"></div>
<div style="left:1294px;top:1040px;width:72px;height:24px;background:linear-gradient(90deg,#e5763a 0%,#b88068 35%,#7c8c98 70%,#5a7c94 100%);color:#f4f4f4;font-size:20px;line-height:24px;text-align:center">r</div>
<div style="left:1370px;top:1040px;width:72px;height:24px;background:linear-gradient(90deg,#5eb0dc 0%,#55a0cc 40%,#4a88b0 100%);color:#f4f4f4;font-size:20px;line-height:24px;text-align:center">i</div>
<div style="left:1446px;top:1040px;width:72px;height:24px;background:linear-gradient(90deg,#72a04c 0%,#5e9068 50%,#4a8098 100%);color:#f4f4f4;font-size:20px;line-height:24px;text-align:center">c</div>
<div style="left:17.5px;top:1038px;font-size:20px;line-height:29px;color:#ececec;white-space:nowrap">Mitchell Hubbard</div>
<div style="left:381px;top:1038px;width:112px;height:28px;text-align:center;font-size:20px;line-height:29px;color:#fcefe4;white-space:nowrap">QB</div>
<div style="left:495px;top:1038px;width:112px;height:28px;text-align:center;font-size:20px;line-height:29px;color:#fcefe4;white-space:nowrap">QB</div>
<div style="left:608px;top:1038px;width:151px;height:28px;text-align:center;font-size:20px;line-height:29px;color:#ececec;white-space:nowrap">6027</div>
<div style="left:760px;top:1038px;width:151px;height:28px;text-align:center;font-size:20px;line-height:29px;color:#ececec;white-space:nowrap">9 7/8&quot;</div>
<div style="left:912px;top:1038px;width:151px;height:28px;text-align:center;font-size:20px;line-height:29px;color:#ececec;white-space:nowrap">32 4/8&quot;</div>
<div style="left:1064px;top:1038px;width:113px;height:28px;text-align:center;font-size:20px;line-height:29px;color:#ececec;white-space:nowrap">215</div>
<div style="left:1178px;top:1038px;width:113px;height:28px;text-align:center;font-size:20px;line-height:29px;color:#ececec;white-space:nowrap">2.9</div>
<div style="left:1520px;top:1038px;width:113px;height:28px;text-align:center;font-size:20px;line-height:29px;color:#44e088;white-space:nowrap">4.91</div>
<div style="left:1634px;top:1038px;width:113px;height:28px;text-align:center;font-size:20px;line-height:29px;color:#a0a0f2;white-space:nowrap">1.75</div>
<div style="left:1748px;top:1038px;width:113px;height:28px;text-align:center;font-size:20px;line-height:29px;color:#88b0f0;white-space:nowrap">19</div>
<div style="left:1862px;top:1038px;width:113px;height:28px;text-align:center;font-size:20px;line-height:29px;color:#88b0f0;white-space:nowrap">9</div>
<div style="left:1976px;top:1038px;width:113px;height:28px;text-align:center;font-size:20px;line-height:29px;color:#a0a0f2;white-space:nowrap">2-03</div>
<div style="left:2090px;top:1038px;width:113px;height:28px;text-align:center;font-size:20px;line-height:29px;color:#44e088;white-space:nowrap">9-05</div>
<div style="left:2204px;top:1038px;width:113px;height:28px;text-align:center;font-size:20px;line-height:29px;color:#44d8f0;white-space:nowrap">4.35</div>
<div style="left:2318px;top:1038px;width:113px;height:28px;text-align:center;font-size:20px;line-height:29px;color:#88b0f0;white-space:nowrap">7.19</div>
<div style="left:2438px;top:1038px;font-size:20px;line-height:29px;color:#ececec;white-space:nowrap">Boston College</div>
</div>
<div style="left:5px;top:1522px;width:2874px;height:2px;background:#f4f4f4;"></div>
<svg width="296.3" height="31.2" style="left:1297.62px;top:1551.58px;overflow:visible"><text x="4" y="22.42" font-family="Liberation Sans, sans-serif" font-size="19.5" font-weight="normal" fill="#ececec" textLength="276.26" lengthAdjust="spacingAndGlyphs">Your Next Pick: Round 2, Pick 2</text></svg>
<svg width="371.5" height="31.2" style="left:1260.92px;top:1609.78px;overflow:visible"><text x="4" y="22.42" font-family="Liberation Sans, sans-serif" font-size="19.5" font-weight="normal" fill="#ececec" textLength="351.46" lengthAdjust="spacingAndGlyphs">Last Pick: WR Alec Pimentel, Green Bay</text></svg>
<div style="left:3px;top:1663px;width:2876px;height:3px;background:#f0f0f0;"></div>
<div style="left:1148px;top:545px;width:650px;height:345px;background:#222329;"></div>
<svg width="245.0" height="30.1" style="left:1356.45px;top:562.28px;overflow:visible"><text x="4" y="21.62" font-family="Liberation Sans, sans-serif" font-size="18.8" font-weight="normal" fill="#f4f4f4" textLength="225.00" lengthAdjust="spacingAndGlyphs">QB - SOLOMON DOTSON</text></svg>
<svg width="174.0" height="25.3" style="left:1391.97px;top:608.83px;overflow:visible"><text x="4" y="18.17" font-family="Liberation Sans, sans-serif" font-size="15.8" font-weight="normal" fill="#ececec" textLength="153.96" lengthAdjust="spacingAndGlyphs">Combine Assessment</text></svg>
<div style="left:1158px;top:643px;width:630px;height:238px;border-left:2px solid #a0a0a0;border-right:3px solid #f4f4f4;"></div>
<div style="left:1160px;top:644px;width:626px;height:26px;background:#1f1f1f;border-top:1px solid #9a9a9a;border-bottom:2px solid #f4f4f4;"></div>
<div style="left:1373px;top:644px;width:2px;height:25px;background:#f0f0f0;"></div>
<div style="left:1495px;top:644px;width:2px;height:25px;background:#f0f0f0;"></div>
<svg width="99.5" height="24.5" style="left:1163.59px;top:645.30px;overflow:visible"><text x="4" y="17.59" font-family="Liberation Sans, sans-serif" font-size="15.3" font-weight="normal" fill="#f4f4f4" textLength="79.52" lengthAdjust="spacingAndGlyphs">CATEGORY</text></svg>
<svg width="68.7" height="24.5" style="left:1406.89px;top:645.30px;overflow:visible"><text x="4" y="17.59" font-family="Liberation Sans, sans-serif" font-size="15.3" font-weight="normal" fill="#f4f4f4" textLength="48.72" lengthAdjust="spacingAndGlyphs">SCORE</text></svg>
<svg width="110.2" height="24.5" style="left:1500.59px;top:645.30px;overflow:visible"><text x="4" y="17.59" font-family="Liberation Sans, sans-serif" font-size="15.3" font-weight="normal" fill="#f4f4f4" textLength="90.22" lengthAdjust="spacingAndGlyphs">PERCENTILE</text></svg>
<div style="left:1160px;top:670px;width:626px;height:23px;background:#222329;"></div>
<div style="left:1160px;top:670px;width:13px;height:23px;background:#6a9ac8;"></div>
<svg width="72.3" height="25.8" style="left:1174.66px;top:668.99px;overflow:visible"><text x="4" y="18.52" font-family="Liberation Sans, sans-serif" font-size="16.1" font-weight="normal" fill="#ececec" textLength="52.29" lengthAdjust="spacingAndGlyphs">Overall</text></svg>
<div style="left:1375px;top:671px;width:120px;text-align:center;font-size:16.1px;line-height:22px;color:#ececec;white-space:nowrap;">57</div>
<svg width="282" height="19" style="left:1501.5px;top:672.5px"><defs><linearGradient id="g0" x1="0" y1="0" x2="0" y2="1"><stop offset="0" stop-color="#fff" stop-opacity="0.35"/><stop offset="0.18" stop-color="#fff" stop-opacity="0.12"/><stop offset="0.45" stop-color="#000" stop-opacity="0.02"/><stop offset="0.68" stop-color="#000" stop-opacity="0.18"/><stop offset="0.72" stop-color="#fff" stop-opacity="0.02"/><stop offset="0.9" stop-color="#fff" stop-opacity="0.12"/><stop offset="1" stop-color="#fff" stop-opacity="0.55"/></linearGradient><clipPath id="cp0"><rect x="0" y="0" width="277" height="18.5" rx="4.5"/></clipPath></defs><g clip-path="url(#cp0)"><rect x="0.0" y="0" width="28.0" height="19" fill="#40b8e8"/><rect x="27.7" y="0" width="28.0" height="19" fill="#40b8e8"/><rect x="55.4" y="0" width="28.0" height="19" fill="#40b8e8"/><rect x="83.1" y="0" width="28.0" height="19" fill="#40b8e8"/><rect x="110.8" y="0" width="28.0" height="19" fill="#40b8e8"/><rect x="138.5" y="0" width="28.0" height="19" fill="#6e6664"/><rect x="166.2" y="0" width="28.0" height="19" fill="#6e6664"/><rect x="193.9" y="0" width="28.0" height="19" fill="#6e6664"/><rect x="221.6" y="0" width="28.0" height="19" fill="#6e6664"/><rect x="249.3" y="0" width="28.0" height="19" fill="#6e6664"/><line x1="27.7" y1="2.5" x2="27.7" y2="16.5" stroke="#10202a" stroke-width="1.3"/><line x1="55.4" y1="2.5" x2="55.4" y2="16.5" stroke="#10202a" stroke-width="1.3"/><line x1="83.1" y1="2.5" x2="83.1" y2="16.5" stroke="#10202a" stroke-width="1.3"/><line x1="110.8" y1="2.5" x2="110.8" y2="16.5" stroke="#10202a" stroke-width="1.3"/><line x1="138.5" y1="2.5" x2="138.5" y2="16.5" stroke="#10202a" stroke-width="1.3"/><line x1="166.2" y1="2.5" x2="166.2" y2="16.5" stroke="#10202a" stroke-width="1.3"/><line x1="193.9" y1="2.5" x2="193.9" y2="16.5" stroke="#10202a" stroke-width="1.3"/><line x1="221.6" y1="2.5" x2="221.6" y2="16.5" stroke="#10202a" stroke-width="1.3"/><line x1="249.3" y1="2.5" x2="249.3" y2="16.5" stroke="#10202a" stroke-width="1.3"/><rect x="0" y="0" width="277" height="19" fill="url(#g0)"/></g></svg>
<div style="left:1160px;top:693px;width:626px;height:23px;background:#17181c;"></div>
<div style="left:1160px;top:693px;width:13px;height:23px;background:#6a9a48;"></div>
<svg width="115.4" height="25.8" style="left:1174.66px;top:691.99px;overflow:visible"><text x="4" y="18.52" font-family="Liberation Sans, sans-serif" font-size="16.1" font-weight="normal" fill="#ececec" textLength="95.39" lengthAdjust="spacingAndGlyphs">40-Yard Dash</text></svg>
<div style="left:1375px;top:694px;width:120px;text-align:center;font-size:16.1px;line-height:22px;color:#ececec;white-space:nowrap;">4.72</div>
<svg width="282" height="19" style="left:1501.5px;top:695.5px"><defs><linearGradient id="g1" x1="0" y1="0" x2="0" y2="1"><stop offset="0" stop-color="#fff" stop-opacity="0.35"/><stop offset="0.18" stop-color="#fff" stop-opacity="0.12"/><stop offset="0.45" stop-color="#000" stop-opacity="0.02"/><stop offset="0.68" stop-color="#000" stop-opacity="0.18"/><stop offset="0.72" stop-color="#fff" stop-opacity="0.02"/><stop offset="0.9" stop-color="#fff" stop-opacity="0.12"/><stop offset="1" stop-color="#fff" stop-opacity="0.55"/></linearGradient><clipPath id="cp1"><rect x="0" y="0" width="277" height="18.5" rx="4.5"/></clipPath></defs><g clip-path="url(#cp1)"><rect x="0.0" y="0" width="28.0" height="19" fill="#6c9e48"/><rect x="27.7" y="0" width="28.0" height="19" fill="#6c9e48"/><rect x="55.4" y="0" width="28.0" height="19" fill="#6c9e48"/><rect x="83.1" y="0" width="28.0" height="19" fill="#6c9e48"/><rect x="110.8" y="0" width="28.0" height="19" fill="#6c9e48"/><rect x="138.5" y="0" width="28.0" height="19" fill="#6c9e48"/><rect x="166.2" y="0" width="28.0" height="19" fill="#6e6664"/><rect x="193.9" y="0" width="28.0" height="19" fill="#6e6664"/><rect x="221.6" y="0" width="28.0" height="19" fill="#6e6664"/><rect x="249.3" y="0" width="28.0" height="19" fill="#6e6664"/><line x1="27.7" y1="2.5" x2="27.7" y2="16.5" stroke="#10202a" stroke-width="1.3"/><line x1="55.4" y1="2.5" x2="55.4" y2="16.5" stroke="#10202a" stroke-width="1.3"/><line x1="83.1" y1="2.5" x2="83.1" y2="16.5" stroke="#10202a" stroke-width="1.3"/><line x1="110.8" y1="2.5" x2="110.8" y2="16.5" stroke="#10202a" stroke-width="1.3"/><line x1="138.5" y1="2.5" x2="138.5" y2="16.5" stroke="#10202a" stroke-width="1.3"/><line x1="166.2" y1="2.5" x2="166.2" y2="16.5" stroke="#10202a" stroke-width="1.3"/><line x1="193.9" y1="2.5" x2="193.9" y2="16.5" stroke="#10202a" stroke-width="1.3"/><line x1="221.6" y1="2.5" x2="221.6" y2="16.5" stroke="#10202a" stroke-width="1.3"/><line x1="249.3" y1="2.5" x2="249.3" y2="16.5" stroke="#10202a" stroke-width="1.3"/><rect x="0" y="0" width="277" height="19" fill="url(#g1)"/></g></svg>
<div style="left:1160px;top:716px;width:626px;height:23px;background:#222329;"></div>
<div style="left:1160px;top:716px;width:13px;height:23px;background:#6a9a48;"></div>
<svg width="110.3" height="25.8" style="left:1174.66px;top:714.99px;overflow:visible"><text x="4" y="18.52" font-family="Liberation Sans, sans-serif" font-size="16.1" font-weight="normal" fill="#ececec" textLength="90.29" lengthAdjust="spacingAndGlyphs">10-Yard Split</text></svg>
<div style="left:1375px;top:717px;width:120px;text-align:center;font-size:16.1px;line-height:22px;color:#ececec;white-space:nowrap;">1.69</div>
<svg width="282" height="19" style="left:1501.5px;top:718.5px"><defs><linearGradient id="g2" x1="0" y1="0" x2="0" y2="1"><stop offset="0" stop-color="#fff" stop-opacity="0.35"/><stop offset="0.18" stop-color="#fff" stop-opacity="0.12"/><stop offset="0.45" stop-color="#000" stop-opacity="0.02"/><stop offset="0.68" stop-color="#000" stop-opacity="0.18"/><stop offset="0.72" stop-color="#fff" stop-opacity="0.02"/><stop offset="0.9" stop-color="#fff" stop-opacity="0.12"/><stop offset="1" stop-color="#fff" stop-opacity="0.55"/></linearGradient><clipPath id="cp2"><rect x="0" y="0" width="277" height="18.5" rx="4.5"/></clipPath></defs><g clip-path="url(#cp2)"><rect x="0.0" y="0" width="28.0" height="19" fill="#3a6cb8"/><rect x="27.7" y="0" width="28.0" height="19" fill="#3a6cb8"/><rect x="55.4" y="0" width="28.0" height="19" fill="#3a6cb8"/><rect x="83.1" y="0" width="28.0" height="19" fill="#6e6664"/><rect x="110.8" y="0" width="28.0" height="19" fill="#6e6664"/><rect x="138.5" y="0" width="28.0" height="19" fill="#6e6664"/><rect x="166.2" y="0" width="28.0" height="19" fill="#6e6664"/><rect x="193.9" y="0" width="28.0" height="19" fill="#6e6664"/><rect x="221.6" y="0" width="28.0" height="19" fill="#6e6664"/><rect x="249.3" y="0" width="28.0" height="19" fill="#6e6664"/><line x1="27.7" y1="2.5" x2="27.7" y2="16.5" stroke="#10202a" stroke-width="1.3"/><line x1="55.4" y1="2.5" x2="55.4" y2="16.5" stroke="#10202a" stroke-width="1.3"/><line x1="83.1" y1="2.5" x2="83.1" y2="16.5" stroke="#10202a" stroke-width="1.3"/><line x1="110.8" y1="2.5" x2="110.8" y2="16.5" stroke="#10202a" stroke-width="1.3"/><line x1="138.5" y1="2.5" x2="138.5" y2="16.5" stroke="#10202a" stroke-width="1.3"/><line x1="166.2" y1="2.5" x2="166.2" y2="16.5" stroke="#10202a" stroke-width="1.3"/><line x1="193.9" y1="2.5" x2="193.9" y2="16.5" stroke="#10202a" stroke-width="1.3"/><line x1="221.6" y1="2.5" x2="221.6" y2="16.5" stroke="#10202a" stroke-width="1.3"/><line x1="249.3" y1="2.5" x2="249.3" y2="16.5" stroke="#10202a" stroke-width="1.3"/><rect x="0" y="0" width="277" height="19" fill="url(#g2)"/></g></svg>
<div style="left:1160px;top:739px;width:626px;height:23px;background:#17181c;"></div>
<div style="left:1160px;top:739px;width:13px;height:23px;background:#6a9a48;"></div>
<svg width="129.5" height="25.8" style="left:1174.66px;top:737.99px;overflow:visible"><text x="4" y="18.52" font-family="Liberation Sans, sans-serif" font-size="16.1" font-weight="normal" fill="#ececec" textLength="109.49" lengthAdjust="spacingAndGlyphs">Solecismic Test</text></svg>
<div style="left:1375px;top:740px;width:120px;text-align:center;font-size:16.1px;line-height:22px;color:#ececec;white-space:nowrap;">41</div>
<svg width="282" height="19" style="left:1501.5px;top:741.5px"><defs><linearGradient id="g3" x1="0" y1="0" x2="0" y2="1"><stop offset="0" stop-color="#fff" stop-opacity="0.35"/><stop offset="0.18" stop-color="#fff" stop-opacity="0.12"/><stop offset="0.45" stop-color="#000" stop-opacity="0.02"/><stop offset="0.68" stop-color="#000" stop-opacity="0.18"/><stop offset="0.72" stop-color="#fff" stop-opacity="0.02"/><stop offset="0.9" stop-color="#fff" stop-opacity="0.12"/><stop offset="1" stop-color="#fff" stop-opacity="0.55"/></linearGradient><clipPath id="cp3"><rect x="0" y="0" width="277" height="18.5" rx="4.5"/></clipPath></defs><g clip-path="url(#cp3)"><rect x="0.0" y="0" width="28.0" height="19" fill="#f0b038"/><rect x="27.7" y="0" width="28.0" height="19" fill="#f0b038"/><rect x="55.4" y="0" width="28.0" height="19" fill="#f0b038"/><rect x="83.1" y="0" width="28.0" height="19" fill="#f0b038"/><rect x="110.8" y="0" width="28.0" height="19" fill="#f0b038"/><rect x="138.5" y="0" width="28.0" height="19" fill="#f0b038"/><rect x="166.2" y="0" width="28.0" height="19" fill="#f0b038"/><rect x="193.9" y="0" width="28.0" height="19" fill="#6e6664"/><rect x="221.6" y="0" width="28.0" height="19" fill="#6e6664"/><rect x="249.3" y="0" width="28.0" height="19" fill="#6e6664"/><line x1="27.7" y1="2.5" x2="27.7" y2="16.5" stroke="#10202a" stroke-width="1.3"/><line x1="55.4" y1="2.5" x2="55.4" y2="16.5" stroke="#10202a" stroke-width="1.3"/><line x1="83.1" y1="2.5" x2="83.1" y2="16.5" stroke="#10202a" stroke-width="1.3"/><line x1="110.8" y1="2.5" x2="110.8" y2="16.5" stroke="#10202a" stroke-width="1.3"/><line x1="138.5" y1="2.5" x2="138.5" y2="16.5" stroke="#10202a" stroke-width="1.3"/><line x1="166.2" y1="2.5" x2="166.2" y2="16.5" stroke="#10202a" stroke-width="1.3"/><line x1="193.9" y1="2.5" x2="193.9" y2="16.5" stroke="#10202a" stroke-width="1.3"/><line x1="221.6" y1="2.5" x2="221.6" y2="16.5" stroke="#10202a" stroke-width="1.3"/><line x1="249.3" y1="2.5" x2="249.3" y2="16.5" stroke="#10202a" stroke-width="1.3"/><rect x="0" y="0" width="277" height="19" fill="url(#g3)"/></g></svg>
<div style="left:1160px;top:762px;width:626px;height:23px;background:#222329;"></div>
<div style="left:1160px;top:762px;width:13px;height:23px;background:#6a9a48;"></div>
<svg width="107.7" height="25.8" style="left:1174.66px;top:760.99px;overflow:visible"><text x="4" y="18.52" font-family="Liberation Sans, sans-serif" font-size="16.1" font-weight="normal" fill="#ececec" textLength="87.69" lengthAdjust="spacingAndGlyphs">Bench Press</text></svg>
<div style="left:1375px;top:763px;width:120px;text-align:center;font-size:16.1px;line-height:22px;color:#ececec;white-space:nowrap;">8</div>
<svg width="282" height="19" style="left:1501.5px;top:764.5px"><defs><linearGradient id="g4" x1="0" y1="0" x2="0" y2="1"><stop offset="0" stop-color="#fff" stop-opacity="0.35"/><stop offset="0.18" stop-color="#fff" stop-opacity="0.12"/><stop offset="0.45" stop-color="#000" stop-opacity="0.02"/><stop offset="0.68" stop-color="#000" stop-opacity="0.18"/><stop offset="0.72" stop-color="#fff" stop-opacity="0.02"/><stop offset="0.9" stop-color="#fff" stop-opacity="0.12"/><stop offset="1" stop-color="#fff" stop-opacity="0.55"/></linearGradient><clipPath id="cp4"><rect x="0" y="0" width="277" height="18.5" rx="4.5"/></clipPath></defs><g clip-path="url(#cp4)"><rect x="0.0" y="0" width="28.0" height="19" fill="#8c3ca8"/><rect x="27.7" y="0" width="28.0" height="19" fill="#8c3ca8"/><rect x="55.4" y="0" width="28.0" height="19" fill="#6e6664"/><rect x="83.1" y="0" width="28.0" height="19" fill="#6e6664"/><rect x="110.8" y="0" width="28.0" height="19" fill="#6e6664"/><rect x="138.5" y="0" width="28.0" height="19" fill="#6e6664"/><rect x="166.2" y="0" width="28.0" height="19" fill="#6e6664"/><rect x="193.9" y="0" width="28.0" height="19" fill="#6e6664"/><rect x="221.6" y="0" width="28.0" height="19" fill="#6e6664"/><rect x="249.3" y="0" width="28.0" height="19" fill="#6e6664"/><line x1="27.7" y1="2.5" x2="27.7" y2="16.5" stroke="#10202a" stroke-width="1.3"/><line x1="55.4" y1="2.5" x2="55.4" y2="16.5" stroke="#10202a" stroke-width="1.3"/><line x1="83.1" y1="2.5" x2="83.1" y2="16.5" stroke="#10202a" stroke-width="1.3"/><line x1="110.8" y1="2.5" x2="110.8" y2="16.5" stroke="#10202a" stroke-width="1.3"/><line x1="138.5" y1="2.5" x2="138.5" y2="16.5" stroke="#10202a" stroke-width="1.3"/><line x1="166.2" y1="2.5" x2="166.2" y2="16.5" stroke="#10202a" stroke-width="1.3"/><line x1="193.9" y1="2.5" x2="193.9" y2="16.5" stroke="#10202a" stroke-width="1.3"/><line x1="221.6" y1="2.5" x2="221.6" y2="16.5" stroke="#10202a" stroke-width="1.3"/><line x1="249.3" y1="2.5" x2="249.3" y2="16.5" stroke="#10202a" stroke-width="1.3"/><rect x="0" y="0" width="277" height="19" fill="url(#g4)"/></g></svg>
<div style="left:1160px;top:785px;width:626px;height:23px;background:#17181c;"></div>
<div style="left:1160px;top:785px;width:13px;height:23px;background:#6a9a48;"></div>
<svg width="114.7" height="25.8" style="left:1174.66px;top:783.99px;overflow:visible"><text x="4" y="18.52" font-family="Liberation Sans, sans-serif" font-size="16.1" font-weight="normal" fill="#ececec" textLength="94.69" lengthAdjust="spacingAndGlyphs">Vertical Leap</text></svg>
<div style="left:1375px;top:786px;width:120px;text-align:center;font-size:16.1px;line-height:22px;color:#ececec;white-space:nowrap;">2-03</div>
<svg width="282" height="19" style="left:1501.5px;top:787.5px"><defs><linearGradient id="g5" x1="0" y1="0" x2="0" y2="1"><stop offset="0" stop-color="#fff" stop-opacity="0.35"/><stop offset="0.18" stop-color="#fff" stop-opacity="0.12"/><stop offset="0.45" stop-color="#000" stop-opacity="0.02"/><stop offset="0.68" stop-color="#000" stop-opacity="0.18"/><stop offset="0.72" stop-color="#fff" stop-opacity="0.02"/><stop offset="0.9" stop-color="#fff" stop-opacity="0.12"/><stop offset="1" stop-color="#fff" stop-opacity="0.55"/></linearGradient><clipPath id="cp5"><rect x="0" y="0" width="277" height="18.5" rx="4.5"/></clipPath></defs><g clip-path="url(#cp5)"><rect x="0.0" y="0" width="28.0" height="19" fill="#8c3ca8"/><rect x="27.7" y="0" width="28.0" height="19" fill="#8c3ca8"/><rect x="55.4" y="0" width="28.0" height="19" fill="#6e6664"/><rect x="83.1" y="0" width="28.0" height="19" fill="#6e6664"/><rect x="110.8" y="0" width="28.0" height="19" fill="#6e6664"/><rect x="138.5" y="0" width="28.0" height="19" fill="#6e6664"/><rect x="166.2" y="0" width="28.0" height="19" fill="#6e6664"/><rect x="193.9" y="0" width="28.0" height="19" fill="#6e6664"/><rect x="221.6" y="0" width="28.0" height="19" fill="#6e6664"/><rect x="249.3" y="0" width="28.0" height="19" fill="#6e6664"/><line x1="27.7" y1="2.5" x2="27.7" y2="16.5" stroke="#10202a" stroke-width="1.3"/><line x1="55.4" y1="2.5" x2="55.4" y2="16.5" stroke="#10202a" stroke-width="1.3"/><line x1="83.1" y1="2.5" x2="83.1" y2="16.5" stroke="#10202a" stroke-width="1.3"/><line x1="110.8" y1="2.5" x2="110.8" y2="16.5" stroke="#10202a" stroke-width="1.3"/><line x1="138.5" y1="2.5" x2="138.5" y2="16.5" stroke="#10202a" stroke-width="1.3"/><line x1="166.2" y1="2.5" x2="166.2" y2="16.5" stroke="#10202a" stroke-width="1.3"/><line x1="193.9" y1="2.5" x2="193.9" y2="16.5" stroke="#10202a" stroke-width="1.3"/><line x1="221.6" y1="2.5" x2="221.6" y2="16.5" stroke="#10202a" stroke-width="1.3"/><line x1="249.3" y1="2.5" x2="249.3" y2="16.5" stroke="#10202a" stroke-width="1.3"/><rect x="0" y="0" width="277" height="19" fill="url(#g5)"/></g></svg>
<div style="left:1160px;top:808px;width:626px;height:23px;background:#222329;"></div>
<div style="left:1160px;top:808px;width:13px;height:23px;background:#6a9a48;"></div>
<svg width="107.0" height="25.8" style="left:1174.66px;top:806.99px;overflow:visible"><text x="4" y="18.52" font-family="Liberation Sans, sans-serif" font-size="16.1" font-weight="normal" fill="#ececec" textLength="86.99" lengthAdjust="spacingAndGlyphs">Broad Jump</text></svg>
<div style="left:1375px;top:809px;width:120px;text-align:center;font-size:16.1px;line-height:22px;color:#ececec;white-space:nowrap;">9-09</div>
<svg width="282" height="19" style="left:1501.5px;top:810.5px"><defs><linearGradient id="g6" x1="0" y1="0" x2="0" y2="1"><stop offset="0" stop-color="#fff" stop-opacity="0.35"/><stop offset="0.18" stop-color="#fff" stop-opacity="0.12"/><stop offset="0.45" stop-color="#000" stop-opacity="0.02"/><stop offset="0.68" stop-color="#000" stop-opacity="0.18"/><stop offset="0.72" stop-color="#fff" stop-opacity="0.02"/><stop offset="0.9" stop-color="#fff" stop-opacity="0.12"/><stop offset="1" stop-color="#fff" stop-opacity="0.55"/></linearGradient><clipPath id="cp6"><rect x="0" y="0" width="277" height="18.5" rx="4.5"/></clipPath></defs><g clip-path="url(#cp6)"><rect x="0.0" y="0" width="28.0" height="19" fill="#6c9e48"/><rect x="27.7" y="0" width="28.0" height="19" fill="#6c9e48"/><rect x="55.4" y="0" width="28.0" height="19" fill="#6c9e48"/><rect x="83.1" y="0" width="28.0" height="19" fill="#6c9e48"/><rect x="110.8" y="0" width="28.0" height="19" fill="#6c9e48"/><rect x="138.5" y="0" width="28.0" height="19" fill="#6c9e48"/><rect x="166.2" y="0" width="28.0" height="19" fill="#6e6664"/><rect x="193.9" y="0" width="28.0" height="19" fill="#6e6664"/><rect x="221.6" y="0" width="28.0" height="19" fill="#6e6664"/><rect x="249.3" y="0" width="28.0" height="19" fill="#6e6664"/><line x1="27.7" y1="2.5" x2="27.7" y2="16.5" stroke="#10202a" stroke-width="1.3"/><line x1="55.4" y1="2.5" x2="55.4" y2="16.5" stroke="#10202a" stroke-width="1.3"/><line x1="83.1" y1="2.5" x2="83.1" y2="16.5" stroke="#10202a" stroke-width="1.3"/><line x1="110.8" y1="2.5" x2="110.8" y2="16.5" stroke="#10202a" stroke-width="1.3"/><line x1="138.5" y1="2.5" x2="138.5" y2="16.5" stroke="#10202a" stroke-width="1.3"/><line x1="166.2" y1="2.5" x2="166.2" y2="16.5" stroke="#10202a" stroke-width="1.3"/><line x1="193.9" y1="2.5" x2="193.9" y2="16.5" stroke="#10202a" stroke-width="1.3"/><line x1="221.6" y1="2.5" x2="221.6" y2="16.5" stroke="#10202a" stroke-width="1.3"/><line x1="249.3" y1="2.5" x2="249.3" y2="16.5" stroke="#10202a" stroke-width="1.3"/><rect x="0" y="0" width="277" height="19" fill="url(#g6)"/></g></svg>
<div style="left:1160px;top:831px;width:626px;height:23px;background:#17181c;"></div>
<div style="left:1160px;top:831px;width:13px;height:23px;background:#6a9a48;"></div>
<svg width="103.9" height="25.8" style="left:1174.66px;top:829.99px;overflow:visible"><text x="4" y="18.52" font-family="Liberation Sans, sans-serif" font-size="16.1" font-weight="normal" fill="#ececec" textLength="83.89" lengthAdjust="spacingAndGlyphs">Shuttle Drill</text></svg>
<div style="left:1375px;top:832px;width:120px;text-align:center;font-size:16.1px;line-height:22px;color:#ececec;white-space:nowrap;">4.29</div>
<svg width="282" height="19" style="left:1501.5px;top:833.5px"><defs><linearGradient id="g7" x1="0" y1="0" x2="0" y2="1"><stop offset="0" stop-color="#fff" stop-opacity="0.35"/><stop offset="0.18" stop-color="#fff" stop-opacity="0.12"/><stop offset="0.45" stop-color="#000" stop-opacity="0.02"/><stop offset="0.68" stop-color="#000" stop-opacity="0.18"/><stop offset="0.72" stop-color="#fff" stop-opacity="0.02"/><stop offset="0.9" stop-color="#fff" stop-opacity="0.12"/><stop offset="1" stop-color="#fff" stop-opacity="0.55"/></linearGradient><clipPath id="cp7"><rect x="0" y="0" width="277" height="18.5" rx="4.5"/></clipPath></defs><g clip-path="url(#cp7)"><rect x="0.0" y="0" width="28.0" height="19" fill="#40b8e8"/><rect x="27.7" y="0" width="28.0" height="19" fill="#40b8e8"/><rect x="55.4" y="0" width="28.0" height="19" fill="#40b8e8"/><rect x="83.1" y="0" width="28.0" height="19" fill="#40b8e8"/><rect x="110.8" y="0" width="28.0" height="19" fill="#40b8e8"/><rect x="138.5" y="0" width="28.0" height="19" fill="#6e6664"/><rect x="166.2" y="0" width="28.0" height="19" fill="#6e6664"/><rect x="193.9" y="0" width="28.0" height="19" fill="#6e6664"/><rect x="221.6" y="0" width="28.0" height="19" fill="#6e6664"/><rect x="249.3" y="0" width="28.0" height="19" fill="#6e6664"/><line x1="27.7" y1="2.5" x2="27.7" y2="16.5" stroke="#10202a" stroke-width="1.3"/><line x1="55.4" y1="2.5" x2="55.4" y2="16.5" stroke="#10202a" stroke-width="1.3"/><line x1="83.1" y1="2.5" x2="83.1" y2="16.5" stroke="#10202a" stroke-width="1.3"/><line x1="110.8" y1="2.5" x2="110.8" y2="16.5" stroke="#10202a" stroke-width="1.3"/><line x1="138.5" y1="2.5" x2="138.5" y2="16.5" stroke="#10202a" stroke-width="1.3"/><line x1="166.2" y1="2.5" x2="166.2" y2="16.5" stroke="#10202a" stroke-width="1.3"/><line x1="193.9" y1="2.5" x2="193.9" y2="16.5" stroke="#10202a" stroke-width="1.3"/><line x1="221.6" y1="2.5" x2="221.6" y2="16.5" stroke="#10202a" stroke-width="1.3"/><line x1="249.3" y1="2.5" x2="249.3" y2="16.5" stroke="#10202a" stroke-width="1.3"/><rect x="0" y="0" width="277" height="19" fill="url(#g7)"/></g></svg>
<div style="left:1160px;top:854px;width:626px;height:23px;background:#222329;"></div>
<div style="left:1160px;top:854px;width:13px;height:23px;background:#6a9a48;"></div>
<svg width="139.8" height="25.8" style="left:1174.66px;top:852.99px;overflow:visible"><text x="4" y="18.52" font-family="Liberation Sans, sans-serif" font-size="16.1" font-weight="normal" fill="#ececec" textLength="119.79" lengthAdjust="spacingAndGlyphs">Three-Cone Drill</text></svg>
<div style="left:1375px;top:855px;width:120px;text-align:center;font-size:16.1px;line-height:22px;color:#ececec;white-space:nowrap;">7.65</div>
<svg width="282" height="19" style="left:1501.5px;top:856.5px"><defs><linearGradient id="g8" x1="0" y1="0" x2="0" y2="1"><stop offset="0" stop-color="#fff" stop-opacity="0.35"/><stop offset="0.18" stop-color="#fff" stop-opacity="0.12"/><stop offset="0.45" stop-color="#000" stop-opacity="0.02"/><stop offset="0.68" stop-color="#000" stop-opacity="0.18"/><stop offset="0.72" stop-color="#fff" stop-opacity="0.02"/><stop offset="0.9" stop-color="#fff" stop-opacity="0.12"/><stop offset="1" stop-color="#fff" stop-opacity="0.55"/></linearGradient><clipPath id="cp8"><rect x="0" y="0" width="277" height="18.5" rx="4.5"/></clipPath></defs><g clip-path="url(#cp8)"><rect x="0.0" y="0" width="28.0" height="19" fill="#c07098"/><rect x="27.7" y="0" width="28.0" height="19" fill="#6e6664"/><rect x="55.4" y="0" width="28.0" height="19" fill="#6e6664"/><rect x="83.1" y="0" width="28.0" height="19" fill="#6e6664"/><rect x="110.8" y="0" width="28.0" height="19" fill="#6e6664"/><rect x="138.5" y="0" width="28.0" height="19" fill="#6e6664"/><rect x="166.2" y="0" width="28.0" height="19" fill="#6e6664"/><rect x="193.9" y="0" width="28.0" height="19" fill="#6e6664"/><rect x="221.6" y="0" width="28.0" height="19" fill="#6e6664"/><rect x="249.3" y="0" width="28.0" height="19" fill="#6e6664"/><line x1="27.7" y1="2.5" x2="27.7" y2="16.5" stroke="#10202a" stroke-width="1.3"/><line x1="55.4" y1="2.5" x2="55.4" y2="16.5" stroke="#10202a" stroke-width="1.3"/><line x1="83.1" y1="2.5" x2="83.1" y2="16.5" stroke="#10202a" stroke-width="1.3"/><line x1="110.8" y1="2.5" x2="110.8" y2="16.5" stroke="#10202a" stroke-width="1.3"/><line x1="138.5" y1="2.5" x2="138.5" y2="16.5" stroke="#10202a" stroke-width="1.3"/><line x1="166.2" y1="2.5" x2="166.2" y2="16.5" stroke="#10202a" stroke-width="1.3"/><line x1="193.9" y1="2.5" x2="193.9" y2="16.5" stroke="#10202a" stroke-width="1.3"/><line x1="221.6" y1="2.5" x2="221.6" y2="16.5" stroke="#10202a" stroke-width="1.3"/><line x1="249.3" y1="2.5" x2="249.3" y2="16.5" stroke="#10202a" stroke-width="1.3"/><rect x="0" y="0" width="277" height="19" fill="url(#g8)"/></g></svg>
<div style="left:2877px;top:46px;width:1px;height:1620px;background:#b4b4bc;"></div>
<div style="left:2878px;top:46px;width:3px;height:1620px;background:#fafafc;"></div>
<div style="left:2881px;top:46px;width:61px;height:1620px;background:#e8e8f8;"></div>
<div style="left:2942px;top:46px;width:1px;height:1620px;background:#1a1a28;"></div>
<div style="left:2881px;top:46px;width:61px;height:1147px;background:linear-gradient(90deg,#8a8a9c 0px,#d8d8e4 2px,#f4f6fc 12%,#e8e8f4 50%,#c8cadc 82%,#9498b4 100%);border-radius:0 0 5px 5px;"></div>
<svg width="34" height="4" style="left:2895px;top:49px"><rect x="0.0" y="0" width="2" height="2" fill="#8a8a9a"/><rect x="3.6" y="0" width="2" height="2" fill="#8a8a9a"/><rect x="7.2" y="0" width="2" height="2" fill="#8a8a9a"/><rect x="10.8" y="0" width="2" height="2" fill="#8a8a9a"/><rect x="14.4" y="0" width="2" height="2" fill="#8a8a9a"/><rect x="18.0" y="0" width="2" height="2" fill="#8a8a9a"/><rect x="21.6" y="0" width="2" height="2" fill="#8a8a9a"/><rect x="25.2" y="0" width="2" height="2" fill="#8a8a9a"/><rect x="28.8" y="0" width="2" height="2" fill="#8a8a9a"/></svg>
<div style="left:2891px;top:283px;width:40px;height:1px;background:#a8aab8;"></div>
<div style="left:2891px;top:1131px;width:40px;height:1px;background:#a8aab8;"></div>
<div style="left:2887px;top:59px;width:48px;height:47px;background:#1b1d19;"></div>
<svg width="48" height="47" viewBox="0 0 48 47" style="left:2887px;top:59px"><path d="M4 25 Q3 22.5 7.5 22.8 L13.5 22.8 L25.5 34.6 L11.3 35.8 Q9.5 35.8 8.5 34.3 Z" fill="none" stroke="#f0f0e6" stroke-width="2.0" stroke-linejoin="round" stroke-linecap="round"/><ellipse cx="10.2" cy="29.2" rx="1.6" ry="1" transform="rotate(25 10.2 29.2)" fill="#f0f0e6"/><path d="M13.2 22.6 Q14.5 16.5 18.3 16.8 Q22.5 17 23.5 20 L25.7 34.3" fill="none" stroke="#f0f0e6" stroke-width="2.0" stroke-linejoin="round" stroke-linecap="round"/><path d="M18.3 16.8 L37.8 11.9 Q42.8 11.5 44 16.2 L44.2 30.4 L25.7 34.6" fill="none" stroke="#f0f0e6" stroke-width="2.0" stroke-linejoin="round" stroke-linecap="round"/><path d="M26.8 27.2 L32.5 26.1 L32.5 28.3 L37.8 27.2 L38.2 23.8 L43.8 22.7 L44.2 30.4 L26.8 33.6 Z" fill="#f0f0e6"/></svg>
<div style="left:2887px;top:115px;width:48px;height:47px;background:#1b1d19;"></div>
<svg width="48" height="47" viewBox="0 0 48 47" style="left:2887px;top:115px"><path d="M4 26 Q3 23.5 7.5 23.6 L13.5 23.6 L25.5 34.9 L11.3 36.2 Q9.5 36.2 8.5 34.7 Z" fill="none" stroke="#f0f0e6" stroke-width="2.0" stroke-linejoin="round" stroke-linecap="round"/><ellipse cx="10.2" cy="30" rx="1.6" ry="1" transform="rotate(25 10.2 30)" fill="#f0f0e6"/><path d="M13.2 23 Q15 16.5 18.9 16.6 Q22.8 17.2 23.6 20.5 L25.7 34.7" fill="none" stroke="#f0f0e6" stroke-width="2.0" stroke-linejoin="round" stroke-linecap="round"/><path d="M18.9 16.6 L37 12.2 Q43 11.8 44.2 16 L44.5 30.3 L25.7 34.9" fill="none" stroke="#f0f0e6" stroke-width="2.0" stroke-linejoin="round" stroke-linecap="round"/><path d="M17.4 25.8 Q21 28 21.9 32.4 M19.7 24.2 Q22.5 26 23 29.4" fill="none" stroke="#f0f0e6" stroke-width="1.5" stroke-linejoin="round" stroke-linecap="round"/><path d="M28.2 27.2 L28.2 12.4 L35.5 10.9 L35.8 15.8 L31 16.6 L31 27 Z" fill="#f0f0e6"/></svg>
<div style="left:2887px;top:171px;width:48px;height:47px;background:#1b1d19;"></div>
<svg width="48" height="47" viewBox="0 0 48 47" style="left:2887px;top:171px"><path d="M9.9 10 Q9.9 8.2 11.7 8.2 L37.3 8.2 Q39 8.2 39 10 L39 37.4 L13.2 37.4 L9.9 34.2 Z" fill="none" stroke="#f0f0e6" stroke-width="2.2" stroke-linejoin="round" stroke-linecap="round"/><path d="M15.4 8.4 L15.4 21.8 L34.5 21.8 L34.5 8.4" fill="none" stroke="#f0f0e6" stroke-width="2.2" stroke-linejoin="round" stroke-linecap="round"/><path d="M17.7 37.4 L17.7 26.6 L32.2 26.6 L32.2 37.4 Z" fill="#f0f0e6"/><rect x="19.8" y="28.8" width="3.6" height="8.6" fill="#1b1d19"/></svg>
<div style="left:2887px;top:227px;width:48px;height:47px;background:#1b1d19;"></div>
<svg width="48" height="47" viewBox="0 0 48 47" style="left:2887px;top:227px"><path d="M15.5 16.8 L38.4 36.6" stroke="#f0f0e6" stroke-width="4.6" stroke-linecap="butt"/><path d="M6.1 17.3 L11.7 10.5 L21.2 6.7 L25.3 9.4 L19.7 11.6 L15.8 16.2 L11.4 21.8 Z" fill="#f0f0e6"/><path d="M15.6 31 L32.8 14.6" stroke="#f0f0e6" stroke-width="4.2" stroke-linecap="butt"/><path d="M40.9 13.6 A4.6 4.6 0 1 1 36.4 8.9" fill="none" stroke="#f0f0e6" stroke-width="3.4"/><path d="M8.6 33.8 A4.6 4.6 0 1 1 13.1 38.5" fill="none" stroke="#f0f0e6" stroke-width="3.4"/></svg>
<div style="left:2887px;top:290px;width:48px;height:47px;background:#1b1d19;"></div>
<svg width="48" height="47" viewBox="0 0 48 47" style="left:2887px;top:290px"><rect x="9" y="8" width="31.3" height="31.8" fill="none" stroke="#f0f0e6" stroke-width="2.6" stroke-linejoin="round" stroke-linecap="round"/><path d="M13.2 22.2 L16.6 20.7 L20.6 28.6 L42.3 5.2 L44.4 5.4 L21.4 35 L19.2 34.6 Z" fill="#f0f0e6"/></svg>
<div style="left:2887px;top:347px;width:48px;height:47px;background:#1b1d19;"></div>
<svg width="48" height="47" viewBox="0 0 48 47" style="left:2887px;top:347px"><path d="M2.6 12 L2.6 38.6 L22 38.2 L23.6 37.2 L25.2 38.2 L44.8 38.6 L44.8 12" fill="none" stroke="#f0f0e6" stroke-width="1.6" stroke-linejoin="round" stroke-linecap="round"/><path d="M5 11.5 L5 36.2 M42.4 11.5 L42.4 36.2" fill="none" stroke="#f0f0e6" stroke-width="1.3" stroke-linejoin="round" stroke-linecap="round"/><path d="M8.3 10 Q15 7.2 22.6 9.6 L23.6 33.6 Q16 31 8.3 34 Z" fill="none" stroke="#f0f0e6" stroke-width="2.2" stroke-linejoin="round" stroke-linecap="round"/><path d="M24.6 9.6 Q32 7.2 39.2 10 L39.2 34 Q31.5 31 23.6 33.6" fill="none" stroke="#f0f0e6" stroke-width="2.2" stroke-linejoin="round" stroke-linecap="round"/><path d="M7 35.8 Q15 33 23.6 36 Q32 33 40.5 35.8" fill="none" stroke="#f0f0e6" stroke-width="1.4" stroke-linejoin="round" stroke-linecap="round"/></svg>
<div style="left:2887px;top:403px;width:48px;height:47px;background:#1b1d19;"></div>
<svg width="48" height="47" viewBox="0 0 48 47" style="left:2887px;top:403px"><path d="M14 2.6 L34.7 2.6 L34.5 13 Q34 18 29 21 L19.6 21 Q14.6 18 14.2 13 Z" fill="#f0f0e6"/><rect x="22.3" y="4.4" width="3" height="11.8" fill="#1b1d19"/><rect x="21" y="21.2" width="6.6" height="1.3" fill="#f0f0e6" opacity="0.7"/><circle cx="24.2" cy="33" r="8.1" fill="none" stroke="#f0f0e6" stroke-width="4.8"/></svg>
<div style="left:2887px;top:459px;width:48px;height:47px;background:#1b1d19;"></div>
<svg width="48" height="47" viewBox="0 0 48 47" style="left:2887px;top:459px"><path d="M3.8 23.3 Q24 2.5 44.2 23.3 Q24 44 3.8 23.3 Z" fill="none" stroke="#f0f0e6" stroke-width="2.6" stroke-linejoin="round" stroke-linecap="round"/><circle cx="23.8" cy="23.3" r="7.4" fill="none" stroke="#f0f0e6" stroke-width="2.4"/><circle cx="23.8" cy="23.3" r="4.6" fill="none" stroke="#f0f0e6" stroke-width="2.6"/><path d="M19 18.5 L22 17 L23.5 21.5 Z" fill="#f0f0e6"/></svg>
<div style="left:2887px;top:515px;width:48px;height:47px;background:#1b1d19;"></div>
<svg width="48" height="47" viewBox="0 0 48 47" style="left:2887px;top:515px"><rect x="7.6" y="8.7" width="9.4" height="8.7" fill="#f0f0e6"/><rect x="18.1" y="8.7" width="9.1" height="8.7" fill="#f0f0e6"/><rect x="28.7" y="8.7" width="9.8" height="8.7" fill="#f0f0e6"/><rect x="9.1" y="19.6" width="7.5" height="4.2" fill="#f0f0e6"/><rect x="9.1" y="26.8" width="7.5" height="4.2" fill="#f0f0e6"/><rect x="9.1" y="33.2" width="7.5" height="4.6" fill="#f0f0e6"/><rect x="19.3" y="19.6" width="7.5" height="4.2" fill="#f0f0e6"/><rect x="19.3" y="26.8" width="7.5" height="4.2" fill="#f0f0e6"/><rect x="19.3" y="33.2" width="7.5" height="4.6" fill="#f0f0e6"/><rect x="29.8" y="19.6" width="7.5" height="4.2" fill="#f0f0e6"/><rect x="29.8" y="26.8" width="7.5" height="4.2" fill="#f0f0e6"/><rect x="29.8" y="33.2" width="7.5" height="4.6" fill="#f0f0e6"/></svg>
<div style="left:2887px;top:571px;width:48px;height:47px;background:#1b1d19;"></div>
<svg width="48" height="47" viewBox="0 0 48 47" style="left:2887px;top:571px"><rect x="7.6" y="10.1" width="7.5" height="25.3" fill="#f0f0e6"/><rect x="7.6" y="18.3" width="7.5" height="0.9" fill="#6a6a66"/><rect x="7.6" y="27.2" width="7.5" height="0.9" fill="#6a6a66"/><rect x="18.1" y="12" width="21.9" height="4.5" fill="#f0f0e6"/><rect x="18.1" y="21.1" width="21.9" height="4.5" fill="#f0f0e6"/><rect x="18.1" y="29.6" width="21.9" height="4.6" fill="#f0f0e6"/></svg>
<div style="left:2887px;top:627px;width:48px;height:47px;background:#1b1d19;"></div>
<svg width="48" height="47" viewBox="0 0 48 47" style="left:2887px;top:627px"><path d="M11.9 9.8 L40.7 9.8 L40.7 35 Q40.7 36.9 38.8 36.9 L8.2 36.9 Q6 36.9 6 34.4 L6 15.3 L11.9 15.3" fill="none" stroke="#f0f0e6" stroke-width="2.4" stroke-linejoin="round" stroke-linecap="round"/><path d="M8.9 17.2 L8.9 33.8" fill="none" stroke="#f0f0e6" stroke-width="2.0" stroke-linejoin="round" stroke-linecap="round"/><path d="M12.3 11 L12.3 36" fill="none" stroke="#f0f0e6" stroke-width="1.6" stroke-linejoin="round" stroke-linecap="round"/><rect x="14" y="13.3" width="24.3" height="20.2" fill="none" stroke="#f0f0e6" stroke-width="1.8"/><rect x="17.4" y="15.5" width="16.6" height="1.5" fill="#f0f0e6"/><rect x="16.6" y="20" width="5.7" height="0.9" fill="#f0f0e6"/><rect x="16.6" y="23" width="5.7" height="0.9" fill="#f0f0e6"/><rect x="16.6" y="26.5" width="5.7" height="5.2" fill="#9c9c98"/><rect x="25.3" y="20" width="10.6" height="10.2" fill="#f0f0e6"/></svg>
<div style="left:2887px;top:683px;width:48px;height:47px;background:#1b1d19;"></div>
<svg width="48" height="47" viewBox="0 0 48 47" style="left:2887px;top:683px"><path d="M9 2.4 L9.2 43.5" stroke="#f0f0e6" stroke-width="3" stroke-linecap="round"/><path d="M10.2 5.2 Q15 2.2 19.7 2.9 Q25.5 3.8 27.2 6.7 L27.2 22.6 Q22 20.5 17 22.5 Q13 24.5 10.2 27.9" fill="none" stroke="#f0f0e6" stroke-width="2.0" stroke-linejoin="round" stroke-linecap="round"/><path d="M27.2 15.8 Q34 16.5 40.4 12 L40.4 33.2 Q36 37.5 31 37 Q25 36.5 21.9 33.9 L23.4 27.1 L27.2 22.6" fill="none" stroke="#f0f0e6" stroke-width="2.0" stroke-linejoin="round" stroke-linecap="round"/></svg>
<div style="left:2887px;top:739px;width:48px;height:47px;background:#1b1d19;"></div>
<svg width="48" height="47" viewBox="0 0 48 47" style="left:2887px;top:739px"><rect x="9.1" y="6.8" width="30.2" height="2.6" fill="#f0f0e6"/><rect x="23.2" y="5.2" width="1.4" height="2" fill="#f0f0e6"/><rect x="12.5" y="9.2" width="23.5" height="18" fill="none" stroke="#f0f0e6" stroke-width="2.6"/><rect x="9.1" y="26.6" width="30.2" height="2.8" fill="#f0f0e6"/><path d="M23.8 29.4 L23.8 40" stroke="#f0f0e6" stroke-width="2.4"/><path d="M17 36.2 L23.8 32.6 L31 36.2" fill="none" stroke="#f0f0e6" stroke-width="2.2" stroke-linejoin="round" stroke-linecap="round"/></svg>
<div style="left:2887px;top:795px;width:48px;height:47px;background:#1b1d19;"></div>
<svg width="48" height="47" viewBox="0 0 48 47" style="left:2887px;top:795px"><path d="M7.6 33.5 L15.8 16.3 L26.5 12.6 L32.8 18.6 L23.2 42.1 Z" fill="#f0f0e6"/><circle cx="25.4" cy="19" r="2.9" fill="#1b1d19"/><circle cx="34.8" cy="8.8" r="3.7" fill="none" stroke="#f0f0e6" stroke-width="1.7"/><path d="M26.6 16.6 L32.4 11.6" fill="none" stroke="#f0f0e6" stroke-width="1.5" stroke-linejoin="round" stroke-linecap="round"/></svg>
<div style="left:2887px;top:851px;width:48px;height:47px;background:#1b1d19;"></div>
<svg width="48" height="47" viewBox="0 0 48 47" style="left:2887px;top:851px"><rect x="13.8" y="5.9" width="19.3" height="17.8" fill="none" stroke="#f0f0e6" stroke-width="2.5"/><rect x="17" y="10.2" width="13.2" height="1.6" fill="#f0f0e6"/><rect x="17" y="14.7" width="13.2" height="1.6" fill="#f0f0e6"/><rect x="17" y="19.3" width="13.2" height="1.6" fill="#f0f0e6"/><rect x="7.4" y="25.1" width="32.5" height="14.4" rx="2.2" fill="none" stroke="#f0f0e6" stroke-width="2.5"/><rect x="11" y="29.5" width="25.3" height="5.3" rx="2" fill="#f0f0e6"/></svg>
<div style="left:2887px;top:907px;width:48px;height:47px;background:#1b1d19;"></div>
<svg width="48" height="47" viewBox="0 0 48 47" style="left:2887px;top:907px"><path d="M4.4 39.6 L8.2 33.6 L11.6 31.8 L38.6 11.4 Q42.4 9.8 44 12.6 Q44.6 15.2 41.6 17.2 L14.8 36.4 L12.2 37 Z" fill="#f0f0e6"/><path d="M13.6 32.2 L16.2 35.2 M22.8 25.6 L26 28.4 M30 20.8 Q32 21.6 34 20.4 M35.6 15.8 L38.2 18.4" stroke="#1b1d19" stroke-width="1.8"/></svg>
<div style="left:2887px;top:963px;width:48px;height:47px;background:#1b1d19;"></div>
<svg width="48" height="47" viewBox="0 0 48 47" style="left:2887px;top:963px"><circle cx="28" cy="18.5" r="8.3" fill="none" stroke="#f0f0e6" stroke-width="4.4"/><path d="M21.2 26.6 L12 35" stroke="#f0f0e6" stroke-width="4.6" stroke-linecap="round"/></svg>
<div style="left:2887px;top:1019px;width:48px;height:47px;background:#1b1d19;"></div>
<svg width="48" height="47" viewBox="0 0 48 47" style="left:2887px;top:1019px"><path d="M9.6 9.6 L14 11.2 L18.9 27.4" fill="none" stroke="#f0f0e6" stroke-width="2.6" stroke-linejoin="round" stroke-linecap="round"/><path d="M14.4 13.5 L40.4 14.6 L39.3 27.9 L18.9 27.9 Z" fill="#f0f0e6"/><rect x="19.9" y="16.9" width="3.5" height="2.3" fill="#1b1d19"/><rect x="19.9" y="21.5" width="3.5" height="2.3" fill="#1b1d19"/><rect x="26.2" y="16.9" width="3.5" height="2.3" fill="#1b1d19"/><rect x="26.2" y="21.5" width="3.5" height="2.3" fill="#1b1d19"/><rect x="32.8" y="16.9" width="3.5" height="2.3" fill="#1b1d19"/><rect x="32.8" y="21.5" width="3.5" height="2.3" fill="#1b1d19"/><circle cx="19.3" cy="33.9" r="3.2" fill="#f0f0e6"/><circle cx="35.1" cy="33.9" r="3.2" fill="#f0f0e6"/></svg>
<div style="left:2887px;top:1075px;width:48px;height:47px;background:#1b1d19;"></div>
<svg width="48" height="47" viewBox="0 0 48 47" style="left:2887px;top:1075px"><circle cx="23.4" cy="22.6" r="17" fill="none" stroke="#f0f0e6" stroke-width="2.2"/><circle cx="23.4" cy="22.6" r="3.9" fill="#f0f0e6"/><rect x="20.9" y="9.4" width="5" height="7" fill="#f0f0e6"/><rect x="-2.5" y="-3.5" width="5" height="7" transform="translate(14.9 27.4) rotate(60)" fill="#f0f0e6"/><rect x="-2.5" y="-3.5" width="5" height="7" transform="translate(31.9 27.4) rotate(-60)" fill="#f0f0e6"/></svg>
<div style="left:2887px;top:1138px;width:48px;height:47px;background:#1b1d19;"></div>
<svg width="48" height="47" viewBox="0 0 48 47" style="left:2887px;top:1138px"><circle cx="23.8" cy="23.8" r="18.6" fill="none" stroke="#f0f0e6" stroke-width="2.6"/><circle cx="24.2" cy="13.4" r="4" fill="#f0f0e6"/><rect x="20.9" y="19.8" width="6.2" height="18.5" fill="#f0f0e6"/></svg>
</body></html>
